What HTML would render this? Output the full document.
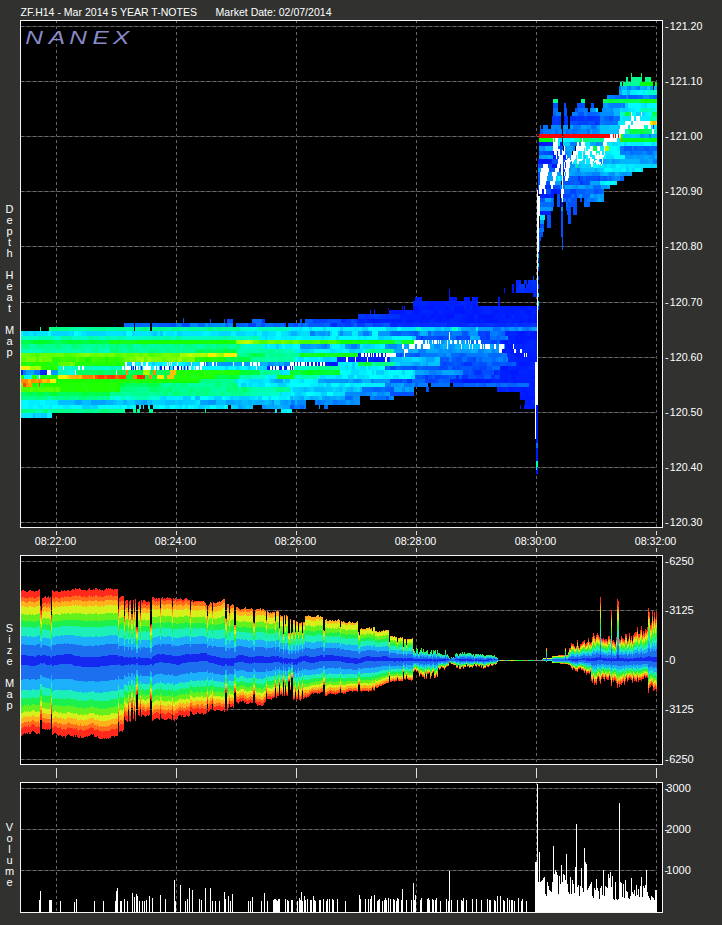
<!DOCTYPE html><html><head><meta charset="utf-8"><title>ZF.H14 - Mar 2014 5 YEAR T-NOTES</title><style>html,body{margin:0;padding:0;background:#313230;overflow:hidden}body{width:722px;height:925px;position:relative;font-family:"Liberation Sans",Arial,sans-serif}</style></head><body><svg width="722" height="925" viewBox="0 0 722 925" style="position:absolute;left:0;top:0;display:block"><g shape-rendering="crispEdges"><rect x="20" y="20" width="643" height="508" fill="#000"/><rect x="20" y="555" width="643" height="210" fill="#000"/><rect x="20" y="782" width="643" height="131" fill="#000"/><path d="M56.5 20V527" stroke="#666666" stroke-width="1" stroke-dasharray="3 3"/><path d="M176.5 20V527" stroke="#666666" stroke-width="1" stroke-dasharray="3 3"/><path d="M296.5 20V527" stroke="#666666" stroke-width="1" stroke-dasharray="3 3"/><path d="M416.5 20V527" stroke="#666666" stroke-width="1" stroke-dasharray="3 3"/><path d="M536.5 20V527" stroke="#666666" stroke-width="1" stroke-dasharray="3 3"/><path d="M656.5 20V527" stroke="#666666" stroke-width="1" stroke-dasharray="3 3"/><path d="M56.5 555V764" stroke="#666666" stroke-width="1" stroke-dasharray="3 3"/><path d="M176.5 555V764" stroke="#666666" stroke-width="1" stroke-dasharray="3 3"/><path d="M296.5 555V764" stroke="#666666" stroke-width="1" stroke-dasharray="3 3"/><path d="M416.5 555V764" stroke="#666666" stroke-width="1" stroke-dasharray="3 3"/><path d="M536.5 555V764" stroke="#666666" stroke-width="1" stroke-dasharray="3 3"/><path d="M656.5 555V764" stroke="#666666" stroke-width="1" stroke-dasharray="3 3"/><path d="M56.5 782V912" stroke="#666666" stroke-width="1" stroke-dasharray="3 3"/><path d="M176.5 782V912" stroke="#666666" stroke-width="1" stroke-dasharray="3 3"/><path d="M296.5 782V912" stroke="#666666" stroke-width="1" stroke-dasharray="3 3"/><path d="M416.5 782V912" stroke="#666666" stroke-width="1" stroke-dasharray="3 3"/><path d="M536.5 782V912" stroke="#666666" stroke-width="1" stroke-dasharray="3 3"/><path d="M656.5 782V912" stroke="#666666" stroke-width="1" stroke-dasharray="3 3"/><path d="M21 26.5H657" stroke="#3c3c3c" stroke-width="1"/><path d="M21 26.5H657" stroke="#6a6a6a" stroke-width="1" stroke-dasharray="3 3"/><path d="M21 81.5H657" stroke="#3c3c3c" stroke-width="1"/><path d="M21 81.5H657" stroke="#6a6a6a" stroke-width="1" stroke-dasharray="3 3"/><path d="M21 136.5H657" stroke="#3c3c3c" stroke-width="1"/><path d="M21 136.5H657" stroke="#6a6a6a" stroke-width="1" stroke-dasharray="3 3"/><path d="M21 191.5H657" stroke="#3c3c3c" stroke-width="1"/><path d="M21 191.5H657" stroke="#6a6a6a" stroke-width="1" stroke-dasharray="3 3"/><path d="M21 246.5H657" stroke="#3c3c3c" stroke-width="1"/><path d="M21 246.5H657" stroke="#6a6a6a" stroke-width="1" stroke-dasharray="3 3"/><path d="M21 302.5H657" stroke="#3c3c3c" stroke-width="1"/><path d="M21 302.5H657" stroke="#6a6a6a" stroke-width="1" stroke-dasharray="3 3"/><path d="M21 357.5H657" stroke="#3c3c3c" stroke-width="1"/><path d="M21 357.5H657" stroke="#6a6a6a" stroke-width="1" stroke-dasharray="3 3"/><path d="M21 412.5H657" stroke="#3c3c3c" stroke-width="1"/><path d="M21 412.5H657" stroke="#6a6a6a" stroke-width="1" stroke-dasharray="3 3"/><path d="M21 467.5H657" stroke="#3c3c3c" stroke-width="1"/><path d="M21 467.5H657" stroke="#6a6a6a" stroke-width="1" stroke-dasharray="3 3"/><path d="M21 522.5H657" stroke="#3c3c3c" stroke-width="1"/><path d="M21 522.5H657" stroke="#6a6a6a" stroke-width="1" stroke-dasharray="3 3"/><path d="M21 561.5H657" stroke="#3c3c3c" stroke-width="1"/><path d="M21 561.5H657" stroke="#6a6a6a" stroke-width="1" stroke-dasharray="3 3"/><path d="M21 610.5H657" stroke="#3c3c3c" stroke-width="1"/><path d="M21 610.5H657" stroke="#6a6a6a" stroke-width="1" stroke-dasharray="3 3"/><path d="M21 660.5H657" stroke="#3c3c3c" stroke-width="1"/><path d="M21 660.5H657" stroke="#6a6a6a" stroke-width="1" stroke-dasharray="3 3"/><path d="M21 709.5H657" stroke="#3c3c3c" stroke-width="1"/><path d="M21 709.5H657" stroke="#6a6a6a" stroke-width="1" stroke-dasharray="3 3"/><path d="M21 759.5H657" stroke="#3c3c3c" stroke-width="1"/><path d="M21 759.5H657" stroke="#6a6a6a" stroke-width="1" stroke-dasharray="3 3"/><path d="M21 788.5H657" stroke="#3c3c3c" stroke-width="1"/><path d="M21 788.5H657" stroke="#6a6a6a" stroke-width="1" stroke-dasharray="3 3"/><path d="M21 829.5H657" stroke="#3c3c3c" stroke-width="1"/><path d="M21 829.5H657" stroke="#6a6a6a" stroke-width="1" stroke-dasharray="3 3"/><path d="M21 870.5H657" stroke="#3c3c3c" stroke-width="1"/><path d="M21 870.5H657" stroke="#6a6a6a" stroke-width="1" stroke-dasharray="3 3"/><path d="M631 73h1v4h-1zM641 73h1v4h-1zM652 112h5v4h-5zM621 134h2v4h-2zM554 138h1v4h-1zM580 138h2v4h-2zM593 146h4v5h-4zM577 164h1v4h-1zM251 353h3v4h-3zM260 353h5v4h-5zM225 357h3v5h-3zM228 357h8v5h-8zM236 357h3v5h-3zM245 357h3v5h-3zM358 362h3v4h-3zM117 370h6v5h-6zM134 370h6v5h-6zM140 370h3v5h-3zM150 370h3v5h-3zM165 370h5v5h-5zM255 370h5v5h-5zM145 375h4v4h-4zM152 375h5v4h-5zM164 375h3v4h-3zM215 375h5v4h-5zM223 375h6v4h-6zM147 383h8v4h-8z" fill="#00ff48"/><path d="M626 77h2v5h-2zM631 77h8v5h-8zM639 77h3v5h-3zM620 82h2v4h-2zM627 82h5v4h-5zM632 82h3v4h-3zM638 82h2v4h-2zM553 99h5v4h-5zM581 99h4v4h-4zM650 129h2v5h-2zM589 138h3v4h-3zM592 138h5v4h-5zM40 327h1v4h-1zM62 327h2v4h-2zM91 327h3v4h-3zM94 327h8v4h-8zM117 327h8v4h-8zM130 327h2v4h-2zM140 327h2v4h-2zM21 344h2v5h-2zM35 344h4v5h-4zM44 344h4v5h-4zM48 344h8v5h-8zM60 344h3v5h-3zM63 344h2v5h-2zM80 344h2v5h-2zM96 344h3v5h-3zM102 344h4v5h-4zM108 344h3v5h-3zM119 344h8v5h-8zM163 344h3v5h-3zM182 344h3v5h-3zM193 344h5v5h-5zM203 344h6v5h-6zM219 344h3v5h-3zM128 349h5v4h-5zM133 349h3v4h-3zM136 349h3v4h-3zM177 349h4v4h-4zM181 349h3v4h-3zM184 349h6v4h-6zM383 349h3v4h-3zM386 349h3v4h-3zM389 349h5v4h-5zM237 353h4v4h-4zM241 353h4v4h-4zM245 353h2v4h-2zM271 353h3v4h-3zM274 353h5v4h-5zM279 353h2v4h-2zM281 353h6v4h-6zM297 353h3v4h-3zM250 357h4v5h-4zM260 357h6v5h-6zM278 357h3v5h-3zM386 362h6v4h-6zM392 362h3v4h-3zM323 366h4v4h-4zM262 370h3v5h-3zM265 370h8v5h-8zM276 370h4v5h-4zM222 379h6v4h-6zM228 379h5v4h-5zM233 379h2v4h-2zM110 392h5v4h-5zM118 392h6v4h-6zM130 392h8v4h-8zM138 392h6v4h-6zM147 392h2v4h-2zM153 392h8v4h-8zM161 392h3v4h-3zM181 392h4v4h-4zM199 392h5v4h-5zM207 392h8v4h-8zM235 392h5v4h-5zM248 392h2v4h-2zM26 396h8v4h-8zM45 396h3v4h-3zM52 396h4v4h-4zM59 396h3v4h-3zM62 396h3v4h-3zM69 396h4v4h-4zM73 396h3v4h-3zM86 396h5v4h-5zM96 396h4v4h-4zM100 396h6v4h-6zM106 396h4v4h-4zM26 409h4v4h-4zM53 409h6v4h-6zM63 409h2v4h-2zM65 409h3v4h-3zM71 409h3v4h-3zM91 409h3v4h-3zM96 409h2v4h-2zM98 409h3v4h-3zM109 409h6v4h-6zM117 409h5v4h-5zM122 409h3v4h-3zM133 409h3v4h-3zM137 409h3v4h-3zM149 409h4v4h-4zM205 409h1v4h-1z" fill="#00ff90"/><path d="M645 77h3v5h-3zM648 77h3v5h-3zM49 327h3v4h-3zM52 327h8v4h-8zM60 327h2v4h-2zM64 327h5v4h-5zM102 327h4v4h-4zM142 327h6v4h-6zM27 344h3v5h-3zM39 344h3v5h-3zM42 344h2v5h-2zM75 344h5v5h-5zM111 344h5v5h-5zM142 344h4v5h-4zM174 344h3v5h-3zM177 344h3v5h-3zM185 344h8v5h-8zM209 344h3v5h-3zM222 344h5v5h-5zM227 344h3v5h-3zM121 349h2v4h-2zM148 349h3v4h-3zM151 349h5v4h-5zM166 349h3v4h-3zM169 349h2v4h-2zM269 353h2v4h-2zM291 353h3v4h-3zM376 362h6v4h-6zM382 362h4v4h-4zM317 366h6v4h-6zM327 366h6v4h-6zM200 379h8v4h-8zM208 379h8v4h-8zM216 379h6v4h-6zM180 383h5v4h-5zM185 383h3v4h-3zM226 383h3v4h-3zM229 383h3v4h-3zM115 392h3v4h-3zM144 392h3v4h-3zM179 392h2v4h-2zM185 392h8v4h-8zM232 392h3v4h-3zM240 392h3v4h-3zM21 396h5v4h-5zM34 396h8v4h-8zM42 396h3v4h-3zM56 396h3v4h-3zM91 396h5v4h-5zM21 409h3v4h-3zM30 409h3v4h-3zM33 409h2v4h-2zM59 409h4v4h-4zM68 409h3v4h-3zM85 409h6v4h-6zM115 409h2v4h-2z" fill="#00ff82"/><path d="M623 82h4v4h-4zM583 138h6v4h-6zM600 138h3v4h-3zM397 340h3v4h-3zM400 340h2v4h-2zM23 344h4v5h-4zM56 344h4v5h-4zM72 344h3v5h-3zM116 344h3v5h-3zM127 344h4v5h-4zM131 344h2v5h-2zM216 344h3v5h-3zM236 344h4v5h-4zM110 349h8v4h-8zM156 349h2v4h-2zM371 349h4v4h-4zM247 353h4v4h-4zM160 383h2v4h-2zM173 383h3v4h-3zM215 383h6v4h-6zM232 383h6v4h-6zM164 392h4v4h-4zM171 392h8v4h-8zM196 392h3v4h-3zM204 392h3v4h-3zM222 392h2v4h-2zM65 396h4v4h-4zM78 396h8v4h-8zM24 409h2v4h-2zM43 409h5v4h-5zM101 409h8v4h-8z" fill="#00ff74"/><path d="M635 82h3v4h-3zM643 108h5v4h-5zM650 116h3v5h-3zM653 116h4v5h-4zM79 327h4v4h-4zM125 327h5v4h-5zM132 327h2v4h-2zM148 327h2v4h-2zM277 327h5v4h-5zM30 344h5v5h-5zM106 344h2v5h-2zM133 344h6v5h-6zM139 344h3v5h-3zM180 344h2v5h-2zM198 344h5v5h-5zM123 349h5v4h-5zM139 349h6v4h-6zM375 349h8v4h-8zM265 353h4v4h-4zM287 353h4v4h-4zM266 357h3v5h-3zM275 357h3v5h-3zM110 366h5v4h-5zM120 366h3v4h-3zM273 370h3v5h-3zM244 375h8v4h-8zM294 375h2v4h-2zM301 375h8v4h-8zM313 375h3v4h-3zM188 383h5v4h-5zM168 392h3v4h-3zM250 392h5v4h-5zM48 396h4v4h-4zM76 396h2v4h-2zM138 396h6v4h-6zM144 396h5v4h-5zM35 409h8v4h-8zM48 409h5v4h-5z" fill="#00ffac"/><path d="M640 82h3v4h-3zM643 82h6v4h-6zM655 82h2v4h-2zM541 138h5v4h-5zM551 138h2v4h-2z" fill="#00ff10"/><path d="M649 82h4v4h-4zM539 138h2v4h-2z" fill="#00ff00"/><path d="M619 86h2v4h-2zM629 86h2v4h-2zM637 86h3v4h-3zM600 116h4v5h-4zM649 134h2v4h-2zM570 142h7v4h-7zM573 146h2v5h-2zM600 159h3v5h-3zM653 159h4v5h-4zM577 168h3v4h-3zM560 185h5v4h-5zM551 198h2v4h-2zM310 331h5v5h-5zM363 331h6v5h-6zM324 344h3v5h-3zM351 344h6v5h-6zM418 349h8v4h-8zM478 349h4v4h-4zM492 349h3v4h-3zM449 357h3v5h-3zM200 362h5v4h-5zM205 362h3v4h-3zM23 370h3v5h-3zM34 370h6v5h-6zM429 370h4v5h-4zM433 370h3v5h-3zM356 379h3v4h-3zM371 379h3v4h-3zM385 383h2v4h-2zM387 383h4v4h-4zM404 383h8v4h-8zM361 392h5v4h-5zM291 400h4v5h-4z" fill="#007cff"/><path d="M621 86h3v4h-3zM624 86h3v4h-3zM613 108h7v4h-7zM614 112h2v4h-2zM616 112h4v4h-4zM651 134h6v4h-6zM545 146h8v5h-8zM570 151h2v4h-2zM548 155h3v4h-3zM655 155h2v4h-2zM609 159h3v5h-3zM598 198h3v4h-3zM338 331h2v5h-2zM343 331h9v5h-9zM420 331h6v5h-6zM470 336h4v4h-4zM445 340h8v4h-8zM430 344h4v5h-4zM443 344h6v5h-6zM501 344h4v5h-4zM413 349h5v4h-5zM471 349h4v4h-4zM251 362h3v4h-3zM262 362h6v4h-6zM362 379h3v4h-3zM365 379h6v4h-6zM290 396h3v4h-3zM298 396h3v4h-3zM313 396h6v4h-6zM336 396h4v4h-4zM150 400h2v5h-2zM295 400h2v5h-2zM277 405h5v4h-5z" fill="#00b4ff"/><path d="M627 86h2v4h-2zM590 108h2v4h-2zM602 108h4v4h-4zM610 108h3v4h-3zM600 112h6v4h-6zM606 112h8v4h-8zM596 142h3v4h-3zM543 146h2v5h-2zM565 151h5v4h-5zM652 155h3v4h-3zM576 185h2v4h-2zM594 194h3v4h-3zM595 198h3v4h-3zM551 207h2v4h-2zM328 331h2v5h-2zM340 331h3v5h-3zM467 340h3v4h-3zM321 344h3v5h-3zM388 344h6v5h-6zM394 344h3v5h-3zM434 344h6v5h-6zM449 344h2v5h-2zM439 349h3v4h-3zM448 349h5v4h-5zM482 349h2v4h-2zM268 362h3v4h-3zM436 370h6v5h-6zM460 370h3v5h-3zM346 379h2v4h-2zM353 379h3v4h-3zM359 379h3v4h-3zM412 383h3v4h-3zM402 387h3v5h-3zM345 392h8v4h-8zM353 392h8v4h-8zM366 392h6v4h-6zM377 392h5v4h-5zM382 392h2v4h-2zM297 400h3v5h-3zM300 400h6v5h-6z" fill="#008aff"/><path d="M631 86h3v4h-3zM643 134h6v4h-6zM590 142h3v4h-3zM593 142h3v4h-3zM565 146h8v5h-8zM542 155h6v4h-6zM551 155h2v4h-2zM634 155h2v4h-2zM644 155h2v4h-2zM646 155h3v4h-3zM603 159h6v5h-6zM615 159h5v5h-5zM648 159h5v5h-5zM571 168h6v4h-6zM557 172h2v4h-2zM551 176h2v5h-2zM555 181h2v4h-2zM559 181h2v4h-2zM590 181h8v4h-8zM565 185h5v4h-5zM570 185h3v4h-3zM578 185h5v4h-5zM583 185h2v4h-2zM590 194h4v4h-4zM597 194h3v4h-3zM545 198h6v4h-6zM315 331h4v5h-4zM325 331h3v5h-3zM358 331h5v5h-5zM426 331h2v5h-2zM474 336h6v4h-6zM429 340h6v4h-6zM461 340h4v4h-4zM465 340h2v4h-2zM311 344h6v5h-6zM397 344h4v5h-4zM404 344h6v5h-6zM410 344h4v5h-4zM440 344h3v5h-3zM490 344h3v5h-3zM394 349h8v4h-8zM405 349h8v4h-8zM426 349h4v4h-4zM430 349h4v4h-4zM434 349h5v4h-5zM457 349h3v4h-3zM475 349h3v4h-3zM487 349h5v4h-5zM208 362h6v4h-6zM232 362h4v4h-4zM236 362h5v4h-5zM249 362h2v4h-2zM254 362h8v4h-8zM26 370h5v5h-5zM31 370h3v5h-3zM415 370h6v5h-6zM421 370h3v5h-3zM442 370h8v5h-8zM450 370h4v5h-4zM318 379h6v4h-6zM348 379h3v4h-3zM351 379h2v4h-2zM399 383h5v4h-5zM394 387h8v5h-8zM405 387h4v5h-4zM372 392h5v4h-5zM386 392h4v4h-4zM301 396h3v4h-3zM310 396h3v4h-3zM322 396h3v4h-3zM330 396h6v4h-6zM340 396h5v4h-5zM288 400h3v5h-3zM266 405h3v4h-3zM269 405h8v4h-8zM282 405h4v4h-4zM286 405h4v4h-4z" fill="#00a6ff"/><path d="M634 86h3v4h-3zM650 86h3v4h-3zM592 108h4v4h-4zM606 108h4v4h-4zM563 125h5v4h-5zM640 134h3v4h-3zM579 142h2v4h-2zM599 142h4v4h-4zM539 146h4v5h-4zM539 155h3v4h-3zM567 155h4v4h-4zM625 155h5v4h-5zM630 155h4v4h-4zM636 155h3v4h-3zM639 155h3v4h-3zM642 155h2v4h-2zM649 155h3v4h-3zM570 159h2v5h-2zM612 159h3v5h-3zM640 159h3v5h-3zM643 159h5v5h-5zM570 164h5v4h-5zM538 168h3v4h-3zM569 168h2v4h-2zM548 172h4v4h-4zM559 172h2v4h-2zM561 172h2v4h-2zM565 172h1v4h-1zM547 176h4v5h-4zM557 181h2v4h-2zM598 181h2v4h-2zM573 185h3v4h-3zM600 194h4v4h-4zM601 198h3v4h-3zM540 207h8v4h-8zM548 207h3v4h-3zM561 207h2v4h-2zM540 220h4v4h-4zM470 327h2v4h-2zM472 327h4v4h-4zM319 331h3v5h-3zM322 331h3v5h-3zM369 331h3v5h-3zM378 331h5v5h-5zM383 331h3v5h-3zM386 331h4v5h-4zM470 331h4v5h-4zM474 331h4v5h-4zM423 340h6v4h-6zM435 340h6v4h-6zM441 340h4v4h-4zM453 340h8v4h-8zM300 344h5v5h-5zM305 344h6v5h-6zM317 344h4v5h-4zM327 344h3v5h-3zM345 344h3v5h-3zM348 344h3v5h-3zM357 344h3v5h-3zM385 344h3v5h-3zM401 344h3v5h-3zM414 344h3v5h-3zM421 344h2v5h-2zM451 344h4v5h-4zM480 344h8v5h-8zM488 344h2v5h-2zM493 344h8v5h-8zM402 349h3v4h-3zM442 349h6v4h-6zM453 349h4v4h-4zM460 349h6v4h-6zM466 349h5v4h-5zM484 349h3v4h-3zM495 349h4v4h-4zM214 362h8v4h-8zM222 362h4v4h-4zM226 362h6v4h-6zM241 362h4v4h-4zM245 362h4v4h-4zM271 362h4v4h-4zM51 370h7v5h-7zM424 370h2v5h-2zM426 370h3v5h-3zM454 370h3v5h-3zM457 370h3v5h-3zM324 379h3v4h-3zM327 379h8v4h-8zM335 379h8v4h-8zM343 379h3v4h-3zM374 379h5v4h-5zM379 379h5v4h-5zM384 379h6v4h-6zM391 383h8v4h-8zM409 387h3v5h-3zM412 387h2v5h-2zM384 392h2v4h-2zM325 396h5v4h-5zM262 405h4v4h-4zM319 405h1v4h-1z" fill="#0098ff"/><path d="M640 86h4v4h-4zM627 90h3v5h-3zM291 331h6v5h-6zM455 344h3v5h-3zM458 344h3v5h-3zM461 344h3v5h-3zM390 357h4v5h-4zM411 362h3v4h-3zM423 362h3v4h-3zM74 400h2v5h-2zM106 400h8v5h-8zM123 400h4v5h-4zM135 400h8v5h-8zM242 405h2v4h-2z" fill="#00b2ff"/><path d="M644 86h3v4h-3zM619 90h3v5h-3zM570 125h3v4h-3zM581 125h5v4h-5zM598 125h2v4h-2zM590 129h2v5h-2zM595 168h2v4h-2zM607 185h3v4h-3zM461 327h6v4h-6zM467 327h3v4h-3zM518 327h4v4h-4zM535 327h2v4h-2zM426 357h3v5h-3zM429 357h5v5h-5zM414 362h6v4h-6zM426 362h2v4h-2zM275 379h8v4h-8zM76 400h2v5h-2zM78 400h4v5h-4zM91 400h6v5h-6zM97 400h6v5h-6zM103 400h3v5h-3zM143 400h4v5h-4zM238 405h4v4h-4z" fill="#00a4ff"/><path d="M647 86h3v4h-3zM610 125h8v4h-8zM631 134h6v4h-6zM563 142h3v4h-3zM566 142h4v4h-4zM458 327h3v4h-3zM288 331h3v5h-3zM297 331h3v5h-3zM402 357h5v5h-5zM407 357h5v5h-5zM419 357h2v5h-2zM436 357h4v5h-4zM187 362h6v4h-6zM230 396h3v4h-3zM239 396h8v4h-8zM247 396h3v4h-3zM117 400h6v5h-6zM127 400h8v5h-8zM234 405h4v4h-4zM247 405h2v4h-2z" fill="#00ceff"/><path d="M654 86h3v4h-3zM600 125h8v4h-8zM608 125h2v4h-2zM618 125h2v4h-2zM600 129h6v5h-6zM606 129h8v5h-8zM614 129h5v5h-5zM623 134h8v4h-8zM637 134h3v4h-3zM580 168h2v4h-2zM582 168h5v4h-5zM587 168h8v4h-8zM597 168h3v4h-3zM464 344h8v5h-8zM472 344h8v5h-8zM394 357h8v5h-8zM421 357h5v5h-5zM434 357h2v5h-2zM400 362h3v4h-3zM403 362h8v4h-8zM420 362h3v4h-3zM428 362h8v4h-8zM436 362h4v4h-4zM270 379h3v4h-3zM273 379h2v4h-2zM285 379h5v4h-5zM195 396h5v4h-5zM58 400h8v5h-8zM66 400h8v5h-8zM82 400h6v5h-6zM88 400h3v5h-3zM114 400h3v5h-3zM147 400h3v5h-3zM244 405h3v4h-3zM249 405h4v4h-4z" fill="#00c0ff"/><path d="M622 90h5v5h-5zM412 357h4v5h-4zM416 357h3v5h-3zM193 362h7v4h-7zM395 362h5v4h-5zM283 379h2v4h-2zM233 396h6v4h-6zM231 405h3v4h-3z" fill="#00dcff"/><path d="M630 90h4v5h-4zM634 90h3v5h-3zM643 90h2v5h-2zM641 103h3v5h-3zM596 108h2v4h-2zM631 108h4v4h-4zM645 112h3v4h-3zM620 116h3v5h-3zM634 116h2v5h-2zM640 116h3v5h-3zM643 116h7v5h-7zM618 121h7v4h-7zM631 121h2v4h-2zM628 125h2v4h-2zM651 125h2v4h-2zM654 125h3v4h-3zM558 138h4v4h-4zM603 138h1v4h-1zM617 138h3v4h-3zM558 142h2v4h-2zM585 142h5v4h-5zM607 142h3v4h-3zM610 142h2v4h-2zM618 142h3v4h-3zM630 142h6v4h-6zM636 142h3v4h-3zM639 142h5v4h-5zM655 142h2v4h-2zM600 146h5v5h-5zM617 146h3v5h-3zM578 151h5v4h-5zM583 151h3v4h-3zM590 151h2v4h-2zM602 151h5v4h-5zM607 151h4v4h-4zM579 155h5v4h-5zM589 155h6v4h-6zM597 155h2v4h-2zM573 159h5v5h-5zM586 159h4v5h-4zM599 164h5v4h-5zM607 164h3v4h-3zM620 164h6v4h-6zM629 164h5v4h-5zM612 168h4v4h-4zM616 168h6v4h-6zM629 168h3v4h-3zM600 181h3v4h-3zM603 181h2v4h-2zM615 181h2v4h-2zM540 215h5v5h-5zM290 327h8v4h-8zM298 327h2v4h-2zM343 327h6v4h-6zM349 327h6v4h-6zM357 327h5v4h-5zM476 327h2v4h-2zM352 331h4v5h-4zM356 331h2v5h-2zM260 336h5v4h-5zM267 336h8v4h-8zM281 336h3v4h-3zM284 336h4v4h-4zM288 336h8v4h-8zM302 336h6v4h-6zM308 336h8v4h-8zM316 336h5v4h-5zM324 336h6v4h-6zM358 336h3v4h-3zM363 336h2v4h-2zM365 336h2v4h-2zM270 344h3v5h-3zM273 344h3v5h-3zM279 344h3v5h-3zM285 344h8v5h-8zM330 344h2v5h-2zM342 344h3v5h-3zM360 344h3v5h-3zM375 344h2v5h-2zM377 344h3v5h-3zM295 349h6v4h-6zM335 349h8v4h-8zM308 357h4v5h-4zM312 357h6v5h-6zM320 357h3v5h-3zM132 362h4v4h-4zM139 362h3v4h-3zM149 362h3v4h-3zM155 362h8v4h-8zM171 362h5v4h-5zM182 362h3v4h-3zM338 362h8v4h-8zM346 362h3v4h-3zM149 366h3v4h-3zM164 366h5v4h-5zM180 366h8v4h-8zM188 366h2v4h-2zM196 366h4v4h-4zM200 366h3v4h-3zM239 366h2v4h-2zM246 366h2v4h-2zM251 366h6v4h-6zM340 366h3v4h-3zM343 366h2v4h-2zM348 366h4v4h-4zM355 366h5v4h-5zM370 366h2v4h-2zM372 366h2v4h-2zM374 366h5v4h-5zM283 370h2v5h-2zM285 370h3v5h-3zM288 370h2v5h-2zM359 370h8v5h-8zM384 370h4v5h-4zM268 375h4v4h-4zM272 375h5v4h-5zM326 375h5v4h-5zM331 375h5v4h-5zM365 375h2v4h-2zM383 375h6v4h-6zM243 379h6v4h-6zM263 379h3v4h-3zM266 379h4v4h-4zM298 379h3v4h-3zM313 379h5v4h-5zM246 383h3v4h-3zM252 383h6v4h-6zM270 383h2v4h-2zM272 383h3v4h-3zM275 383h3v4h-3zM286 383h3v4h-3zM310 383h8v4h-8zM354 383h8v4h-8zM365 383h3v4h-3zM368 383h6v4h-6zM374 383h4v4h-4zM378 383h3v4h-3zM381 383h4v4h-4zM290 387h3v5h-3zM282 392h6v4h-6zM288 392h3v4h-3zM314 392h4v4h-4zM318 392h3v4h-3zM166 396h8v4h-8zM174 396h6v4h-6zM180 396h3v4h-3zM208 396h6v4h-6zM225 396h5v4h-5zM255 396h3v4h-3zM279 396h8v4h-8zM28 400h5v5h-5zM33 400h2v5h-2zM35 400h2v5h-2zM37 400h3v5h-3zM45 400h3v5h-3zM48 400h3v5h-3zM51 400h7v5h-7zM197 400h3v5h-3zM29 405h4v4h-4zM38 405h5v4h-5zM49 405h3v4h-3zM63 405h3v4h-3zM66 405h2v4h-2zM68 405h3v4h-3zM119 405h3v4h-3zM139 405h2v4h-2zM143 405h1v4h-1zM148 405h2v4h-2zM153 405h6v4h-6zM175 405h4v4h-4zM194 405h4v4h-4zM275 409h2v4h-2zM281 409h6v4h-6z" fill="#00ecff"/><path d="M637 90h6v5h-6zM628 103h5v5h-5zM633 103h8v5h-8zM647 103h6v5h-6zM653 103h4v5h-4zM635 108h5v4h-5zM632 112h4v4h-4zM648 112h4v4h-4zM563 138h8v4h-8zM621 142h3v4h-3zM627 142h3v4h-3zM584 146h4v5h-4zM588 146h2v5h-2zM611 151h2v4h-2zM576 155h3v4h-3zM586 155h2v4h-2zM619 155h2v4h-2zM591 159h3v5h-3zM616 164h4v4h-4zM622 168h4v4h-4zM635 168h4v4h-4zM639 168h2v4h-2zM558 176h2v5h-2zM605 181h6v4h-6zM611 181h4v4h-4zM302 327h4v4h-4zM306 327h3v4h-3zM312 327h3v4h-3zM315 327h8v4h-8zM326 327h5v4h-5zM331 327h6v4h-6zM337 327h3v4h-3zM368 327h2v4h-2zM374 327h4v4h-4zM378 327h8v4h-8zM397 327h4v4h-4zM332 331h6v5h-6zM372 331h2v5h-2zM275 336h3v4h-3zM278 336h3v4h-3zM296 336h6v4h-6zM330 336h6v4h-6zM339 336h5v4h-5zM344 336h2v4h-2zM346 336h6v4h-6zM352 336h6v4h-6zM361 336h2v4h-2zM367 336h6v4h-6zM373 336h2v4h-2zM375 336h3v4h-3zM392 336h6v4h-6zM398 336h8v4h-8zM406 336h6v4h-6zM267 344h3v5h-3zM298 344h2v5h-2zM332 344h8v5h-8zM380 344h3v5h-3zM314 349h8v4h-8zM322 349h8v4h-8zM343 349h6v4h-6zM363 349h2v4h-2zM295 357h3v5h-3zM304 357h4v5h-4zM318 357h2v5h-2zM142 362h5v4h-5zM147 362h2v4h-2zM349 362h3v4h-3zM355 362h3v4h-3zM152 366h2v4h-2zM172 366h8v4h-8zM203 366h3v4h-3zM206 366h5v4h-5zM211 366h8v4h-8zM219 366h6v4h-6zM228 366h3v4h-3zM231 366h2v4h-2zM233 366h3v4h-3zM241 366h5v4h-5zM366 366h2v4h-2zM346 370h3v5h-3zM349 370h2v5h-2zM374 370h2v5h-2zM388 370h3v5h-3zM391 370h3v5h-3zM394 370h6v5h-6zM400 370h2v5h-2zM405 370h8v5h-8zM24 375h8v4h-8zM265 375h3v4h-3zM342 375h6v4h-6zM377 375h6v4h-6zM389 375h4v4h-4zM399 375h6v4h-6zM405 375h3v4h-3zM408 375h3v4h-3zM238 379h5v4h-5zM290 379h8v4h-8zM304 379h3v4h-3zM307 379h6v4h-6zM238 383h3v4h-3zM289 383h2v4h-2zM324 383h2v4h-2zM331 383h2v4h-2zM333 383h6v4h-6zM345 383h5v4h-5zM362 383h3v4h-3zM291 392h3v4h-3zM311 392h3v4h-3zM287 396h3v4h-3zM21 400h5v5h-5zM40 400h5v5h-5zM21 405h6v4h-6zM27 405h2v4h-2zM33 405h5v4h-5zM43 405h6v4h-6zM52 405h2v4h-2zM57 405h3v4h-3zM60 405h3v4h-3zM71 405h3v4h-3zM74 405h8v4h-8zM98 405h8v4h-8zM106 405h8v4h-8zM114 405h5v4h-5zM130 405h6v4h-6zM162 405h3v4h-3zM182 405h3v4h-3zM188 405h6v4h-6zM210 405h3v4h-3zM213 405h3v4h-3zM226 405h2v4h-2z" fill="#00faff"/><path d="M645 90h3v5h-3zM252 327h3v4h-3zM456 327h2v4h-2zM70 370h5v5h-5zM116 396h5v4h-5zM126 396h4v4h-4z" fill="#00ffe4"/><path d="M648 90h2v5h-2zM650 108h3v4h-3zM578 138h2v4h-2zM258 327h5v4h-5zM263 327h3v4h-3zM266 327h5v4h-5zM271 327h6v4h-6zM282 327h3v4h-3zM285 327h5v4h-5zM240 344h5v5h-5zM256 344h3v5h-3zM63 366h2v4h-2zM73 366h5v4h-5zM81 366h2v4h-2zM83 366h3v4h-3zM86 366h6v4h-6zM123 366h2v4h-2zM294 366h4v4h-4zM58 370h6v5h-6zM240 375h4v4h-4zM262 375h3v4h-3zM309 375h4v4h-4zM255 392h2v4h-2zM257 392h2v4h-2zM259 392h3v4h-3zM264 392h5v4h-5zM123 396h3v4h-3zM135 396h3v4h-3z" fill="#00ffba"/><path d="M650 90h2v5h-2zM648 108h2v4h-2zM653 108h4v4h-4zM244 327h8v4h-8zM255 327h3v4h-3zM245 344h3v5h-3zM68 366h3v4h-3zM105 366h5v4h-5zM68 370h2v5h-2zM260 375h2v4h-2zM110 396h6v4h-6zM149 396h3v4h-3zM152 396h6v4h-6z" fill="#00ffd6"/><path d="M652 90h5v5h-5zM640 108h3v4h-3zM620 112h5v4h-5zM644 125h4v4h-4zM625 129h4v5h-4zM654 129h3v5h-3zM574 138h4v4h-4zM596 151h4v4h-4zM240 327h4v4h-4zM416 327h5v4h-5zM452 327h4v4h-4zM248 344h8v5h-8zM259 344h6v5h-6zM58 366h3v4h-3zM61 366h2v4h-2zM65 366h3v4h-3zM71 366h2v4h-2zM78 366h3v4h-3zM92 366h6v4h-6zM98 366h5v4h-5zM103 366h2v4h-2zM115 366h2v4h-2zM117 366h3v4h-3zM298 366h3v4h-3zM301 366h9v4h-9zM64 370h4v5h-4zM37 375h2v4h-2zM252 375h8v4h-8zM296 375h5v4h-5zM316 375h4v4h-4zM262 392h2v4h-2zM269 392h5v4h-5zM274 392h6v4h-6zM121 396h2v4h-2zM130 396h3v4h-3zM133 396h2v4h-2zM158 396h2v4h-2z" fill="#00ffc8"/><path d="M607 95h3v4h-3zM626 95h2v4h-2zM551 125h3v4h-3zM554 125h3v4h-3zM557 125h4v4h-4zM551 129h4v5h-4zM558 129h4v5h-4zM626 151h4v4h-4zM642 151h5v4h-5zM211 323h3v4h-3zM214 323h8v4h-8zM228 323h5v4h-5zM438 353h6v4h-6zM484 353h4v4h-4zM498 357h5v5h-5zM506 357h2v5h-2z" fill="#0086ff"/><path d="M610 95h5v4h-5zM649 95h4v4h-4zM543 129h3v5h-3zM546 129h5v5h-5zM620 151h6v4h-6zM633 151h3v4h-3zM636 151h6v4h-6zM208 323h3v4h-3zM420 353h4v4h-4zM424 353h3v4h-3zM427 353h5v4h-5zM432 353h3v4h-3zM435 353h3v4h-3zM444 353h2v4h-2zM467 353h4v4h-4zM471 353h5v4h-5zM476 353h5v4h-5zM481 353h3v4h-3zM502 353h5v4h-5zM482 357h6v5h-6zM488 357h4v5h-4zM496 357h2v5h-2z" fill="#0078ff"/><path d="M615 95h5v4h-5zM653 95h4v4h-4zM555 129h3v5h-3zM630 151h3v4h-3zM647 151h6v4h-6zM225 323h3v4h-3zM451 353h8v4h-8zM465 353h2v4h-2zM488 353h6v4h-6zM494 353h8v4h-8zM492 357h4v5h-4zM503 357h3v5h-3z" fill="#006aff"/><path d="M620 95h3v4h-3zM623 95h3v4h-3zM628 95h2v4h-2zM540 129h3v5h-3zM539 151h4v4h-4zM305 319h8v4h-8zM459 353h3v4h-3zM462 353h3v4h-3zM469 370h2v5h-2zM415 375h8v4h-8zM432 375h3v4h-3zM448 375h8v4h-8zM459 375h3v4h-3zM484 375h3v4h-3zM487 375h4v4h-4z" fill="#005cff"/><path d="M630 95h8v4h-8zM549 168h6v4h-6zM570 176h8v5h-8zM583 176h3v5h-3zM563 181h2v4h-2zM571 181h5v4h-5zM576 181h4v4h-4zM564 189h6v5h-6zM576 189h5v5h-5zM581 189h4v5h-4zM598 189h4v5h-4zM551 202h3v5h-3zM497 340h3v4h-3zM396 353h4v4h-4zM410 353h5v4h-5zM454 362h3v4h-3zM475 362h2v4h-2zM500 362h6v4h-6zM512 362h4v4h-4zM402 379h5v4h-5zM442 379h8v4h-8z" fill="#005eff"/><path d="M638 95h5v4h-5zM591 125h5v4h-5zM566 129h3v5h-3zM572 129h5v5h-5zM587 129h3v5h-3zM568 176h2v5h-2zM593 185h8v4h-8zM585 189h4v5h-4zM589 189h5v5h-5zM602 189h2v5h-2zM571 194h4v4h-4zM563 198h3v4h-3zM568 198h3v4h-3zM540 202h8v5h-8zM548 202h3v5h-3zM566 202h2v5h-2zM252 319h4v4h-4zM256 319h6v4h-6zM493 327h8v4h-8zM526 327h3v4h-3zM448 336h8v4h-8zM470 340h8v4h-8zM402 353h8v4h-8zM487 362h5v4h-5zM412 379h5v4h-5zM417 379h8v4h-8zM439 379h3v4h-3z" fill="#006cff"/><path d="M643 95h6v4h-6zM653 151h4v4h-4zM205 323h3v4h-3zM222 323h3v4h-3zM446 353h5v4h-5zM208 400h8v5h-8zM272 400h2v5h-2zM285 400h3v5h-3z" fill="#0094ff"/><path d="M603 99h3v4h-3zM606 99h2v4h-2zM637 99h3v4h-3zM643 129h3v5h-3zM646 129h4v5h-4zM195 349h2v4h-2zM197 349h3v4h-3zM202 349h4v4h-4zM206 349h3v4h-3zM212 349h8v4h-8zM229 349h3v4h-3zM21 392h4v4h-4zM33 392h5v4h-5zM43 392h5v4h-5zM58 392h6v4h-6zM64 392h2v4h-2zM69 392h4v4h-4zM77 392h3v4h-3z" fill="#00ff5e"/><path d="M608 99h8v4h-8zM640 129h3v5h-3zM224 349h5v4h-5zM232 349h5v4h-5zM38 392h5v4h-5zM50 392h4v4h-4zM54 392h4v4h-4zM83 392h5v4h-5z" fill="#00ff34"/><path d="M616 99h2v4h-2zM626 99h4v4h-4zM629 129h5v5h-5zM634 129h3v5h-3zM27 392h6v4h-6zM96 392h2v4h-2zM102 392h2v4h-2zM104 392h6v4h-6z" fill="#00ff42"/><path d="M618 99h8v4h-8zM630 99h3v4h-3zM633 99h4v4h-4zM637 129h3v5h-3zM200 349h2v4h-2zM209 349h3v4h-3zM220 349h4v4h-4zM48 392h2v4h-2zM66 392h3v4h-3zM73 392h4v4h-4zM80 392h3v4h-3zM88 392h8v4h-8zM98 392h4v4h-4z" fill="#00ff50"/><path d="M640 99h5v4h-5zM650 99h4v4h-4z" fill="#10ff20"/><path d="M645 99h3v4h-3z" fill="#10ff04"/><path d="M648 99h2v4h-2zM654 99h3v4h-3z" fill="#10ff12"/><path d="M553 103h5v5h-5zM564 103h2v5h-2zM577 103h5v5h-5zM582 103h3v5h-3zM591 103h3v5h-3zM564 108h3v4h-3zM564 112h3v4h-3zM558 146h5v5h-5zM560 151h3v4h-3zM557 155h3v4h-3zM552 159h6v5h-6zM538 164h5v4h-5zM548 164h4v4h-4zM538 172h2v4h-2zM538 176h2v5h-2zM563 176h2v5h-2zM580 176h3v5h-3zM586 176h4v5h-4zM590 176h8v5h-8zM538 181h2v4h-2zM546 181h4v4h-4zM565 181h6v4h-6zM583 181h3v4h-3zM586 181h4v4h-4zM538 185h1v4h-1zM553 185h7v4h-7zM546 189h5v5h-5zM594 189h4v5h-4zM557 194h3v4h-3zM540 198h5v4h-5zM553 198h1v4h-1zM557 198h3v4h-3zM561 198h1v4h-1zM566 198h2v4h-2zM571 198h4v4h-4zM575 198h2v4h-2zM580 198h2v4h-2zM557 202h3v5h-3zM568 202h6v5h-6zM574 202h3v5h-3zM566 207h5v4h-5zM573 207h4v4h-4zM561 211h2v4h-2zM567 211h4v4h-4zM573 211h4v4h-4zM547 215h4v5h-4zM561 215h2v5h-2zM568 215h3v5h-3zM547 220h4v4h-4zM561 220h2v4h-2zM568 220h3v4h-3zM540 224h4v4h-4zM547 224h4v4h-4zM561 224h2v4h-2zM561 228h2v4h-2zM539 232h4v5h-4zM561 232h2v5h-2zM538 237h3v4h-3zM562 237h1v4h-1zM538 241h2v4h-2zM562 241h1v4h-1zM538 245h2v5h-2zM562 245h1v5h-1zM538 250h1v4h-1zM210 319h1v4h-1zM224 319h1v4h-1zM227 319h6v4h-6zM300 319h2v4h-2zM416 336h5v4h-5zM423 336h5v4h-5zM428 336h6v4h-6zM434 336h3v4h-3zM443 336h5v4h-5zM462 336h4v4h-4zM481 340h2v4h-2zM483 340h8v4h-8zM415 353h5v4h-5zM440 362h3v4h-3zM446 362h8v4h-8zM457 362h4v4h-4zM472 362h3v4h-3zM477 362h4v4h-4zM481 362h6v4h-6zM492 362h8v4h-8zM506 362h6v4h-6zM390 379h2v4h-2zM392 379h4v4h-4zM396 379h4v4h-4zM436 379h3v4h-3zM426 387h3v5h-3zM390 392h4v4h-4zM394 392h3v4h-3zM397 392h8v4h-8zM405 392h3v4h-3zM408 392h6v4h-6z" fill="#0050ff"/><path d="M603 103h5v5h-5z" fill="#009cff"/><path d="M608 103h2v5h-2zM621 103h2v5h-2z" fill="#008eff"/><path d="M610 103h3v5h-3zM613 103h8v5h-8z" fill="#0080ff"/><path d="M623 103h2v5h-2z" fill="#0072ff"/><path d="M625 103h3v5h-3zM622 108h6v4h-6zM636 112h3v4h-3zM584 155h2v4h-2zM575 164h2v4h-2zM581 164h5v4h-5zM586 164h4v4h-4zM590 164h3v4h-3zM651 164h2v4h-2zM600 168h4v4h-4zM626 168h3v4h-3zM556 176h2v5h-2zM560 176h2v5h-2zM340 327h3v4h-3zM362 327h6v4h-6zM386 327h8v4h-8zM394 327h3v4h-3zM265 336h2v4h-2zM378 336h6v4h-6zM412 336h4v4h-4zM276 344h3v5h-3zM363 344h8v5h-8zM301 349h8v4h-8zM349 349h6v4h-6zM323 357h8v5h-8zM125 362h4v4h-4zM129 362h3v4h-3zM152 362h3v4h-3zM352 362h3v4h-3zM136 366h8v4h-8zM154 366h8v4h-8zM248 366h3v4h-3zM263 366h4v4h-4zM352 366h3v4h-3zM376 370h8v5h-8zM348 375h6v4h-6zM241 383h5v4h-5zM278 383h8v4h-8zM326 383h5v4h-5zM293 387h7v5h-7zM296 392h6v4h-6zM321 392h6v4h-6zM163 396h3v4h-3zM183 396h8v4h-8zM214 396h8v4h-8zM258 396h4v4h-4zM293 396h2v4h-2zM304 396h3v4h-3zM319 396h3v4h-3zM152 400h8v5h-8zM160 400h5v5h-5zM175 400h3v5h-3zM183 400h8v5h-8zM191 400h4v5h-4zM82 405h8v4h-8zM93 405h5v4h-5zM198 405h6v4h-6z" fill="#00d0ff"/><path d="M644 103h3v5h-3zM620 108h2v4h-2zM628 108h3v4h-3zM639 112h2v4h-2zM642 112h3v4h-3zM623 116h6v5h-6zM629 116h2v5h-2zM612 142h6v4h-6zM624 142h3v4h-3zM651 142h4v4h-4zM606 155h6v4h-6zM612 155h2v4h-2zM579 159h6v5h-6zM594 159h3v5h-3zM597 159h3v5h-3zM604 164h3v4h-3zM610 164h6v4h-6zM626 164h3v4h-3zM634 164h6v4h-6zM640 164h3v4h-3zM643 164h2v4h-2zM645 164h6v4h-6zM653 164h4v4h-4zM632 168h3v4h-3zM641 168h2v4h-2zM300 327h2v4h-2zM309 327h3v4h-3zM323 327h3v4h-3zM355 327h2v4h-2zM401 327h4v4h-4zM405 327h3v4h-3zM408 327h8v4h-8zM300 331h3v5h-3zM303 331h3v5h-3zM306 331h4v5h-4zM330 331h2v5h-2zM321 336h3v4h-3zM336 336h3v4h-3zM384 336h8v4h-8zM265 344h2v5h-2zM340 344h2v5h-2zM371 344h4v5h-4zM309 349h5v4h-5zM330 349h5v4h-5zM355 349h8v4h-8zM298 357h6v5h-6zM331 357h6v5h-6zM185 362h2v4h-2zM128 366h8v4h-8zM162 366h2v4h-2zM169 366h3v4h-3zM225 366h3v4h-3zM236 366h3v4h-3zM257 366h6v4h-6zM345 366h3v4h-3zM360 366h6v4h-6zM368 366h2v4h-2zM280 370h3v5h-3zM351 370h8v5h-8zM372 370h2v5h-2zM402 370h3v5h-3zM413 370h2v5h-2zM320 375h6v4h-6zM336 375h4v4h-4zM340 375h2v4h-2zM357 375h8v4h-8zM367 375h2v4h-2zM393 375h6v4h-6zM411 375h4v4h-4zM235 379h3v4h-3zM249 379h6v4h-6zM255 379h8v4h-8zM301 379h3v4h-3zM249 383h3v4h-3zM258 383h4v4h-4zM262 383h3v4h-3zM318 383h6v4h-6zM339 383h6v4h-6zM350 383h4v4h-4zM280 392h2v4h-2zM294 392h2v4h-2zM302 392h4v4h-4zM333 392h3v4h-3zM336 392h9v4h-9zM160 396h3v4h-3zM250 396h5v4h-5zM268 396h3v4h-3zM195 400h2v5h-2zM90 405h3v4h-3zM127 405h3v4h-3zM165 405h2v4h-2zM167 405h3v4h-3zM179 405h3v4h-3zM185 405h3v4h-3zM204 405h6v4h-6zM216 405h8v4h-8z" fill="#00deff"/><path d="M553 108h5v4h-5zM578 108h3v4h-3zM581 108h2v4h-2zM586 108h2v4h-2zM597 112h3v4h-3zM603 121h5v4h-5zM608 121h6v4h-6zM614 121h4v4h-4zM540 125h1v4h-1zM543 125h5v4h-5zM607 176h2v5h-2zM577 194h2v4h-2zM590 198h3v4h-3zM593 198h2v4h-2zM584 202h3v5h-3zM539 228h5v4h-5zM390 331h2v5h-2zM401 331h8v5h-8zM434 331h6v5h-6zM440 331h5v5h-5zM445 331h2v5h-2zM447 331h5v5h-5zM498 331h3v5h-3zM490 336h3v4h-3zM493 336h3v4h-3zM500 336h3v4h-3zM503 336h3v4h-3zM431 383h2v4h-2zM433 383h4v4h-4zM437 383h3v4h-3zM440 383h8v4h-8zM448 383h2v4h-2zM362 387h3v5h-3zM365 387h8v5h-8zM381 387h4v5h-4zM374 396h8v4h-8zM382 396h4v4h-4zM300 405h2v4h-2zM324 405h4v4h-4z" fill="#0070ff"/><path d="M575 108h3v4h-3zM578 112h6v4h-6zM603 176h4v5h-4zM414 331h4v5h-4zM462 331h6v5h-6zM391 387h3v5h-3zM386 396h3v4h-3zM290 405h4v4h-4z" fill="#0054ff"/><path d="M583 108h3v4h-3zM556 112h5v4h-5zM572 112h6v4h-6zM584 112h3v4h-3zM600 121h3v4h-3zM612 176h3v5h-3zM587 198h3v4h-3zM418 331h2v5h-2zM452 331h5v5h-5zM457 331h5v5h-5zM468 331h2v5h-2zM490 331h3v5h-3zM493 331h5v5h-5zM418 383h8v4h-8zM426 383h2v4h-2zM370 396h4v4h-4zM294 405h6v4h-6zM304 405h2v4h-2z" fill="#007eff"/><path d="M553 112h3v4h-3zM587 112h2v4h-2zM589 112h8v4h-8zM600 176h3v5h-3zM609 176h3v5h-3zM620 176h4v5h-4zM582 194h8v4h-8zM584 198h3v4h-3zM587 202h3v5h-3zM392 331h6v5h-6zM398 331h3v5h-3zM409 331h5v5h-5zM428 331h3v5h-3zM501 331h4v5h-4zM496 336h4v4h-4zM415 383h3v4h-3zM373 387h8v5h-8zM385 387h6v5h-6zM302 405h2v4h-2z" fill="#0062ff"/><path d="M625 112h3v4h-3zM254 353h3v4h-3zM239 357h6v5h-6zM363 362h9v4h-9zM249 370h6v5h-6zM126 375h5v4h-5zM235 375h3v4h-3z" fill="#00ff3a"/><path d="M628 112h3v4h-3zM257 353h3v4h-3zM361 362h2v4h-2zM162 370h3v5h-3zM220 375h3v4h-3zM123 383h8v4h-8zM135 383h4v4h-4zM155 383h5v4h-5z" fill="#00ff56"/><path d="M631 112h1v4h-1zM641 112h1v4h-1zM631 116h3v5h-3zM636 116h4v5h-4zM625 121h6v4h-6zM633 121h3v4h-3zM636 121h3v4h-3zM639 121h2v4h-2zM641 121h3v4h-3zM644 121h6v4h-6zM620 125h2v4h-2zM622 125h6v4h-6zM630 125h2v4h-2zM632 125h4v4h-4zM636 125h4v4h-4zM640 125h4v4h-4zM648 125h3v4h-3zM619 129h6v5h-6zM652 129h2v5h-2zM610 134h3v4h-3zM614 134h1v4h-1zM616 134h2v4h-2zM619 134h1v4h-1zM553 138h1v4h-1zM555 138h3v4h-3zM582 138h1v4h-1zM604 138h3v4h-3zM607 138h3v4h-3zM610 138h7v4h-7zM553 142h5v4h-5zM577 142h2v4h-2zM581 142h4v4h-4zM603 142h4v4h-4zM553 146h5v5h-5zM564 146h1v5h-1zM576 146h5v5h-5zM581 146h3v5h-3zM590 146h3v5h-3zM597 146h3v5h-3zM554 151h3v4h-3zM559 151h1v4h-1zM563 151h2v4h-2zM573 151h5v4h-5zM586 151h4v4h-4zM592 151h4v4h-4zM600 151h2v4h-2zM556 155h1v4h-1zM560 155h2v4h-2zM566 155h1v4h-1zM571 155h5v4h-5zM588 155h1v4h-1zM595 155h2v4h-2zM599 155h4v4h-4zM558 159h3v5h-3zM567 159h3v5h-3zM572 159h1v5h-1zM578 159h1v5h-1zM585 159h1v5h-1zM590 159h1v5h-1zM543 164h5v4h-5zM557 164h3v4h-3zM566 164h4v4h-4zM541 168h6v4h-6zM547 168h2v4h-2zM555 168h4v4h-4zM565 168h4v4h-4zM540 172h5v4h-5zM545 172h3v4h-3zM552 172h5v4h-5zM564 172h1v4h-1zM566 172h2v4h-2zM540 176h2v5h-2zM542 176h5v5h-5zM553 176h3v5h-3zM565 176h3v5h-3zM540 181h2v4h-2zM542 181h4v4h-4zM550 181h5v4h-5zM539 185h6v4h-6zM551 185h2v4h-2zM539 189h3v5h-3zM544 189h2v5h-2zM561 189h3v5h-3zM561 194h2v4h-2zM562 198h1v4h-1zM414 340h4v4h-4zM418 340h3v4h-3zM421 340h2v4h-2zM417 344h4v5h-4zM423 344h3v5h-3zM426 344h2v5h-2zM428 344h2v5h-2zM499 349h3v4h-3zM47 370h4v5h-4zM75 370h1v5h-1zM116 370h1v5h-1zM39 375h1v4h-1z" fill="#ffffff"/><path d="M552 116h3v5h-3zM558 116h3v5h-3zM576 116h5v5h-5zM593 116h5v5h-5zM598 116h2v5h-2zM552 121h4v4h-4zM558 121h3v4h-3zM358 314h6v5h-6zM369 314h5v5h-5zM379 314h6v5h-6z" fill="#0037ff"/><path d="M555 116h3v5h-3zM583 116h4v5h-4zM556 121h2v4h-2zM374 314h5v5h-5z" fill="#003eff"/><path d="M564 116h4v5h-4zM570 116h4v5h-4zM574 116h2v5h-2zM581 116h2v5h-2zM587 116h6v5h-6zM564 121h4v4h-4zM364 314h5v5h-5zM385 314h8v5h-8zM393 314h7v5h-7z" fill="#0030ff"/><path d="M604 116h5v5h-5zM236 323h2v4h-2zM238 323h8v4h-8zM273 323h8v4h-8zM443 357h3v5h-3zM452 357h4v5h-4zM479 357h3v5h-3zM487 366h2v4h-2zM464 383h3v4h-3zM467 383h3v4h-3zM470 383h6v4h-6zM479 383h2v4h-2zM481 383h2v4h-2zM496 383h5v4h-5zM507 383h6v4h-6zM513 383h4v4h-4z" fill="#0060ff"/><path d="M609 116h4v5h-4zM261 323h4v4h-4zM284 323h2v4h-2zM440 357h3v5h-3zM446 357h3v5h-3zM456 357h6v5h-6zM467 357h6v5h-6zM477 366h2v4h-2zM489 366h3v4h-3zM453 383h8v4h-8zM461 383h3v4h-3zM483 383h3v4h-3z" fill="#0052ff"/><path d="M613 116h5v5h-5zM618 116h2v5h-2zM246 323h2v4h-2zM256 323h5v4h-5zM265 323h5v4h-5zM270 323h3v4h-3zM281 323h3v4h-3zM462 357h5v5h-5zM476 357h3v5h-3zM492 366h3v4h-3zM495 366h5v4h-5zM476 383h3v4h-3zM486 383h8v4h-8zM494 383h2v4h-2zM501 383h6v4h-6zM517 383h3v4h-3zM520 383h9v4h-9z" fill="#006eff"/><path d="M570 121h8v4h-8zM588 121h2v4h-2zM590 121h5v4h-5zM543 151h3v4h-3zM546 151h3v4h-3zM327 319h5v4h-5zM332 319h3v4h-3zM335 319h4v4h-4zM339 319h2v4h-2zM351 319h3v4h-3zM463 370h2v5h-2zM465 370h4v5h-4zM471 370h3v5h-3zM482 370h8v5h-8zM490 370h4v5h-4zM423 375h3v4h-3zM428 375h4v4h-4zM440 375h8v4h-8zM468 375h8v4h-8zM495 375h3v4h-3z" fill="#004eff"/><path d="M578 121h5v4h-5zM583 121h5v4h-5zM598 121h2v4h-2zM549 151h2v4h-2zM551 151h2v4h-2zM313 319h3v4h-3zM316 319h3v4h-3zM319 319h5v4h-5zM324 319h3v4h-3zM354 319h3v4h-3zM435 375h5v4h-5zM476 375h8v4h-8zM498 375h2v4h-2z" fill="#0040ff"/><path d="M595 121h3v4h-3zM345 319h6v4h-6zM474 370h8v5h-8zM497 370h3v5h-3zM426 375h2v4h-2zM456 375h3v4h-3zM462 375h6v4h-6zM491 375h4v4h-4z" fill="#0032ff"/><path d="M650 121h2v4h-2zM656 121h1v4h-1zM620 134h1v4h-1zM208 353h6v4h-6zM214 353h2v4h-2zM224 353h6v4h-6zM230 353h3v4h-3zM233 353h4v4h-4zM21 366h5v4h-5zM26 366h4v4h-4zM58 375h5v4h-5zM63 375h4v4h-4zM157 375h3v4h-3zM160 375h4v4h-4zM50 379h6v4h-6z" fill="#f8f000"/><path d="M652 121h4v4h-4zM170 370h3v5h-3zM173 370h3v5h-3zM79 375h3v4h-3zM167 375h4v4h-4zM171 375h3v4h-3zM28 379h3v4h-3zM42 379h5v4h-5z" fill="#ffc000"/><path d="M573 125h8v4h-8zM569 129h3v5h-3zM577 129h3v5h-3zM504 327h5v4h-5zM515 327h3v4h-3zM522 327h2v4h-2zM524 327h2v4h-2z" fill="#007aff"/><path d="M586 125h5v4h-5zM596 125h2v4h-2zM598 129h2v5h-2zM589 185h4v4h-4zM601 185h3v4h-3zM604 185h3v4h-3zM478 327h5v4h-5zM483 327h2v4h-2zM485 327h6v4h-6zM491 327h2v4h-2zM501 327h3v4h-3zM509 327h6v4h-6zM532 327h3v4h-3z" fill="#0096ff"/><path d="M653 125h1v4h-1zM539 142h8v4h-8zM560 142h2v4h-2zM553 151h1v4h-1zM557 151h2v4h-2zM553 155h3v4h-3zM562 155h4v4h-4zM538 159h3v5h-3zM541 159h3v5h-3zM544 159h8v5h-8zM552 164h5v4h-5zM537 189h2v5h-2zM542 189h2v5h-2zM554 189h3v5h-3zM546 194h2v4h-2zM561 202h2v5h-2zM540 211h3v4h-3zM512 284h2v4h-2zM504 288h1v5h-1zM512 288h2v5h-2zM451 297h6v4h-6zM467 297h3v4h-3zM474 297h4v4h-4zM498 297h2v4h-2zM473 301h3v5h-3zM498 301h2v5h-2zM402 306h1v4h-1zM404 306h1v4h-1zM413 306h5v4h-5zM429 306h2v4h-2zM431 306h3v4h-3zM445 306h3v4h-3zM454 306h2v4h-2zM456 306h8v4h-8zM472 306h4v4h-4zM520 306h6v4h-6zM526 306h2v4h-2zM532 306h5v4h-5zM392 310h6v4h-6zM398 310h8v4h-8zM412 310h8v4h-8zM435 310h3v4h-3zM453 310h3v4h-3zM456 310h8v4h-8zM464 310h2v4h-2zM474 310h5v4h-5zM492 310h3v4h-3zM495 310h3v4h-3zM506 310h3v4h-3zM511 310h4v4h-4zM524 310h4v4h-4zM528 310h2v4h-2zM530 310h2v4h-2zM422 314h3v5h-3zM431 314h5v5h-5zM438 314h3v5h-3zM445 314h3v5h-3zM448 314h6v5h-6zM468 314h2v5h-2zM470 314h4v5h-4zM478 314h8v5h-8zM486 314h8v5h-8zM505 314h4v5h-4zM515 314h2v5h-2zM535 314h2v5h-2zM371 319h8v4h-8zM393 319h2v4h-2zM398 319h4v4h-4zM406 319h3v4h-3zM409 319h5v4h-5zM420 319h3v4h-3zM426 319h3v4h-3zM438 319h4v4h-4zM466 319h8v4h-8zM478 319h2v4h-2zM484 319h3v4h-3zM487 319h8v4h-8zM495 319h3v4h-3zM520 319h3v4h-3zM528 319h3v4h-3zM531 319h6v4h-6zM518 331h2v5h-2zM520 331h4v5h-4zM530 331h3v5h-3zM533 331h2v5h-2zM535 331h2v5h-2zM515 336h3v4h-3zM521 336h8v4h-8zM529 336h8v4h-8zM503 340h5v4h-5zM516 340h8v4h-8zM505 344h8v5h-8zM502 349h3v4h-3zM511 349h3v4h-3zM358 353h6v4h-6zM368 353h3v4h-3zM375 353h6v4h-6zM388 353h2v4h-2zM515 353h6v4h-6zM521 353h4v4h-4zM527 353h4v4h-4zM355 357h6v5h-6zM374 357h5v5h-5zM529 357h3v5h-3zM532 357h2v5h-2zM290 362h5v4h-5zM318 362h3v4h-3zM321 362h4v4h-4zM328 362h8v4h-8zM519 362h6v4h-6zM525 362h5v4h-5zM276 366h8v4h-8zM500 366h8v4h-8zM21 370h2v5h-2zM510 370h6v5h-6zM516 370h3v5h-3zM511 375h3v4h-3zM514 375h2v4h-2zM532 375h5v4h-5zM465 379h8v4h-8zM473 379h3v4h-3zM476 379h4v4h-4zM480 379h2v4h-2zM486 379h6v4h-6zM505 379h2v4h-2zM515 379h2v4h-2zM532 383h5v4h-5zM509 387h4v5h-4zM521 387h5v5h-5zM523 392h3v4h-3zM526 392h2v4h-2zM520 396h8v4h-8zM528 396h2v4h-2zM530 396h5v4h-5zM528 400h3v5h-3zM520 405h1v4h-1zM532 405h3v4h-3z" fill="#0018ff"/><path d="M563 129h3v5h-3zM580 129h3v5h-3zM583 129h4v5h-4zM592 129h6v5h-6zM585 185h4v4h-4zM529 327h3v4h-3z" fill="#0088ff"/><path d="M539 134h5v4h-5zM544 134h4v4h-4zM548 134h8v4h-8zM556 134h4v4h-4zM560 134h2v4h-2zM563 134h4v4h-4zM567 134h3v4h-3zM570 134h3v4h-3zM573 134h6v4h-6zM579 134h5v4h-5zM584 134h4v4h-4zM588 134h2v4h-2zM590 134h2v4h-2zM592 134h8v4h-8zM600 134h2v4h-2zM602 134h3v4h-3zM605 134h5v4h-5zM613 134h1v4h-1zM615 134h1v4h-1zM618 134h1v4h-1z" fill="#ff0000"/><path d="M546 138h5v4h-5z" fill="#00ff1e"/><path d="M571 138h3v4h-3zM644 142h3v4h-3zM647 142h4v4h-4zM609 146h8v5h-8zM613 151h7v4h-7zM603 155h3v4h-3zM614 155h5v4h-5zM621 155h4v4h-4zM593 164h6v4h-6zM604 168h8v4h-8zM370 327h4v4h-4zM48 331h3v5h-3zM74 331h4v5h-4zM126 331h6v5h-6zM276 331h5v5h-5zM374 331h4v5h-4zM282 344h3v5h-3zM293 344h5v5h-5zM383 344h2v5h-2zM136 362h3v4h-3zM163 362h8v4h-8zM176 362h6v4h-6zM125 366h3v4h-3zM144 366h5v4h-5zM190 366h6v4h-6zM379 366h6v4h-6zM340 370h6v5h-6zM367 370h5v5h-5zM354 375h3v4h-3zM369 375h8v4h-8zM265 383h5v4h-5zM291 383h6v4h-6zM297 383h5v4h-5zM302 383h8v4h-8zM306 392h5v4h-5zM327 392h6v4h-6zM191 396h4v4h-4zM200 396h8v4h-8zM222 396h3v4h-3zM262 396h6v4h-6zM271 396h8v4h-8zM26 400h2v5h-2zM54 405h3v4h-3zM122 405h5v4h-5zM159 405h3v4h-3zM170 405h5v4h-5zM224 405h2v4h-2zM287 409h5v4h-5z" fill="#00ffff"/><path d="M597 138h3v4h-3zM69 327h8v4h-8zM77 327h2v4h-2zM83 327h8v4h-8zM106 327h3v4h-3zM109 327h8v4h-8zM135 327h2v4h-2zM137 327h3v4h-3zM395 340h2v4h-2zM65 344h2v5h-2zM67 344h5v5h-5zM82 344h3v5h-3zM85 344h8v5h-8zM93 344h3v5h-3zM99 344h3v5h-3zM146 344h8v5h-8zM154 344h3v5h-3zM157 344h6v5h-6zM166 344h3v5h-3zM169 344h5v5h-5zM212 344h4v5h-4zM230 344h6v5h-6zM118 349h3v4h-3zM145 349h3v4h-3zM158 349h8v4h-8zM171 349h6v4h-6zM190 349h5v4h-5zM365 349h6v4h-6zM294 353h3v4h-3zM254 357h2v5h-2zM256 357h4v5h-4zM269 357h6v5h-6zM281 357h6v5h-6zM287 357h5v5h-5zM292 357h3v5h-3zM372 362h4v4h-4zM310 366h3v4h-3zM313 366h4v4h-4zM333 366h7v4h-7zM260 370h2v5h-2zM162 383h3v4h-3zM165 383h8v4h-8zM176 383h4v4h-4zM193 383h8v4h-8zM201 383h6v4h-6zM207 383h4v4h-4zM211 383h4v4h-4zM221 383h5v4h-5zM124 392h6v4h-6zM149 392h4v4h-4zM193 392h3v4h-3zM215 392h4v4h-4zM219 392h3v4h-3zM224 392h8v4h-8zM243 392h5v4h-5zM74 409h3v4h-3zM77 409h8v4h-8zM94 409h2v4h-2z" fill="#00ff9e"/><path d="M620 138h1v4h-1zM126 370h2v5h-2zM153 370h3v5h-3zM133 375h4v4h-4zM149 375h3v4h-3zM21 379h3v4h-3zM24 379h4v4h-4zM31 379h5v4h-5zM38 379h4v4h-4z" fill="#ff8800"/><path d="M621 138h3v4h-3zM624 138h2v4h-2zM651 138h6v4h-6z" fill="#00ff12"/><path d="M626 138h8v4h-8zM634 138h6v4h-6zM640 138h4v4h-4zM290 370h3v5h-3zM303 370h5v5h-5zM317 370h4v5h-4zM334 370h6v5h-6z" fill="#00ff20"/><path d="M644 138h3v4h-3zM647 138h4v4h-4zM313 370h4v5h-4zM321 370h8v5h-8z" fill="#00ff2e"/><path d="M547 142h3v4h-3zM551 189h3v5h-3zM540 194h6v4h-6zM548 194h6v4h-6zM546 211h5v4h-5zM415 297h3v4h-3zM418 297h4v4h-4zM449 297h2v4h-2zM464 297h3v4h-3zM472 297h2v4h-2zM418 301h2v5h-2zM426 301h4v5h-4zM430 301h8v5h-8zM438 301h8v5h-8zM450 301h2v5h-2zM452 301h3v5h-3zM455 301h3v5h-3zM466 301h3v5h-3zM469 301h4v5h-4zM418 306h4v4h-4zM422 306h5v4h-5zM427 306h2v4h-2zM434 306h5v4h-5zM439 306h6v4h-6zM448 306h3v4h-3zM466 306h4v4h-4zM476 306h6v4h-6zM490 306h4v4h-4zM500 306h6v4h-6zM506 306h2v4h-2zM508 306h6v4h-6zM514 306h3v4h-3zM517 306h3v4h-3zM528 306h2v4h-2zM530 306h2v4h-2zM389 310h3v4h-3zM432 310h3v4h-3zM442 310h5v4h-5zM447 310h6v4h-6zM466 310h8v4h-8zM479 310h4v4h-4zM498 310h8v4h-8zM509 310h2v4h-2zM515 310h5v4h-5zM400 314h2v5h-2zM402 314h8v5h-8zM410 314h8v5h-8zM418 314h4v5h-4zM425 314h6v5h-6zM436 314h2v5h-2zM441 314h4v5h-4zM462 314h6v5h-6zM494 314h3v5h-3zM497 314h5v5h-5zM509 314h3v5h-3zM517 314h5v5h-5zM528 314h4v5h-4zM532 314h3v5h-3zM360 319h3v4h-3zM367 319h4v4h-4zM379 319h6v4h-6zM385 319h8v4h-8zM395 319h3v4h-3zM414 319h6v4h-6zM423 319h3v4h-3zM435 319h3v4h-3zM442 319h3v4h-3zM445 319h5v4h-5zM458 319h5v4h-5zM463 319h3v4h-3zM474 319h4v4h-4zM480 319h4v4h-4zM498 319h8v4h-8zM512 319h8v4h-8zM523 319h5v4h-5zM507 331h3v5h-3zM524 331h4v5h-4zM508 336h4v4h-4zM518 336h3v4h-3zM510 340h6v4h-6zM524 340h5v4h-5zM521 344h4v5h-4zM533 344h4v5h-4zM505 349h6v4h-6zM514 349h5v4h-5zM527 349h8v4h-8zM364 353h4v4h-4zM381 353h3v4h-3zM390 353h6v4h-6zM525 353h2v4h-2zM531 353h2v4h-2zM533 353h4v4h-4zM337 357h4v5h-4zM347 357h2v5h-2zM349 357h3v5h-3zM352 357h3v5h-3zM361 357h8v5h-8zM379 357h8v5h-8zM387 357h3v5h-3zM514 357h3v5h-3zM517 357h2v5h-2zM519 357h8v5h-8zM527 357h2v5h-2zM534 357h3v5h-3zM301 362h3v4h-3zM304 362h6v4h-6zM310 362h8v4h-8zM336 362h2v4h-2zM267 366h6v4h-6zM273 366h3v4h-3zM284 366h4v4h-4zM516 366h3v4h-3zM519 366h8v4h-8zM535 366h2v4h-2zM500 370h8v5h-8zM508 370h2v5h-2zM527 370h5v5h-5zM532 370h5v5h-5zM500 375h8v4h-8zM518 375h8v4h-8zM526 375h6v4h-6zM462 379h3v4h-3zM482 379h4v4h-4zM500 379h5v4h-5zM511 379h4v4h-4zM517 379h8v4h-8zM525 379h3v4h-3zM528 379h9v4h-9zM529 383h3v4h-3zM500 387h6v5h-6zM513 387h8v5h-8zM526 387h8v5h-8zM520 392h3v4h-3zM528 392h9v4h-9zM525 400h3v5h-3zM524 405h8v4h-8zM535 405h2v4h-2z" fill="#001fff"/><path d="M550 142h3v4h-3zM557 189h4v5h-4zM543 211h3v4h-3zM413 301h5v5h-5zM420 301h3v5h-3zM423 301h3v5h-3zM446 301h4v5h-4zM458 301h8v5h-8zM476 301h2v5h-2zM451 306h3v4h-3zM464 306h2v4h-2zM470 306h2v4h-2zM482 306h8v4h-8zM494 306h6v4h-6zM406 310h6v4h-6zM420 310h6v4h-6zM426 310h6v4h-6zM438 310h4v4h-4zM483 310h3v4h-3zM486 310h6v4h-6zM520 310h4v4h-4zM532 310h5v4h-5zM454 314h8v5h-8zM474 314h4v5h-4zM502 314h3v5h-3zM512 314h3v5h-3zM522 314h3v5h-3zM525 314h3v5h-3zM363 319h4v4h-4zM402 319h4v4h-4zM429 319h6v4h-6zM450 319h8v4h-8zM506 319h6v4h-6zM505 331h2v5h-2zM510 331h8v5h-8zM528 331h2v5h-2zM512 336h3v4h-3zM500 340h3v4h-3zM508 340h2v4h-2zM529 340h8v4h-8zM513 344h8v5h-8zM525 344h8v5h-8zM519 349h8v4h-8zM535 349h2v4h-2zM371 353h4v4h-4zM384 353h4v4h-4zM507 353h8v4h-8zM341 357h6v5h-6zM369 357h2v5h-2zM371 357h3v5h-3zM508 357h6v5h-6zM295 362h6v4h-6zM325 362h3v4h-3zM516 362h3v4h-3zM530 362h7v4h-7zM288 366h6v4h-6zM508 366h8v4h-8zM527 366h8v4h-8zM40 370h7v5h-7zM519 370h8v5h-8zM508 375h3v4h-3zM516 375h2v4h-2zM450 379h3v4h-3zM453 379h6v4h-6zM459 379h3v4h-3zM492 379h8v4h-8zM507 379h4v4h-4zM497 387h3v5h-3zM506 387h3v5h-3zM534 387h3v5h-3zM535 396h2v4h-2zM531 400h6v5h-6z" fill="#0026ff"/><path d="M605 146h4v5h-4zM250 340h3v4h-3zM186 353h3v4h-3zM192 353h8v4h-8zM36 366h3v4h-3zM143 370h5v5h-5z" fill="#a8ff00"/><path d="M620 146h4v5h-4zM632 146h2v5h-2zM130 323h4v4h-4zM176 323h6v4h-6zM317 400h4v5h-4zM333 400h4v5h-4z" fill="#0076ff"/><path d="M624 146h8v5h-8zM634 146h3v5h-3zM644 146h5v5h-5zM159 323h6v4h-6zM165 323h6v4h-6z" fill="#005aff"/><path d="M637 146h5v5h-5zM642 146h2v5h-2zM649 146h8v5h-8zM124 323h6v4h-6zM135 323h6v4h-6zM141 323h6v4h-6zM147 323h3v4h-3zM152 323h3v4h-3zM155 323h4v4h-4zM198 323h5v4h-5zM203 323h2v4h-2zM345 396h8v4h-8z" fill="#0068ff"/><path d="M561 159h2v5h-2zM563 159h4v5h-4zM560 164h2v4h-2zM559 168h3v4h-3zM598 176h2v5h-2zM570 189h6v5h-6zM563 194h8v4h-8zM575 194h2v4h-2zM478 331h8v5h-8zM437 336h6v4h-6zM456 336h6v4h-6zM466 336h4v4h-4zM480 336h6v4h-6zM478 340h3v4h-3zM491 340h3v4h-3zM494 340h3v4h-3zM400 353h2v4h-2zM443 362h3v4h-3zM461 362h3v4h-3zM400 379h2v4h-2zM425 379h8v4h-8zM433 379h3v4h-3z" fill="#0042ff"/><path d="M620 159h6v5h-6zM626 159h5v5h-5zM631 159h9v5h-9z" fill="#00b6ff"/><path d="M562 164h4v4h-4zM562 168h3v4h-3zM578 176h2v5h-2zM580 181h3v4h-3zM545 185h6v4h-6zM262 319h3v4h-3zM486 331h4v5h-4zM421 336h2v4h-2zM486 336h4v4h-4zM464 362h3v4h-3zM467 362h5v4h-5zM407 379h5v4h-5z" fill="#0034ff"/><path d="M578 164h3v4h-3zM295 396h3v4h-3zM307 396h3v4h-3zM165 400h6v5h-6zM171 400h4v5h-4zM178 400h5v5h-5z" fill="#00c2ff"/><path d="M568 172h4v4h-4zM351 387h2v5h-2z" fill="#00acff"/><path d="M572 172h3v4h-3zM581 172h5v4h-5z" fill="#009eff"/><path d="M575 172h6v4h-6zM586 172h6v4h-6z" fill="#0090ff"/><path d="M592 172h8v4h-8z" fill="#0082ff"/><path d="M600 172h3v4h-3zM275 362h3v4h-3zM280 362h4v4h-4z" fill="#00aeff"/><path d="M603 172h5v4h-5zM615 172h4v4h-4zM435 327h6v4h-6zM444 327h6v4h-6zM33 413h2v5h-2z" fill="#00bcff"/><path d="M608 172h2v4h-2zM619 172h3v4h-3zM627 172h3v4h-3zM630 172h2v4h-2zM346 400h4v5h-4z" fill="#00a0ff"/><path d="M610 172h5v4h-5zM622 172h5v4h-5zM278 362h2v4h-2zM353 396h7v4h-7zM325 400h8v5h-8zM355 400h5v5h-5z" fill="#0092ff"/><path d="M615 176h5v5h-5zM579 194h3v4h-3zM431 331h3v5h-3zM506 336h2v4h-2zM389 396h5v4h-5z" fill="#008cff"/><path d="M516 280h5v4h-5zM524 280h3v4h-3zM516 284h3v4h-3zM529 284h3v4h-3zM524 288h6v5h-6zM530 288h7v5h-7zM533 293h4v4h-4zM390 323h8v4h-8zM402 323h5v4h-5zM407 323h6v4h-6zM419 323h6v4h-6zM432 323h3v4h-3zM447 323h8v4h-8zM455 323h5v4h-5zM460 323h8v4h-8zM477 323h8v4h-8zM495 323h5v4h-5zM500 323h6v4h-6zM511 323h2v4h-2zM518 323h4v4h-4z" fill="#0028ff"/><path d="M528 280h4v4h-4zM535 280h2v4h-2zM526 284h3v4h-3zM532 284h3v4h-3zM535 284h2v4h-2zM516 288h8v5h-8zM400 323h2v4h-2zM413 323h3v4h-3zM416 323h3v4h-3zM425 323h2v4h-2zM427 323h5v4h-5zM435 323h3v4h-3zM438 323h3v4h-3zM468 323h2v4h-2zM473 323h4v4h-4zM485 323h2v4h-2zM487 323h8v4h-8zM506 323h5v4h-5zM513 323h2v4h-2zM522 323h2v4h-2zM524 323h8v4h-8zM535 323h2v4h-2z" fill="#002fff"/><path d="M532 280h3v4h-3zM519 284h6v4h-6zM398 323h2v4h-2zM441 323h6v4h-6zM470 323h3v4h-3zM515 323h3v4h-3zM532 323h3v4h-3z" fill="#0036ff"/><path d="M341 319h4v4h-4zM357 319h3v4h-3zM494 370h3v5h-3z" fill="#0024ff"/><path d="M171 323h5v4h-5zM182 323h8v4h-8z" fill="#004cff"/><path d="M190 323h8v4h-8zM284 362h6v4h-6zM315 400h2v5h-2zM321 400h4v5h-4zM337 400h4v5h-4zM341 400h5v5h-5zM350 400h5v5h-5z" fill="#0084ff"/><path d="M248 323h8v4h-8zM473 357h3v5h-3zM479 366h8v4h-8z" fill="#0044ff"/><path d="M288 323h4v4h-4zM292 323h2v4h-2zM301 323h2v4h-2zM308 323h3v4h-3zM311 323h8v4h-8zM319 323h5v4h-5zM385 366h2v4h-2zM401 366h6v4h-6zM407 366h6v4h-6zM422 366h2v4h-2zM424 366h3v4h-3zM427 366h6v4h-6zM433 366h5v4h-5zM460 366h8v4h-8zM468 366h4v4h-4z" fill="#0058ff"/><path d="M294 323h4v4h-4zM390 366h6v4h-6zM413 366h4v4h-4zM438 366h2v4h-2zM440 366h5v4h-5zM445 366h3v4h-3zM452 366h8v4h-8zM472 366h5v4h-5z" fill="#004aff"/><path d="M298 323h3v4h-3zM303 323h5v4h-5zM387 366h3v4h-3z" fill="#0074ff"/><path d="M324 323h6v4h-6zM396 366h3v4h-3zM399 366h2v4h-2zM417 366h5v4h-5zM448 366h4v4h-4z" fill="#0066ff"/><path d="M330 323h2v4h-2zM345 323h6v4h-6zM357 323h8v4h-8zM373 323h2v4h-2z" fill="#003aff"/><path d="M332 323h5v4h-5z" fill="#002cff"/><path d="M337 323h3v4h-3zM340 323h5v4h-5zM351 323h3v4h-3zM375 323h8v4h-8z" fill="#0048ff"/><path d="M354 323h3v4h-3z" fill="#0064ff"/><path d="M365 323h3v4h-3zM368 323h5v4h-5zM383 323h3v4h-3zM386 323h4v4h-4z" fill="#0056ff"/><path d="M152 327h8v4h-8zM160 327h6v4h-6zM191 327h5v4h-5zM196 327h3v4h-3zM212 327h2v4h-2zM236 327h4v4h-4zM267 349h8v4h-8zM250 387h3v5h-3zM287 387h3v5h-3z" fill="#00ff92"/><path d="M166 327h2v4h-2zM179 327h3v4h-3zM188 327h3v4h-3zM202 327h6v4h-6zM222 327h5v4h-5zM227 327h6v4h-6zM233 327h3v4h-3zM248 349h4v4h-4zM261 349h6v4h-6zM278 349h5v4h-5zM289 349h2v4h-2zM284 387h3v5h-3z" fill="#00ffa0"/><path d="M168 327h3v4h-3zM182 327h6v4h-6zM199 327h3v4h-3zM214 327h3v4h-3zM240 349h8v4h-8zM252 349h5v4h-5zM257 349h4v4h-4zM275 349h3v4h-3zM253 387h6v5h-6zM259 387h6v5h-6zM268 387h8v5h-8z" fill="#00ffae"/><path d="M171 327h8v4h-8zM208 327h4v4h-4zM217 327h5v4h-5zM276 387h2v5h-2zM278 387h6v5h-6z" fill="#00ff84"/><path d="M421 327h6v4h-6zM427 327h2v4h-2zM429 327h6v4h-6zM441 327h3v4h-3zM450 327h2v4h-2zM35 413h3v5h-3zM38 413h3v5h-3z" fill="#00d8ff"/><path d="M21 331h2v5h-2zM78 331h3v5h-3zM163 331h3v5h-3zM174 331h3v5h-3zM202 331h5v5h-5zM207 331h3v5h-3zM231 331h5v5h-5zM257 331h5v5h-5z" fill="#00f2ff"/><path d="M23 331h3v5h-3zM26 331h3v5h-3zM33 331h4v5h-4zM51 331h3v5h-3zM54 331h8v5h-8zM62 331h4v5h-4zM66 331h3v5h-3zM72 331h2v5h-2zM86 331h5v5h-5zM91 331h4v5h-4zM95 331h3v5h-3zM98 331h8v5h-8zM123 331h3v5h-3zM132 331h2v5h-2zM151 331h2v5h-2zM177 331h5v5h-5zM219 331h8v5h-8zM227 331h4v5h-4zM236 331h6v5h-6zM242 331h3v5h-3zM254 331h3v5h-3zM262 331h6v5h-6zM310 387h4v5h-4zM333 387h3v5h-3zM342 387h4v5h-4zM357 387h3v5h-3z" fill="#00d6ff"/><path d="M29 331h4v5h-4zM37 331h8v5h-8zM45 331h3v5h-3zM69 331h3v5h-3zM81 331h5v5h-5zM106 331h8v5h-8zM114 331h3v5h-3zM117 331h6v5h-6zM134 331h3v5h-3zM137 331h6v5h-6zM143 331h8v5h-8zM157 331h3v5h-3zM166 331h3v5h-3zM169 331h5v5h-5zM182 331h8v5h-8zM190 331h6v5h-6zM196 331h6v5h-6zM210 331h3v5h-3zM213 331h6v5h-6zM245 331h2v5h-2zM247 331h2v5h-2zM249 331h2v5h-2zM251 331h3v5h-3zM268 331h3v5h-3zM271 331h5v5h-5zM281 331h5v5h-5zM286 331h2v5h-2z" fill="#00e4ff"/><path d="M153 331h4v5h-4zM160 331h3v5h-3zM300 387h4v5h-4zM307 387h3v5h-3zM325 387h8v5h-8zM336 387h4v5h-4zM353 387h4v5h-4z" fill="#00c8ff"/><path d="M21 336h3v4h-3zM24 336h3v4h-3zM27 336h4v4h-4zM31 336h5v4h-5zM53 336h3v4h-3zM74 336h5v4h-5zM79 336h3v4h-3zM85 336h3v4h-3zM101 336h3v4h-3zM104 336h3v4h-3zM111 336h2v4h-2zM113 336h5v4h-5zM139 336h5v4h-5zM144 336h5v4h-5zM161 336h3v4h-3zM170 336h3v4h-3zM173 336h3v4h-3zM182 336h6v4h-6zM188 336h3v4h-3zM191 336h3v4h-3zM194 336h6v4h-6zM200 336h6v4h-6zM206 336h4v4h-4zM228 336h4v4h-4zM238 336h6v4h-6zM249 336h2v4h-2z" fill="#00ffc0"/><path d="M36 336h2v4h-2zM56 336h4v4h-4zM235 336h3v4h-3z" fill="#00ffdc"/><path d="M38 336h2v4h-2zM60 336h8v4h-8zM68 336h4v4h-4zM88 336h5v4h-5zM107 336h2v4h-2zM164 336h6v4h-6zM176 336h6v4h-6zM224 336h4v4h-4z" fill="#00ffa4"/><path d="M40 336h4v4h-4zM44 336h3v4h-3zM47 336h6v4h-6zM93 336h8v4h-8zM109 336h2v4h-2zM118 336h8v4h-8zM149 336h6v4h-6zM155 336h6v4h-6zM210 336h4v4h-4zM216 336h2v4h-2zM218 336h6v4h-6zM232 336h3v4h-3zM251 336h3v4h-3zM254 336h6v4h-6z" fill="#00ffb2"/><path d="M72 336h2v4h-2zM82 336h3v4h-3zM126 336h2v4h-2zM128 336h5v4h-5zM133 336h3v4h-3zM136 336h3v4h-3zM214 336h2v4h-2zM244 336h3v4h-3zM247 336h2v4h-2z" fill="#00ffce"/><path d="M21 340h3v4h-3zM62 340h6v4h-6zM81 340h6v4h-6zM87 340h3v4h-3zM98 340h4v4h-4zM102 340h8v4h-8z" fill="#00ff40"/><path d="M24 340h5v4h-5zM29 340h2v4h-2zM52 340h5v4h-5z" fill="#00ff4e"/><path d="M31 340h8v4h-8zM39 340h8v4h-8z" fill="#00ff24"/><path d="M47 340h5v4h-5zM68 340h5v4h-5zM73 340h8v4h-8zM90 340h6v4h-6zM96 340h2v4h-2z" fill="#00ff32"/><path d="M57 340h5v4h-5z" fill="#00ff5c"/><path d="M110 340h4v4h-4zM117 340h3v4h-3zM136 340h3v4h-3zM139 340h2v4h-2zM141 340h5v4h-5zM146 340h3v4h-3zM149 340h5v4h-5zM154 340h5v4h-5zM159 340h3v4h-3zM162 340h8v4h-8zM170 340h6v4h-6zM176 340h6v4h-6zM182 340h3v4h-3zM185 340h3v4h-3zM188 340h4v4h-4zM192 340h6v4h-6zM200 340h4v4h-4zM211 340h8v4h-8zM219 340h4v4h-4zM223 340h8v4h-8zM231 340h5v4h-5zM59 379h8v4h-8zM67 379h2v4h-2zM69 379h8v4h-8zM77 379h5v4h-5zM82 379h6v4h-6zM93 379h5v4h-5zM98 379h6v4h-6zM104 379h4v4h-4zM108 379h2v4h-2zM118 379h6v4h-6zM124 379h2v4h-2zM134 379h3v4h-3zM137 379h8v4h-8zM154 379h5v4h-5zM159 379h4v4h-4zM163 379h3v4h-3zM166 379h8v4h-8zM174 379h6v4h-6zM183 379h3v4h-3zM189 379h5v4h-5zM194 379h3v4h-3z" fill="#18ff00"/><path d="M114 340h3v4h-3zM120 340h8v4h-8zM128 340h8v4h-8zM88 379h3v4h-3zM126 379h8v4h-8z" fill="#18ff1c"/><path d="M198 340h2v4h-2zM204 340h5v4h-5zM209 340h2v4h-2zM56 379h3v4h-3zM91 379h2v4h-2zM110 379h8v4h-8zM145 379h3v4h-3zM148 379h6v4h-6zM180 379h3v4h-3zM186 379h3v4h-3zM197 379h3v4h-3z" fill="#18ff0e"/><path d="M236 340h5v4h-5zM182 353h4v4h-4zM206 353h2v4h-2zM219 353h5v4h-5zM30 366h6v4h-6zM148 370h2v5h-2z" fill="#9aff00"/><path d="M241 340h4v4h-4zM180 353h2v4h-2zM200 353h3v4h-3zM203 353h3v4h-3zM216 353h3v4h-3zM39 366h2v4h-2z" fill="#b6ff00"/><path d="M245 340h5v4h-5zM189 353h3v4h-3z" fill="#c4ff00"/><path d="M253 340h6v4h-6zM269 340h3v4h-3zM272 340h3v4h-3zM293 340h5v4h-5zM79 353h3v4h-3zM99 353h5v4h-5zM110 353h4v4h-4zM123 353h3v4h-3zM134 353h5v4h-5zM143 353h3v4h-3zM146 353h2v4h-2zM162 353h8v4h-8zM26 357h2v5h-2zM28 357h3v5h-3zM31 357h5v5h-5zM69 362h3v4h-3z" fill="#76ff00"/><path d="M259 340h8v4h-8zM290 340h3v4h-3zM35 353h5v4h-5zM64 353h8v4h-8zM116 353h4v4h-4zM150 353h4v4h-4zM36 357h3v5h-3zM76 357h3v5h-3zM122 357h3v5h-3zM58 362h3v4h-3z" fill="#4cff00"/><path d="M267 340h2v4h-2zM284 340h3v4h-3zM21 353h8v4h-8zM40 353h5v4h-5zM45 353h5v4h-5zM53 353h6v4h-6zM59 353h5v4h-5zM77 353h2v4h-2zM90 353h6v4h-6zM96 353h3v4h-3zM104 353h6v4h-6zM114 353h2v4h-2zM170 353h8v4h-8zM45 357h7v5h-7zM72 362h3v4h-3zM21 383h2v4h-2z" fill="#68ff00"/><path d="M275 340h6v4h-6zM287 340h3v4h-3zM298 340h2v4h-2zM29 353h6v4h-6zM50 353h3v4h-3zM72 353h5v4h-5zM120 353h3v4h-3zM126 353h3v4h-3zM129 353h5v4h-5zM139 353h4v4h-4zM148 353h2v4h-2zM154 353h8v4h-8zM178 353h2v4h-2zM21 357h5v5h-5zM42 357h3v5h-3zM61 362h8v4h-8z" fill="#5aff00"/><path d="M281 340h3v4h-3zM82 353h8v4h-8zM39 357h3v5h-3z" fill="#84ff00"/><path d="M300 340h8v4h-8zM308 340h5v4h-5zM24 387h6v5h-6zM33 387h6v5h-6zM53 387h3v5h-3z" fill="#42ff00"/><path d="M313 340h4v4h-4zM328 340h2v4h-2zM330 340h6v4h-6zM21 387h3v5h-3zM39 387h6v5h-6zM45 387h4v5h-4zM49 387h2v5h-2z" fill="#50ff00"/><path d="M317 340h3v4h-3zM30 387h3v5h-3zM51 387h2v5h-2zM58 387h2v5h-2z" fill="#5eff00"/><path d="M320 340h8v4h-8zM336 340h4v4h-4z" fill="#34ff00"/><path d="M340 340h5v4h-5zM355 340h3v4h-3zM388 340h7v4h-7zM320 353h3v4h-3zM341 353h3v4h-3zM354 353h4v4h-4z" fill="#10ff10"/><path d="M345 340h8v4h-8zM377 340h3v4h-3zM300 353h3v4h-3z" fill="#10ff00"/><path d="M353 340h2v4h-2zM361 340h8v4h-8zM380 340h8v4h-8zM402 340h4v4h-4zM406 340h6v4h-6zM306 353h5v4h-5zM311 353h3v4h-3zM317 353h3v4h-3zM331 353h5v4h-5zM336 353h3v4h-3zM350 353h4v4h-4z" fill="#10ff1e"/><path d="M358 340h3v4h-3zM369 340h8v4h-8zM412 340h2v4h-2zM323 353h2v4h-2zM344 353h6v4h-6z" fill="#10ff02"/><path d="M21 349h3v4h-3zM24 349h8v4h-8zM34 349h8v4h-8z" fill="#00ffbe"/><path d="M32 349h2v4h-2zM42 349h5v4h-5zM47 349h6v4h-6zM76 349h2v4h-2zM97 349h2v4h-2z" fill="#00ffa2"/><path d="M53 349h8v4h-8zM61 349h2v4h-2zM65 349h6v4h-6zM71 349h5v4h-5zM78 349h4v4h-4zM88 349h5v4h-5zM99 349h5v4h-5z" fill="#00ffb0"/><path d="M63 349h2v4h-2zM82 349h3v4h-3zM93 349h4v4h-4z" fill="#00ff94"/><path d="M85 349h3v4h-3zM104 349h6v4h-6z" fill="#00ffcc"/><path d="M237 349h3v4h-3zM283 349h4v4h-4zM287 349h2v4h-2zM291 349h4v4h-4zM265 387h3v5h-3z" fill="#00ffbc"/><path d="M303 353h3v4h-3zM314 353h3v4h-3zM325 353h6v4h-6zM339 353h2v4h-2z" fill="#10ff2c"/><path d="M52 357h8v5h-8zM113 357h5v5h-5z" fill="#22ff00"/><path d="M60 357h6v5h-6zM91 357h6v5h-6z" fill="#3eff00"/><path d="M66 357h8v5h-8zM74 357h2v5h-2zM79 357h3v5h-3zM82 357h4v5h-4zM97 357h8v5h-8zM108 357h5v5h-5zM118 357h4v5h-4z" fill="#30ff00"/><path d="M86 357h2v5h-2zM88 357h3v5h-3zM105 357h3v5h-3z" fill="#14ff00"/><path d="M125 357h3v5h-3zM128 357h2v5h-2zM133 357h3v5h-3zM166 357h2v5h-2zM176 357h2v5h-2zM182 357h6v5h-6z" fill="#6aff00"/><path d="M130 357h3v5h-3zM151 357h8v5h-8zM159 357h3v5h-3zM168 357h8v5h-8zM188 357h7v5h-7z" fill="#78ff00"/><path d="M136 357h8v5h-8zM147 357h4v5h-4zM178 357h4v5h-4z" fill="#94ff00"/><path d="M144 357h3v5h-3zM162 357h4v5h-4z" fill="#5cff00"/><path d="M195 357h2v5h-2zM204 357h5v5h-5zM209 357h2v5h-2zM222 357h3v5h-3zM21 362h4v4h-4zM32 362h8v4h-8zM40 362h4v4h-4zM44 362h3v4h-3zM50 362h2v4h-2zM75 362h5v4h-5zM88 362h3v4h-3zM94 362h4v4h-4zM98 362h8v4h-8zM106 362h6v4h-6zM117 362h3v4h-3zM120 362h3v4h-3zM41 366h8v4h-8zM49 366h5v4h-5zM54 366h4v4h-4zM179 370h3v5h-3zM182 370h3v5h-3zM188 370h3v5h-3zM191 370h3v5h-3zM197 370h6v5h-6zM211 370h3v5h-3zM214 370h6v5h-6zM224 370h5v5h-5zM229 370h3v5h-3zM234 370h3v5h-3zM237 370h3v5h-3zM21 375h3v4h-3zM32 375h5v4h-5zM40 375h4v4h-4zM52 375h3v4h-3zM55 375h3v4h-3zM179 375h3v4h-3zM187 375h3v4h-3zM198 375h4v4h-4zM202 375h6v4h-6zM208 375h3v4h-3zM211 375h2v4h-2zM277 375h8v4h-8zM285 375h2v4h-2zM32 383h3v4h-3zM44 383h3v4h-3zM47 383h4v4h-4zM51 383h6v4h-6zM57 383h8v4h-8zM65 383h3v4h-3zM68 383h4v4h-4zM72 383h3v4h-3zM75 383h6v4h-6zM87 383h6v4h-6zM93 383h3v4h-3zM96 383h8v4h-8zM104 383h3v4h-3zM113 383h7v4h-7zM60 387h2v5h-2zM62 387h5v5h-5zM67 387h4v5h-4zM74 387h3v5h-3zM77 387h6v5h-6zM83 387h3v5h-3zM89 387h8v5h-8zM97 387h3v5h-3zM100 387h4v5h-4zM104 387h4v5h-4zM108 387h3v5h-3zM114 387h6v5h-6z" fill="#20ff00"/><path d="M197 357h4v5h-4zM216 357h3v5h-3zM30 362h2v4h-2zM55 362h3v4h-3zM91 362h3v4h-3zM185 370h3v5h-3zM194 370h3v5h-3zM220 370h4v5h-4zM44 375h8v4h-8zM174 375h5v4h-5zM190 375h8v4h-8zM35 383h4v4h-4zM40 383h4v4h-4zM86 387h3v5h-3zM111 387h3v5h-3z" fill="#20ff1c"/><path d="M201 357h3v5h-3zM211 357h5v5h-5zM219 357h3v5h-3zM25 362h5v4h-5zM47 362h3v4h-3zM52 362h3v4h-3zM80 362h8v4h-8zM112 362h5v4h-5zM123 362h2v4h-2zM176 370h3v5h-3zM203 370h8v5h-8zM232 370h2v5h-2zM182 375h5v4h-5zM213 375h2v4h-2zM287 375h7v4h-7zM81 383h3v4h-3zM84 383h3v4h-3zM107 383h6v4h-6zM71 387h3v5h-3z" fill="#20ff0e"/><path d="M248 357h2v5h-2zM240 370h3v5h-3zM243 370h3v5h-3zM246 370h3v5h-3zM131 375h2v4h-2zM229 375h3v4h-3zM232 375h3v4h-3zM120 383h3v4h-3z" fill="#00ff2c"/><path d="M76 370h8v5h-8zM84 370h3v5h-3zM87 370h3v5h-3zM90 370h3v5h-3zM93 370h5v5h-5zM111 370h5v5h-5z" fill="#00ff60"/><path d="M98 370h5v5h-5z" fill="#00ff52"/><path d="M103 370h8v5h-8z" fill="#00ff6e"/><path d="M123 370h3v5h-3zM128 370h4v5h-4zM132 370h2v5h-2zM156 370h4v5h-4zM160 370h2v5h-2zM238 375h2v4h-2zM131 383h4v4h-4zM139 383h8v4h-8zM150 387h8v5h-8zM169 387h3v5h-3zM190 387h3v5h-3zM242 387h3v5h-3zM245 387h2v5h-2z" fill="#00ff64"/><path d="M293 370h5v5h-5zM298 370h5v5h-5zM329 370h5v5h-5z" fill="#00ff3c"/><path d="M308 370h5v5h-5z" fill="#00ff04"/><path d="M67 375h3v4h-3z" fill="#ffce00"/><path d="M70 375h6v4h-6z" fill="#ffb200"/><path d="M76 375h3v4h-3zM93 375h2v4h-2zM36 379h2v4h-2zM47 379h3v4h-3zM29 383h3v4h-3z" fill="#ffa400"/><path d="M82 375h3v4h-3zM85 375h8v4h-8z" fill="#ff7a00"/><path d="M95 375h3v4h-3z" fill="#ff5200"/><path d="M98 375h6v4h-6zM107 375h8v4h-8z" fill="#ff3600"/><path d="M104 375h3v4h-3zM115 375h4v4h-4z" fill="#ff6000"/><path d="M119 375h7v4h-7zM23 383h3v4h-3zM39 383h1v4h-1z" fill="#ff4400"/><path d="M137 375h2v4h-2zM139 375h6v4h-6z" fill="#ff2800"/><path d="M26 383h3v4h-3z" fill="#ff9600"/><path d="M56 387h2v5h-2z" fill="#6cff00"/><path d="M120 387h6v5h-6zM227 387h4v5h-4zM235 387h3v5h-3z" fill="#00ff72"/><path d="M126 387h6v5h-6zM132 387h4v5h-4zM158 387h5v5h-5zM163 387h6v5h-6zM175 387h3v5h-3zM200 387h4v5h-4zM204 387h6v5h-6zM231 387h4v5h-4z" fill="#00ff80"/><path d="M136 387h8v5h-8zM144 387h6v5h-6zM178 387h6v5h-6zM184 387h3v5h-3zM193 387h5v5h-5zM198 387h2v5h-2zM238 387h4v5h-4z" fill="#00ff8e"/><path d="M172 387h3v5h-3zM187 387h3v5h-3zM210 387h4v5h-4zM214 387h5v5h-5zM219 387h8v5h-8zM247 387h3v5h-3z" fill="#00ff9c"/><path d="M304 387h3v5h-3zM314 387h3v5h-3zM317 387h8v5h-8zM340 387h2v5h-2zM346 387h2v5h-2zM348 387h3v5h-3zM360 387h2v5h-2z" fill="#00baff"/><path d="M25 392h2v4h-2z" fill="#00ff6c"/><path d="M200 400h8v5h-8zM226 400h8v5h-8zM280 400h5v5h-5z" fill="#00a2ff"/><path d="M216 400h6v5h-6zM222 400h4v5h-4zM242 400h6v5h-6zM252 400h3v5h-3zM264 400h5v5h-5z" fill="#00beff"/><path d="M234 400h8v5h-8zM248 400h2v5h-2zM250 400h2v5h-2zM255 400h3v5h-3zM258 400h6v5h-6zM269 400h3v5h-3z" fill="#00b0ff"/><path d="M274 400h6v5h-6z" fill="#00ccff"/><path d="M21 413h6v5h-6zM27 413h6v5h-6z" fill="#00e6ff"/><path d="M41 413h6v5h-6z" fill="#00caff"/><path d="M47 413h5v5h-5z" fill="#00f4ff"/><path d="M425 340h1v4h-1zM426 340h1v4h-1zM428 340h1v4h-1zM432 340h1v4h-1zM434 340h2v4h-2zM436 340h1v4h-1zM438 340h1v4h-1zM440 340h1v4h-1zM447 340h1v4h-1zM451 340h1v4h-1zM454 340h1v4h-1zM455 340h1v4h-1zM456 340h1v4h-1zM459 340h2v4h-2zM465 340h1v4h-1zM468 340h1v4h-1zM470 340h1v4h-1zM474 340h2v4h-2zM474 340h1v4h-1zM478 340h1v4h-1zM479 340h2v4h-2zM402 344h2v5h-2zM409 344h1v5h-1zM410 344h2v5h-2zM412 344h1v5h-1zM413 344h1v5h-1zM414 344h1v5h-1zM447 344h1v5h-1zM461 344h1v5h-1zM469 344h1v5h-1zM472 344h1v5h-1zM480 344h1v5h-1zM481 344h1v5h-1zM483 344h1v5h-1zM485 344h2v5h-2zM487 344h1v5h-1zM488 344h2v5h-2zM494 344h1v5h-1zM495 344h1v5h-1zM499 344h1v5h-1zM500 344h2v5h-2zM502 344h1v5h-1zM503 344h1v5h-1zM513 344h1v5h-1zM405 349h1v4h-1zM406 349h1v4h-1zM407 349h1v4h-1zM514 349h2v4h-2zM520 349h2v4h-2zM361 353h2v4h-2zM363 353h1v4h-1zM365 353h2v4h-2zM368 353h1v4h-1zM369 353h1v4h-1zM371 353h1v4h-1zM373 353h1v4h-1zM376 353h2v4h-2zM379 353h1v4h-1zM380 353h1v4h-1zM383 353h2v4h-2zM386 353h2v4h-2zM392 353h2v4h-2zM524 353h1v4h-1zM526 353h1v4h-1zM387 353h2v4h-2zM389 353h1v4h-1zM390 353h2v4h-2zM393 353h1v4h-1zM394 353h1v4h-1zM395 353h1v4h-1zM346 357h2v5h-2zM355 357h1v5h-1zM367 357h1v5h-1zM385 357h2v5h-2zM125 362h2v4h-2zM132 362h1v4h-1zM133 362h2v4h-2zM141 362h1v4h-1zM142 362h1v4h-1zM146 362h2v4h-2zM167 362h1v4h-1zM169 362h1v4h-1zM171 362h1v4h-1zM177 362h1v4h-1zM191 362h1v4h-1zM200 362h1v4h-1zM201 362h1v4h-1zM202 362h2v4h-2zM205 362h1v4h-1zM212 362h1v4h-1zM213 362h1v4h-1zM216 362h1v4h-1zM233 362h1v4h-1zM242 362h2v4h-2zM250 362h1v4h-1zM251 362h1v4h-1zM253 362h1v4h-1zM254 362h2v4h-2zM256 362h1v4h-1zM258 362h2v4h-2zM290 362h1v4h-1zM291 362h1v4h-1zM292 362h1v4h-1zM293 362h1v4h-1zM295 362h1v4h-1zM296 362h1v4h-1zM298 362h2v4h-2zM301 362h2v4h-2zM303 362h2v4h-2zM306 362h1v4h-1zM309 362h2v4h-2zM313 362h1v4h-1zM314 362h1v4h-1zM317 362h1v4h-1zM320 362h2v4h-2zM323 362h2v4h-2zM63 366h1v4h-1zM78 366h2v4h-2zM82 366h2v4h-2zM122 366h2v4h-2zM125 366h1v4h-1zM126 366h2v4h-2zM128 366h2v4h-2zM130 366h1v4h-1zM134 366h1v4h-1zM136 366h2v4h-2zM139 366h1v4h-1zM143 366h1v4h-1zM144 366h2v4h-2zM146 366h1v4h-1zM147 366h1v4h-1zM148 366h2v4h-2zM150 366h1v4h-1zM154 366h2v4h-2zM157 366h2v4h-2zM162 366h1v4h-1zM163 366h1v4h-1zM165 366h2v4h-2zM167 366h2v4h-2zM174 366h2v4h-2zM176 366h1v4h-1zM179 366h2v4h-2zM182 366h1v4h-1zM186 366h1v4h-1zM189 366h2v4h-2zM194 366h1v4h-1zM196 366h1v4h-1zM197 366h1v4h-1zM198 366h1v4h-1zM200 366h2v4h-2zM256 366h1v4h-1zM270 366h2v4h-2zM273 366h2v4h-2zM276 366h1v4h-1zM277 366h2v4h-2zM282 366h1v4h-1zM283 366h1v4h-1zM287 366h2v4h-2zM289 366h1v4h-1zM291 366h1v4h-1zM293 366h1v4h-1z" fill="#ffffff"/><path d="M131 366h1v4h-1zM133 366h1v4h-1zM135 366h1v4h-1zM141 366h1v4h-1zM160 366h1v4h-1zM161 366h1v4h-1zM164 366h1v4h-1zM169 366h1v4h-1zM173 366h1v4h-1zM177 366h1v4h-1zM178 366h1v4h-1zM181 366h1v4h-1zM184 366h1v4h-1zM187 366h1v4h-1z" fill="#0018ff"/><rect x="449" y="332" width="1" height="8" fill="#ffffff"/><rect x="450" y="340" width="1" height="4" fill="#ffffff"/><rect x="404" y="349" width="1" height="8" fill="#ffffff"/><rect x="183" y="318" width="1" height="5" fill="#0050ff"/><rect x="449" y="289" width="1" height="8" fill="#0018ff"/><rect x="370" y="310" width="1" height="4" fill="#0018ff"/><rect x="374" y="310" width="1" height="4" fill="#0018ff"/><rect x="533" y="276" width="1" height="4" fill="#0050ff"/><rect x="291" y="409" width="1" height="4" fill="#00ecff"/><rect x="388" y="308" width="1" height="2" fill="#0018ff"/><rect x="143" y="405" width="1" height="2" fill="#00ecff"/><rect x="537" y="190" width="1" height="172" fill="#fff"/><rect x="537" y="196" width="3" height="20" fill="#fff"/><rect x="537" y="216" width="2" height="36" fill="#fff"/><rect x="535" y="362" width="3" height="43" fill="#fff"/><rect x="535" y="405" width="1" height="34" fill="#fff"/><rect x="536" y="405" width="2" height="69" fill="#0018ff"/><rect x="536" y="443" width="2" height="5" fill="#0070ff"/><rect x="536" y="461" width="2" height="6" fill="#00ffb0"/><rect x="536" y="467" width="1" height="3" fill="#00ffb0"/><rect x="538" y="254" width="1" height="4" fill="#00ecff"/><rect x="538" y="258" width="1" height="4" fill="#0050ff"/><rect x="538" y="263" width="1" height="4" fill="#00ecff"/><rect x="538" y="267" width="1" height="4" fill="#0050ff"/><rect x="538" y="276" width="1" height="4" fill="#0050ff"/><rect x="538" y="284" width="1" height="5" fill="#0050ff"/><rect x="538" y="293" width="1" height="4" fill="#00ecff"/><rect x="538" y="301" width="1" height="5" fill="#00ecff"/><rect x="538" y="306" width="1" height="4" fill="#0050ff"/><rect x="558" y="149" width="1" height="7" fill="#fff"/><rect x="559" y="149" width="1" height="14" fill="#fff"/><rect x="560" y="158" width="1" height="5" fill="#fff"/><rect x="561" y="158" width="1" height="17" fill="#fff"/><rect x="564" y="162" width="1" height="7" fill="#fff"/><rect x="565" y="160" width="1" height="2" fill="#fff"/><rect x="566" y="160" width="1" height="21" fill="#fff"/><rect x="567" y="177" width="1" height="4" fill="#fff"/><rect x="568" y="158" width="1" height="20" fill="#fff"/><rect x="569" y="158" width="1" height="2" fill="#fff"/><rect x="570" y="160" width="1" height="2" fill="#fff"/><rect x="571" y="156" width="1" height="5" fill="#fff"/><rect x="572" y="156" width="1" height="6" fill="#fff"/><rect x="573" y="158" width="1" height="4" fill="#fff"/><rect x="574" y="158" width="1" height="2" fill="#fff"/><rect x="575" y="152" width="1" height="7" fill="#fff"/><rect x="576" y="150" width="1" height="2" fill="#fff"/><rect x="577" y="150" width="1" height="14" fill="#fff"/><rect x="578" y="160" width="1" height="4" fill="#fff"/><rect x="579" y="159" width="1" height="2" fill="#fff"/><rect x="580" y="159" width="1" height="2" fill="#fff"/><rect x="581" y="159" width="1" height="2" fill="#fff"/><rect x="582" y="148" width="1" height="12" fill="#fff"/><rect x="583" y="148" width="1" height="2" fill="#fff"/><rect x="584" y="146" width="1" height="2" fill="#fff"/><rect x="585" y="146" width="1" height="9" fill="#fff"/><rect x="586" y="152" width="1" height="3" fill="#fff"/><rect x="587" y="152" width="1" height="3" fill="#fff"/><rect x="588" y="149" width="1" height="6" fill="#fff"/><rect x="589" y="149" width="1" height="9" fill="#fff"/><rect x="590" y="157" width="1" height="2" fill="#fff"/><rect x="591" y="157" width="1" height="10" fill="#fff"/><rect x="592" y="159" width="1" height="8" fill="#fff"/><rect x="593" y="159" width="1" height="2" fill="#fff"/><rect x="594" y="161" width="1" height="2" fill="#fff"/><rect x="595" y="160" width="1" height="2" fill="#fff"/><rect x="596" y="160" width="1" height="4" fill="#fff"/><rect x="597" y="153" width="1" height="12" fill="#fff"/><rect x="598" y="153" width="1" height="11" fill="#fff"/><rect x="599" y="162" width="1" height="3" fill="#fff"/><rect x="600" y="162" width="1" height="2" fill="#fff"/><rect x="601" y="164" width="1" height="2" fill="#fff"/><rect x="602" y="156" width="1" height="8" fill="#fff"/><rect x="603" y="155" width="1" height="2" fill="#fff"/><rect x="604" y="142" width="1" height="13" fill="#fff"/><rect x="562" y="150" width="1" height="50" fill="#fff"/><path d="M21 591h1v-1h2v1h2v1h2v-1h1v-1h2v1h3v1h1v-1h3v-1h1v-1h1v17h1v4h1v-12h2v-1h1v-1h1v2h1v-1h1v-1h1v2h1v-1h1v18h1v-25h1v1h1v1h1v-1h3v1h3v-2h1v1h2v-1h1v1h2v-1h2v1h2v-1h1v-1h2v1h1v-2h1v1h3v-1h1v1h1v1h5v1h1v-1h1v-1h1v-1h1v2h3v-1h1v1h1v-2h2v1h1v1h1v-1h1v1h3v1h1v-1h1v-1h1v-1h1v1h1v-1h1v1h1v-1h1v1h2v1h1v-1h4v20h1v-11h1v-1h1v-1h3v20h1v-15h1v-1h2v12h1v-11h1v-1h1v14h2v-14h1v12h1v-13h1v28h2v-25h1v-1h1v12h1v-13h1v2h1v-2h2v1h1v1h2v-1h1v1h1v23h1v-1h1v-27h2v1h1v1h1v-1h1v1h1v-1h2v10h1v-10h1v-1h1v2h1v-1h1v1h1v-1h1v-1h1v1h3v1h1v8h1v-9h1v1h1v-1h1v2h1v-1h3v-1h1v1h1v1h2v-1h1v-1h2v1h1v1h2v11h1v-10h1v-1h1v2h1v-1h10v1h1v1h1v2h1v11h1v-10h1v-2h1v-2h1v1h1v8h1v-9h1v1h3v-1h2v-1h1v1h1v-1h1v-1h1v-1h2v19h1v1h1v-15h2v9h1v-7h1v-1h1v-1h1v1h1v20h2v-18h2v1h1v1h1v1h1v-1h3v-1h1v-1h1v2h5v-1h1v1h1v13h1v1h1v-13h1v-1h4v-1h1v2h1v-1h2v1h1v1h1v9h1v-9h1v1h1v1h1v-1h1v1h1v-1h3v9h1v-10h1v-1h1v1h1v17h1v-13h1v1h2v18h1v-19h1v9h1v-9h1v1h1v17h2v-14h1v14h1v-1h1v-12h2v12h1v-11h1v1h1v10h1v-9h2v-1h1v11h1v-11h2v-6h3v-1h1v1h2v1h5v-1h1v-1h2v2h1v-1h1v1h2v13h1v1h1v-11h1v-1h1v2h2v-1h2v1h1v-1h1v1h2v-1h1v1h1v-1h1v-1h1v1h1v7h1v-6h1v1h1v-1h1v1h1v1h3v-1h1v-1h1v1h1v1h1v-1h1v1h3v-1h1v-1h1v11h1v3h1v-6h1v-1h1v1h4v-1h3v-1h1v2h1v-1h1v3h1v-4h2v4h2v1h2v-1h1v1h1v-1h2v-1h1v1h1v-1h4v12h1v-6h3v1h1v-1h1v1h2v5h1v-4h2v-1h1v1h1v-1h1v10h1v-8h2v6h1v-6h5v-1h1v11h1v2h1v2h1v-5h1v1h1v5h1v-2h1v-2h1v-2h1v4h1v-3h1v3h2v-1h1v-1h1v4h2v-2h1v-2h1v4h1v-4h1v1h1v-1h1v4h1v-4h1v3h2v1h2v1h3v-5h1v5h1v-1h1v2h1v2h1v1h1v-2h1v1h1v-1h1v1h1v-4h1v-1h1v1h1v2h1v-2h1v-1h1v1h1v-2h1v2h1v-2h1v2h2v-1h4v1h1v1h1v-1h1v2h1v-2h4v1h1v-1h1v1h1v-1h1v1h1v1h2v-1h6v1h2v-1h1v2h2v1h1v2h44v-1h1v-1h3v-10h1v10h5v-2h6v-1h7v-7h1v7h2v-3h1v-4h2v-5h1v1h2v2h1v2h1v-2h1v-6h1v6h1v2h1v-4h2v-2h1v-1h1v-1h1v4h1v-1h1v-1h1v-4h1v4h1v1h1v-1h1v-5h1v-4h1v3h1v3h1v-4h1v-2h1v2h1v2h1v-40h1v41h1v1h1v-1h1v2h1v-1h2v2h1v-5h2v3h1v-29h1v31h1v-1h1v2h1v2h1v-7h1v-38h1v2h1v38h1v1h1v-4h1v2h1v1h1v1h1v-6h2v7h1v-2h1v-6h1v7h1v-4h1v5h1v-6h1v-2h1v-1h2v-5h1v7h2v-4h1v-4h1v9h1v-4h1v2h1v-4h1v1h1v-3h1v-19h1v4h1v13h1v-2h1v-12h1v10h1v-9h1v7h1v-7h1V692h-1v-3h-1v1h-1v1h-1v-5h-1v-1h-1v2h-1v1h-1v5h-1v-15h-1v-1h-1v1h-1v-2h-1v3h-2v2h-1v-1h-2v2h-1v-4h-1v4h-1v-1h-2v-3h-1v5h-1v-3h-1v-1h-1v-1h-1v2h-1v2h-1v-4h-1v3h-1v4h-1v-4h-1v2h-1v2h-1v-1h-1v3h-1v-3h-1v4h-1v-5h-1v-2h-1v-1h-1v2h-1v-2h-1v6h-1v-6h-1v-4h-1v4h-2v-1h-1v-2h-1v4h-1v-2h-1v-2h-1v2h-1v5h-1v-3h-1v-4h-1v2h-1v6h-1v-2h-1v2h-1v-6h-1v4h-1v-2h-1v-9h-1v2h-1v-1h-2v2h-1v-4h-1v2h-1v-2h-1v-1h-2v-2h-1v1h-2v3h-1v-1h-2v-2h-1v-1h-1v2h-1v-2h-1v-2h-1v-1h-2v-1h-8v-1h-8v-2h-5v1h-1v-1h-4v-1h-44v2h-1v2h-1v1h-1v-1h-1v1h-1v1h-2v-2h-1v2h-1v1h-2v-1h-1v2h-2v1h-1v-3h-1v2h-1v-3h-1v2h-1v-1h-1v-1h-1v2h-1v-1h-1v-2h-1v2h-1v2h-1v-1h-2v1h-1v-2h-1v1h-1v-3h-1v3h-2v2h-1v-2h-2v2h-2v-4h-1v3h-2v-3h-3v-1h-2v-1h-2v3h-2v1h-1v1h-1v2h-1v-2h-2v-1h-1v2h-1v1h-1v-2h-1v9h-1v-2h-1v3h-2v-6h-1v1h-1v3h-1v3h-1v-6h-1v1h-2v5h-1v-5h-1v5h-1v-2h-2v-2h-1v-1h-1v3h-1v-4h-1v-2h-1v1h-1v-2h-1v1h-1v1h-1v8h-1v1h-1v-1h-3v-1h-1v-3h-1v4h-1v-1h-1v-7h-1v9h-5v-3h-1v3h-2v1h-1v-1h-2v1h-2v-6h-1v7h-3v1h-2v1h-2v1h-3v1h-1v1h-2v-1h-1v4h-1v-1h-1v-2h-1v3h-3v1h-1v-1h-6v1h-1v-1h-1v-6h-2v7h-1v-1h-4v1h-1v-1h-3v1h-3v2h-1v-1h-1v1h-1v-1h-2v-4h-1v4h-2v1h-2v1h-1v-1h-4v-1h-1v1h-2v1h-1v1h-2v-11h-2v7h-2v1h-1v1h-1v-1h-1v1h-1v-1h-3v1h-1v-1h-1v1h-1v1h-1v1h-1v1h-2v1h-1v-1h-1v1h-1v1h-1v-8h-1v8h-1v2h-1v-1h-1v-10h-1v9h-1v1h-1v-8h-1v7h-1v1h-1v-22h-2v12h-1v-9h-1v1h-1v14h-1v-1h-1v-9h-1v10h-1v-14h-1v14h-1v-2h-1v1h-1v-10h-1v11h-2v2h-1v-10h-1v9h-1v1h-2v2h-1v-1h-4v-6h-1v9h-1v1h-1v2h-1v1h-2v-1h-3v1h-1v-2h-1v-1h-1v-9h-1v1h-1v8h-2v-1h-1v1h-1v1h-3v-2h-1v1h-1v-2h-2v1h-1v-1h-1v1h-1v2h-1v-1h-1v-1h-1v-10h-1v1h-1v15h-1v-2h-1v1h-2v-3h-1v4h-1v3h-1v-18h-2v19h-1v-2h-1v1h-3v-2h-1v1h-3v1h-2v-1h-1v-6h-1v5h-2v2h-1v1h-1v-8h-1v9h-1v1h-2v1h-1v-2h-2v1h-2v-1h-1v-1h-1v2h-2v1h-2v-1h-1v-2h-1v-1h-1v5h-1v1h-1v-1h-1v-1h-1v2h-3v-2h-1v2h-1v-2h-2v1h-1v3h-1v-1h-1v1h-1v2h-1v-1h-1v-5h-1v5h-1v-1h-2v-1h-1v1h-1v1h-3v-1h-2v-1h-1v-4h-1v6h-1v-1h-1v-1h-2v1h-2v1h-1v1h-1v-20h-1v-2h-1v16h-1v1h-1v-1h-1v1h-1v1h-1v-1h-1v-1h-2v2h-1v-8h-1v7h-1v-1h-1v-21h-1v1h-1v26h-1v-10h-1v8h-1v-11h-2v14h-1v-1h-1v-12h-1v13h-1v-1h-1v-1h-1v-3h-1v13h-1v2h-1v-1h-2v1h-1v-10h-1v14h-3v1h-1v-1h-3v2h-2v1h-1v-1h-1v1h-1v-1h-1v1h-1v-1h-1v1h-4v-1h-1v-2h-1v1h-3v-3h-1v1h-1v-1h-1v1h-1v1h-2v1h-1v-1h-1v1h-2v1h-3v-2h-1v2h-2v-1h-1v-2h-1v2h-1v-2h-1v2h-1v-1h-3v-1h-1v-1h-1v1h-1v1h-1v2h-1v-2h-2v1h-1v-1h-1v-1h-2v1h-1v-1h-1v-1h-1v-1h-2v1h-1v1h-1v-21h-1v15h-1v1h-1v-1h-1v1h-1v-1h-1v1h-1v-1h-3v-9h-2v14h-1v-1h-1v1h-2v-1h-1v-1h-1v-1h-2v1h-1v2h-2v-2h-1v2h-1v-1h-1v1h-1v-1h-1v1h-1v1h-1v1h-1z" fill="#ff2a1c"/><path d="M21 598h1v-1h2v1h3v1h1v-1h1v-1h2v1h1v-1h1v1h1v1h1v-1h2v-1h2v-1h1v15h1v4h1v-11h1v-1h2v-1h1v2h1v-1h1v-1h1v2h1v-1h1v16h1v-22h1v1h1v1h1v-2h2v1h2v1h1v-1h1v-1h2v1h1v-2h1v1h2v-1h1v1h4v-1h3v-1h1v1h3v-1h1v1h1v1h3v-1h1v1h1v1h1v-1h1v-1h1v-1h1v2h1v-1h1v1h1v-1h1v1h1v-2h2v1h1v1h1v-1h1v1h4v-1h2v-1h1v1h1v-1h1v1h1v-1h2v1h1v1h1v-1h4v17h1v-11h2v-1h3v18h1v-13h1v-2h2v12h1v-11h1v-1h1v13h1v1h1v-14h1v11h1v-12h1v26h1v1h1v-24h1v-1h1v11h1v-12h1v1h1v-1h3v2h1v-1h1v-1h1v1h1v22h1v-1h1v-26h2v1h1v1h1v-1h1v1h1v-1h2v9h1v-10h2v1h3v-1h5v1h1v8h1v-8h2v-1h1v2h1v-1h3v-1h1v1h1v1h2v-1h1v-1h1v-1h1v2h3v11h1v-10h2v1h1v-1h4v-1h1v1h4v-1h1v1h1v1h1v2h1v11h1v-10h1v-1h1v-3h1v1h1v8h1v-8h2v1h1v-1h1v-1h4v-1h1v-1h1v-1h2v19h1v1h1v-15h2v9h1v-7h1v-1h1v-1h1v1h1v20h2v-18h2v1h1v1h1v1h1v-1h3v-1h1v-1h1v2h5v-1h1v1h1v13h1v1h1v-13h1v-1h4v-1h1v2h1v-1h2v1h1v1h1v9h1v-9h1v1h1v1h1v-1h1v1h1v-1h3v9h1v-10h1v-1h1v1h1v17h1v-13h1v1h2v18h1v-19h1v9h1v-9h1v1h1v17h2v-14h1v14h1v-1h1v-12h2v12h1v-11h1v1h1v10h1v-9h2v-1h1v11h1v-11h2v-6h3v-1h1v1h2v1h5v-1h1v-1h2v2h1v-1h1v1h2v13h1v1h1v-11h1v-1h1v2h2v-1h2v1h1v-1h1v1h2v-1h1v1h1v-1h1v-1h1v1h1v7h1v-6h1v1h1v-1h1v1h1v1h3v-1h1v-1h1v1h1v1h1v-1h1v1h3v-1h1v-1h1v11h1v3h1v-6h1v-1h1v1h4v-1h3v-1h1v2h1v-1h1v3h1v-4h2v4h2v1h2v-1h1v1h1v-1h2v-1h1v1h1v-1h4v12h1v-6h3v1h1v-1h1v1h2v5h1v-4h2v-1h1v1h1v-1h1v10h1v-8h2v6h1v-6h5v-1h1v11h1v2h1v2h1v-5h1v1h1v5h1v-2h1v-2h1v-2h1v4h1v-3h1v3h2v-1h1v-1h1v4h2v-2h1v-2h1v4h1v-4h1v1h1v-1h1v4h1v-4h1v3h2v1h2v1h3v-5h1v5h1v-1h1v2h1v2h1v1h1v-2h1v1h1v-1h1v1h1v-4h1v-1h1v1h1v2h1v-2h1v-1h1v1h1v-2h1v2h1v-2h1v2h2v-1h4v1h1v1h1v-1h1v2h1v-2h4v1h1v-1h1v1h1v-1h1v1h1v1h2v-1h6v1h2v-1h1v2h2v1h1v2h44v-1h1v-1h3v-10h1v10h5v-2h6v-1h7v-7h1v7h2v-3h1v-3h2v-4h2v1h1v1h1v2h1v-2h1v-5h1v5h1v2h1v-3h1v-1h1v-1h1v-1h1v-1h1v4h1v-1h1v-2h1v-3h1v4h2v-1h1v-4h1v-4h1v3h1v3h1v-4h1v-2h1v2h1v2h1v-36h1v37h1v1h1v-1h1v2h1v-1h2v2h1v-5h1v1h1v2h1v-26h1v28h1v-1h1v2h1v2h1v-6h1v-35h1v2h1v34h1v1h1v-4h1v2h1v1h1v1h1v-6h2v7h1v-2h1v-5h1v6h1v-4h1v5h1v-6h1v-1h1v-1h2v-5h1v7h2v-4h1v-3h1v7h1v-3h1v2h1v-4h1v1h1v-2h1v-19h1v5h1v11h1v-2h1v-10h1v8h1v-7h1v6h1v-6h1V689h-1v-3h-1v1h-1v1h-1v-5h-2v1h-1v1h-1v5h-1v-14h-3v-1h-1v2h-2v2h-1v-1h-2v2h-1v-4h-1v4h-1v-1h-2v-3h-1v5h-1v-3h-1v-1h-2v1h-1v2h-1v-4h-1v3h-1v4h-1v-4h-1v2h-1v2h-1v-2h-1v3h-1v-2h-1v3h-1v-4h-1v-2h-1v-1h-1v2h-1v-2h-1v6h-1v-6h-1v-3h-1v3h-2v-1h-1v-2h-1v4h-1v-2h-1v-2h-1v2h-1v5h-1v-3h-1v-3h-1v1h-1v6h-1v-2h-1v2h-1v-6h-1v4h-1v-2h-1v-8h-1v2h-1v-2h-1v1h-1v1h-1v-3h-1v2h-1v-2h-1v-1h-2v-2h-1v1h-2v3h-1v-1h-2v-2h-1v-1h-1v2h-1v-2h-1v-1h-1v-1h-2v-1h-8v-1h-8v-2h-5v1h-1v-1h-4v-1h-44v2h-1v2h-1v1h-1v-1h-1v1h-1v1h-1v-1h-1v-1h-1v1h-1v2h-1v-1h-1v-1h-1v3h-3v-3h-1v2h-1v-2h-1v1h-2v-1h-1v2h-1v-1h-1v-2h-1v2h-1v2h-1v-1h-2v1h-1v-2h-2v-2h-1v3h-2v1h-1v-2h-1v1h-1v2h-2v-4h-1v2h-2v-2h-3v-1h-2v-1h-1v-1h-1v4h-3v2h-1v1h-1v-1h-1v-1h-2v1h-1v1h-1v-1h-1v9h-1v-3h-1v3h-1v1h-1v-7h-1v2h-1v3h-1v2h-1v-6h-1v1h-2v5h-1v-5h-1v5h-1v-2h-2v-2h-2v2h-1v-4h-1v-1h-2v-1h-2v2h-1v8h-2v-1h-1v1h-1v-1h-2v-4h-1v4h-2v-7h-1v9h-1v-1h-2v1h-1v-1h-1v-2h-1v2h-2v1h-1v-1h-1v1h-3v-5h-1v6h-1v1h-2v1h-4v1h-1v1h-1v-1h-1v2h-4v3h-1v-1h-1v-2h-1v3h-3v1h-1v-1h-6v1h-1v-1h-1v-6h-2v7h-1v-1h-4v1h-1v-1h-4v1h-2v1h-2v1h-1v-1h-2v-4h-1v4h-2v1h-1v-1h-1v1h-1v-1h-1v1h-2v-1h-1v-1h-1v1h-1v1h-2v2h-1v-1h-1v-10h-2v7h-2v1h-2v-1h-1v2h-1v-1h-6v1h-1v1h-1v1h-2v1h-1v-1h-1v1h-1v1h-1v-7h-1v6h-1v3h-1v-2h-1v-8h-1v8h-1v1h-1v-8h-1v7h-1v1h-1v-21h-2v12h-1v-9h-2v14h-1v-1h-1v-9h-1v10h-1v-14h-1v14h-1v-2h-1v1h-1v-10h-1v11h-1v-1h-1v2h-1v-9h-1v9h-1v1h-2v1h-1v-1h-4v-5h-1v8h-1v1h-1v2h-1v1h-2v-1h-1v-1h-1v1h-2v-1h-1v-1h-1v-8h-2v8h-2v-1h-1v1h-2v1h-1v-1h-1v-1h-1v1h-1v-2h-4v1h-1v1h-2v-1h-1v-9h-2v14h-1v-1h-1v1h-2v-4h-1v4h-1v3h-1v-17h-2v17h-1v-1h-1v1h-2v-1h-1v-1h-1v1h-3v1h-2v-1h-1v-6h-1v4h-2v2h-1v2h-1v-8h-1v8h-1v1h-3v-1h-2v1h-2v-1h-1v-1h-1v2h-1v-1h-1v1h-2v-1h-1v-1h-1v-1h-1v5h-2v-1h-2v1h-1v1h-1v-1h-1v-1h-1v1h-1v-1h-2v1h-1v2h-3v2h-2v-6h-1v5h-1v-1h-2v-1h-1v1h-1v1h-3v-1h-3v-4h-1v5h-1v-1h-1v-1h-2v1h-2v1h-1v1h-1v-18h-1v-1h-1v14h-3v1h-1v1h-1v-1h-1v-1h-2v2h-1v-8h-1v7h-1v-1h-1v-19h-1v1h-1v23h-1v-9h-1v8h-1v-11h-1v1h-1v12h-1v-1h-1v-10h-1v11h-1v-1h-1v-1h-1v-2h-1v12h-1v1h-1v-1h-2v1h-1v-9h-1v13h-1v-1h-1v1h-1v1h-1v-1h-3v1h-1v1h-7v1h-1v-1h-3v-1h-1v-1h-1v1h-3v-2h-2v-1h-1v1h-2v1h-1v1h-1v-1h-1v1h-2v1h-1v-1h-2v-1h-1v1h-1v1h-1v-1h-1v-2h-1v1h-1v-1h-1v2h-1v-2h-4v-1h-1v1h-1v1h-1v1h-1v-1h-2v1h-1v-1h-1v-2h-1v1h-3v-1h-1v-1h-2v1h-1v1h-1v-19h-1v14h-5v1h-1v-2h-3v-8h-2v13h-1v-1h-1v1h-2v-1h-1v-1h-1v-1h-2v1h-1v2h-2v-2h-1v2h-1v-1h-1v1h-1v-1h-1v1h-1v1h-1v1h-1z" fill="#ff6c1c"/><path d="M21 602h1v-1h2v1h2v1h2v-1h1v-1h2v1h3v1h1v-1h2v-1h2v-1h1v15h1v3h1v-10h1v-1h2v-1h1v2h1v-1h1v-1h1v2h1v-1h1v15h1v-21h1v1h1v1h1v-1h1v-1h1v1h2v1h2v-2h2v1h1v-1h2v1h1v-1h2v1h2v-1h1v-1h2v1h1v-1h3v1h1v-1h2v1h2v1h1v-1h2v1h1v-1h2v-1h1v1h5v-1h2v1h1v1h1v-1h4v1h1v-1h1v-1h8v1h1v-1h3v1h1v15h1v-10h2v-1h3v17h1v-13h1v-1h2v11h1v-10h1v-1h1v12h2v-12h1v10h1v-11h1v24h1v1h1v-23h2v10h1v-11h1v1h1v-1h3v1h2v-1h1v1h1v20h1v-1h1v-23h1v-1h1v1h1v1h1v-1h1v1h1v-1h2v8h1v-9h2v1h3v-1h5v1h1v8h1v-8h2v-1h1v2h1v-1h3v-1h1v1h1v1h2v-1h1v-1h1v-1h1v2h3v10h1v-9h1v-1h1v1h5v-1h1v1h4v-1h1v1h1v1h1v2h1v10h1v-9h1v-2h1v-2h1v1h1v7h1v-7h4v-1h4v-1h1v-1h1v-1h2v17h1v2h1v-14h2v8h1v-7h1v-1h3v19h2v-17h2v1h2v1h2v-1h1v1h1v-1h1v-1h1v2h4v-1h2v1h1v12h2v-11h1v-2h4v-1h1v2h1v-1h2v1h2v10h1v-10h1v1h1v2h1v-1h3v-1h2v9h1v-10h3v17h1v-12h3v17h1v-18h1v9h1v-9h1v1h1v17h2v-14h1v14h1v-1h1v-13h1v1h1v12h1v-11h2v10h1v-8h2v-1h1v10h1v-10h2v-7h1v1h1v-1h4v1h5v-1h1v-1h2v2h1v-1h1v1h2v13h1v1h1v-11h1v-1h1v2h2v-1h2v1h1v-1h1v1h2v-1h1v1h1v-1h1v-1h1v1h1v7h1v-6h1v1h1v-1h1v1h1v1h3v-1h1v-1h1v1h1v1h1v-1h1v1h3v-1h1v-1h1v11h1v3h1v-6h1v-1h1v1h4v-1h3v-1h1v2h1v-1h1v3h1v-4h2v4h2v1h2v-1h1v1h1v-1h2v-1h1v1h1v-1h4v12h1v-6h3v1h1v-1h1v1h2v5h1v-4h2v-1h1v1h1v-1h1v10h1v-8h2v6h1v-6h5v-1h1v11h1v2h1v2h1v-5h1v1h1v5h1v-2h1v-2h1v-2h1v4h1v-3h1v3h2v-1h1v-1h1v4h2v-2h1v-2h1v4h1v-4h1v1h1v-1h1v4h1v-4h1v3h2v1h2v1h3v-5h1v5h1v-1h1v2h1v2h1v1h1v-2h1v1h1v-1h1v1h1v-4h1v-1h1v1h1v2h1v-2h1v-1h1v1h1v-2h1v2h1v-2h1v2h2v-1h4v1h1v1h1v-1h1v2h1v-2h4v1h1v-1h1v1h1v-1h1v1h1v1h2v-1h6v1h2v-1h1v2h2v1h1v2h44v-1h1v-1h3v-9h1v9h5v-2h13v-7h1v6h2v-2h1v-3h2v-4h2v1h1v1h1v1h1v-1h1v-5h1v5h1v2h1v-3h1v-1h1v-1h1v-1h1v-1h1v4h1v-1h1v-2h1v-2h1v3h3v-4h1v-4h1v2h1v3h1v-4h1v-1h1v2h1v1h1v-34h1v35h1v1h1v-1h1v2h1v-1h2v2h1v-4h2v3h1v-25h1v26h1v-1h1v2h1v2h1v-6h1v-32h1v1h1v33h2v-3h1v2h2v1h1v-5h2v6h1v-2h1v-5h1v6h1v-3h1v4h1v-5h1v-2h3v-5h1v6h2v-3h1v-3h1v7h1v-3h1v1h1v-3h2v-2h1v-16h1v3h1v11h1v-1h1v-10h1v8h1v-7h1v5h1v-5h1V687h-1v-3h-1v1h-1v2h-1v-5h-1v-1h-1v2h-1v1h-1v4h-1v-13h-3v-1h-1v2h-2v1h-3v1h-1v-3h-1v4h-1v-1h-1v-1h-1v-2h-1v4h-1v-2h-1v-1h-1v-1h-1v2h-1v1h-1v-3h-1v2h-1v4h-1v-4h-1v2h-1v2h-1v-1h-1v2h-1v-2h-1v3h-1v-4h-1v-2h-1v-1h-1v2h-1v-1h-1v5h-1v-5h-1v-3h-1v3h-2v-1h-1v-2h-1v3h-1v-1h-1v-2h-1v2h-1v4h-1v-3h-1v-2h-1v1h-1v5h-1v-2h-1v2h-1v-5h-1v4h-1v-2h-1v-8h-1v2h-1v-1h-2v1h-1v-3h-1v2h-1v-2h-1v-1h-1v1h-1v-2h-2v1h-1v2h-1v-1h-2v-1h-1v-1h-1v1h-1v-1h-1v-2h-1v-1h-5v-1h-2v1h-1v-1h-10v-2h-5v1h-1v-1h-3v-1h-45v2h-1v2h-4v1h-2v-1h-1v1h-1v1h-2v-1h-1v2h-2v1h-1v-3h-1v2h-1v-2h-1v1h-2v-2h-1v2h-1v-1h-1v-1h-1v2h-1v1h-1v-1h-1v1h-2v-2h-1v1h-1v-2h-1v3h-1v-1h-1v2h-1v-2h-1v1h-1v1h-2v-3h-1v2h-2v-2h-2v-1h-3v-2h-2v3h-1v1h-2v1h-1v2h-1v-2h-2v-1h-1v2h-1v1h-1v-1h-1v8h-1v-3h-1v3h-2v-5h-1v1h-1v2h-1v3h-1v-5h-3v5h-1v-5h-1v5h-1v-2h-2v-2h-2v2h-1v-4h-1v-1h-1v1h-1v-2h-2v2h-1v7h-1v1h-1v-1h-4v-4h-1v4h-2v-7h-1v8h-5v-2h-1v2h-2v1h-1v-1h-2v1h-2v-5h-1v6h-3v1h-2v1h-2v1h-3v1h-4v3h-1v-1h-1v-1h-1v2h-3v1h-1v-1h-6v1h-1v-1h-1v-6h-1v1h-1v6h-1v-1h-4v1h-1v-1h-4v1h-2v1h-5v-4h-1v3h-1v1h-3v1h-1v-1h-2v1h-1v-1h-1v-1h-1v1h-1v1h-2v1h-2v-10h-2v6h-2v1h-1v1h-1v-1h-1v1h-5v-1h-1v1h-1v1h-2v2h-3v-1h-1v1h-1v1h-1v-6h-1v6h-1v2h-1v-1h-1v-8h-1v7h-1v2h-1v-8h-1v7h-2v-19h-2v11h-1v-8h-2v13h-1v-1h-1v-9h-1v10h-1v-13h-1v13h-1v-2h-1v1h-1v-9h-1v10h-1v-1h-1v2h-1v-9h-1v8h-1v1h-2v1h-5v-5h-1v8h-2v2h-1v1h-2v-1h-4v-1h-1v-1h-1v-7h-2v7h-2v-1h-1v1h-1v1h-3v-2h-1v1h-1v-2h-2v1h-1v-1h-1v1h-1v1h-2v-1h-1v-8h-2v13h-1v-1h-1v1h-2v-3h-1v4h-1v2h-1v-16h-2v16h-1v-1h-1v1h-2v-1h-1v-1h-1v1h-3v1h-2v-1h-1v-5h-1v3h-2v2h-1v1h-1v-7h-1v8h-2v1h-2v-2h-2v1h-1v1h-1v-2h-2v1h-2v1h-2v-1h-1v-2h-2v4h-3v-1h-1v2h-3v-1h-1v1h-1v-2h-1v1h-1v1h-1v1h-2v1h-1v1h-2v-5h-1v4h-3v-1h-1v1h-4v-1h-1v1h-1v-1h-1v-4h-1v5h-1v-1h-3v1h-1v-1h-1v1h-1v2h-1v-17h-1v-2h-1v14h-3v1h-1v1h-1v-2h-1v-1h-1v1h-1v1h-1v-7h-1v6h-2v-18h-1v1h-1v22h-1v-9h-1v7h-1v-10h-1v1h-1v11h-1v-1h-1v-9h-1v10h-1v-1h-2v-3h-1v11h-1v2h-1v-1h-2v1h-1v-9h-1v12h-3v1h-1v-1h-3v1h-1v1h-3v1h-1v-1h-1v1h-1v-1h-1v1h-1v-1h-2v1h-1v-1h-1v-2h-1v2h-1v-1h-2v-2h-3v1h-2v1h-1v1h-1v-1h-1v1h-1v-1h-1v1h-3v-2h-1v2h-2v-1h-1v-1h-1v1h-1v-1h-1v1h-1v-1h-3v-1h-1v-1h-1v1h-1v1h-1v1h-1v-1h-2v1h-1v-1h-1v-1h-2v1h-1v-1h-1v-1h-3v1h-1v1h-1v-19h-1v14h-4v-1h-1v1h-1v-1h-3v-8h-2v13h-1v-2h-1v1h-3v-1h-1v-1h-2v1h-1v1h-2v-1h-1v1h-4v1h-2v1h-1z" fill="#ffb21c"/><path d="M21 607h1v-1h2v1h3v1h1v-1h1v-1h2v1h3v1h1v-1h2v-1h2v-1h1v14h1v2h1v-9h2v-1h2v1h2v-1h1v1h2v13h1v-19h1v1h1v1h1v-1h1v-1h1v1h4v-1h2v1h1v-1h2v1h1v-1h5v-1h2v1h1v-1h1v1h1v-1h1v1h1v-1h2v1h1v1h2v-1h1v1h2v-1h2v-1h1v1h2v1h1v-1h2v-1h2v1h1v1h1v-1h1v1h1v-1h2v1h1v-1h1v-1h2v1h1v-1h5v1h1v-1h3v1h1v14h1v-9h1v-1h4v15h1v-11h1v-2h1v1h1v9h1v-9h1v-1h1v12h2v-11h1v9h1v-10h1v22h2v-20h1v-1h1v10h1v-11h1v1h2v-1h1v1h1v1h1v-1h3v19h1v-1h1v-22h3v1h3v-1h2v8h1v-8h1v-1h1v2h1v-1h1v1h1v-1h1v-1h1v1h3v1h1v7h1v-8h1v1h1v-1h1v1h4v-1h1v1h3v-1h2v-1h1v1h1v1h1v-1h1v10h1v-9h2v1h1v-1h2v1h2v-1h5v-1h1v1h1v1h1v2h1v9h1v-8h1v-1h1v-2h1v1h1v6h1v-7h1v1h3v-1h2v-1h1v1h1v-1h1v-1h1v-1h2v16h1v1h1v-13h1v1h1v7h1v-6h1v-1h1v-1h1v1h1v17h2v-16h1v1h2v1h3v-1h1v1h1v-1h1v-1h1v2h5v-1h1v1h1v11h2v-10h1v-1h1v-1h4v1h1v-1h2v1h2v9h1v-9h1v1h1v1h4v-1h2v8h1v-9h3v15h1v-11h1v1h2v16h1v-17h1v8h1v-8h1v1h1v15h2v-12h1v12h1v-1h1v-11h1v1h1v10h1v-10h1v1h1v9h1v-8h2v-1h1v9h1v-9h2v-6h3v-1h1v1h2v1h5v-1h1v-1h2v2h1v-1h3v13h2v-10h1v-1h1v2h2v-1h2v1h1v-1h2v1h1v-1h1v1h1v-1h1v-1h1v1h1v6h1v-5h4v1h1v1h1v-1h1v-1h2v1h6v-1h1v-1h1v11h1v2h1v-6h5v1h1v-1h1v-1h1v1h1v-1h1v1h1v-1h1v3h1v-4h2v4h2v1h2v-1h1v1h1v-1h2v-1h1v1h1v-1h4v11h1v-5h5v1h2v5h1v-4h2v-1h1v1h1v-1h1v9h1v-7h2v6h1v-6h3v-1h1v1h1v-1h1v11h1v1h1v2h1v-5h1v1h1v5h1v-2h1v-2h1v-2h1v4h1v-3h1v3h2v-1h1v-1h1v4h2v-2h1v-2h1v4h1v-4h1v1h1v-1h1v4h1v-4h1v3h2v1h2v1h3v-5h1v5h1v-1h1v2h1v2h1v1h1v-2h1v1h1v-1h1v1h1v-4h1v-1h1v1h1v2h1v-2h1v-1h1v1h1v-2h1v2h1v-2h1v2h2v-1h4v1h1v1h1v-1h1v2h1v-2h4v1h1v-1h1v1h1v-1h1v1h1v1h2v-1h6v1h2v-1h1v2h2v1h1v2h44v-1h1v-1h3v-8h1v8h5v-1h2v-1h11v-6h1v6h2v-3h1v-2h1v-1h1v-3h2v1h1v1h1v1h1v-1h1v-4h1v4h1v1h1v-2h1v-1h1v-1h1v-1h2v3h1v-1h1v-1h1v-3h1v3h1v1h1v-1h1v-4h1v-3h1v2h1v3h1v-4h1v-1h1v1h1v2h1v-31h1v32h1v1h1v-1h1v1h3v1h1v-3h2v2h1v-23h1v25h1v-1h1v1h1v2h1v-6h1v-29h1v1h1v30h1v1h1v-4h1v2h1v1h1v1h1v-5h2v5h1v-1h1v-5h1v5h1v-3h1v4h1v-5h1v-1h3v-5h1v6h2v-3h1v-3h1v6h1v-2h1v1h1v-3h1v1h1v-2h1v-16h1v4h1v10h1v-2h1v-9h1v8h1v-7h1v5h1v-5h1V685h-1v-3h-1v1h-1v1h-1v-4h-1v-1h-1v2h-2v4h-1v-12h-4v1h-2v2h-1v-1h-2v2h-1v-3h-1v3h-1v-1h-2v-2h-1v4h-1v-3h-1v-1h-2v2h-1v1h-1v-3h-1v2h-1v3h-1v-3h-1v2h-1v1h-1v-1h-1v2h-1v-2h-1v3h-1v-4h-1v-1h-1v-1h-1v2h-1v-2h-1v5h-1v-5h-1v-2h-1v2h-1v1h-1v-2h-1v-1h-1v3h-1v-2h-1v-1h-1v2h-1v3h-1v-2h-1v-3h-1v1h-1v5h-1v-1h-1v1h-1v-4h-1v3h-1v-2h-1v-7h-1v2h-1v-1h-2v1h-1v-2h-1v1h-1v-2h-3v-2h-1v1h-2v2h-1v-1h-2v-1h-1v-1h-1v2h-1v-2h-1v-1h-1v-1h-2v-1h-16v-2h-5v1h-1v-1h-3v-1h-45v2h-1v1h-1v1h-1v-1h-1v1h-1v1h-2v-2h-1v2h-1v1h-1v-1h-2v2h-3v-2h-1v1h-1v-2h-1v1h-2v-1h-1v2h-1v-1h-1v-1h-1v1h-1v1h-3v1h-1v-2h-1v1h-1v-2h-1v2h-2v1h-1v-2h-1v1h-1v2h-1v-1h-1v-3h-1v2h-2v-2h-3v-1h-1v1h-1v-2h-2v3h-3v2h-1v1h-1v-1h-1v-1h-2v1h-1v1h-1v-1h-1v7h-1v-2h-1v2h-1v1h-1v-5h-1v1h-1v2h-1v2h-1v-4h-3v5h-1v-5h-1v4h-1v-1h-2v-2h-2v2h-1v-4h-1v-1h-1v1h-1v-2h-1v1h-1v1h-1v7h-5v-1h-1v-3h-1v4h-1v-1h-1v-6h-1v8h-1v-1h-2v1h-1v-1h-1v-2h-1v2h-2v1h-1v-1h-1v1h-3v-5h-1v6h-3v1h-3v1h-2v1h-2v1h-4v3h-1v-1h-1v-2h-1v3h-2v-1h-1v1h-3v-1h-3v1h-2v-1h-1v-4h-2v6h-1v-1h-1v-1h-1v1h-5v-1h-1v1h-3v2h-1v-1h-1v1h-1v-1h-2v-3h-1v3h-2v1h-1v-1h-1v1h-1v-1h-1v1h-2v-1h-3v1h-2v1h-2v-9h-2v6h-2v1h-3v1h-1v-1h-3v1h-1v-1h-1v1h-1v1h-2v1h-3v-1h-1v1h-1v1h-1v-6h-1v6h-1v2h-1v-1h-1v-7h-1v6h-1v2h-1v-7h-1v6h-2v-18h-2v11h-1v-8h-1v1h-1v11h-2v-8h-1v8h-1v-12h-1v12h-1v-1h-2v-8h-1v9h-1v-1h-1v2h-1v-8h-1v8h-2v1h-1v1h-1v-1h-4v-5h-1v8h-2v2h-1v1h-2v-1h-1v-1h-2v1h-1v-1h-1v-1h-1v-7h-2v7h-2v-1h-1v1h-2v1h-1v-1h-1v-1h-1v1h-1v-2h-2v1h-1v-1h-1v1h-1v1h-2v-1h-1v-8h-1v1h-1v12h-1v-1h-1v1h-1v-1h-1v-2h-1v3h-1v2h-1v-14h-2v15h-1v-1h-4v-1h-1v1h-1v-1h-2v1h-2v-1h-1v-5h-1v4h-2v1h-1v1h-1v-6h-1v7h-3v1h-1v-2h-2v1h-3v-1h-1v1h-2v1h-2v-1h-1v-1h-1v-1h-1v4h-3v-1h-1v2h-2v-1h-2v1h-1v-2h-1v1h-1v1h-1v1h-3v2h-2v-5h-1v4h-1v-1h-2v-1h-1v1h-1v1h-3v-1h-3v-4h-1v5h-1v-1h-1v-1h-1v1h-3v1h-1v2h-1v-16h-1v-1h-1v12h-3v1h-1v1h-1v-1h-1v-1h-2v1h-1v-6h-1v5h-2v-17h-1v1h-1v20h-1v-7h-1v6h-1v-9h-2v11h-1v-1h-1v-9h-1v10h-1v-1h-2v-3h-1v10h-1v2h-1v-1h-2v1h-1v-8h-1v11h-1v-1h-2v1h-4v1h-2v1h-1v-1h-1v1h-8v-1h-1v-1h-1v1h-3v-2h-4v1h-2v1h-1v-1h-1v1h-2v1h-1v-1h-2v-1h-1v1h-1v1h-1v-1h-1v-2h-1v1h-1v-1h-1v1h-1v-1h-4v-1h-1v1h-2v2h-1v-1h-1v-1h-1v1h-1v-1h-1v-1h-1v1h-3v-1h-1v-1h-1v1h-1v1h-2v-16h-1v12h-4v-1h-1v1h-1v-1h-3v-7h-2v11h-1v-1h-1v1h-3v-1h-1v-1h-2v1h-1v1h-2v-1h-1v1h-1v-1h-1v1h-1v-1h-1v1h-1v1h-1v1h-1z" fill="#d6f01c"/><path d="M21 614h3v1h1v-1h1v1h3v-1h2v1h1v-1h1v1h3v-1h3v-1h1v11h1v3h1v-8h1v-1h3v1h1v-1h2v1h2v11h1v-16h1v1h2v-1h3v1h3v-2h1v1h2v-1h1v1h2v-1h2v1h3v-1h2v1h1v-1h3v1h1v-1h2v1h5v1h1v-1h2v-1h1v1h5v-1h2v1h1v1h1v-1h6v-1h8v1h1v-1h4v13h1v-8h2v-1h3v13h1v-10h1v-1h2v9h1v-8h1v-1h1v10h2v-10h1v8h1v-8h1v19h2v-17h1v-1h1v8h1v-9h1v1h2v-1h1v1h1v1h1v-1h3v16h1v-1h1v-18h6v-1h2v7h1v-7h1v-1h1v1h2v1h1v-1h5v1h1v6h1v-6h3v1h1v-1h3v-1h1v1h3v-1h2v-1h1v1h1v1h1v-1h1v9h1v-8h2v1h1v-1h9v-1h1v1h1v1h1v1h1v9h1v-8h1v-1h1v-1h2v6h1v-6h1v1h3v-1h4v-1h1v-1h3v13h1v2h1v-11h2v6h1v-5h1v-1h1v-1h1v1h1v14h2v-13h3v1h3v-1h1v1h1v-1h2v1h7v9h1v1h1v-9h1v-1h4v-1h1v1h2v-1h1v2h2v7h1v-7h2v1h4v-1h2v7h1v-8h3v13h1v-9h2v1h1v13h1v-14h1v6h1v-6h2v13h1v1h1v-11h1v10h2v-10h1v1h1v9h1v-9h1v1h1v7h1v-7h2v-1h1v9h1v-9h2v-5h1v1h2v-1h2v1h1v1h1v-1h1v1h2v-1h2v-1h2v1h1v-1h1v1h1v-1h1v11h1v1h1v-9h1v-1h1v1h1v1h1v-1h2v1h1v-1h2v1h1v-1h1v1h1v-1h1v-1h1v1h1v5h1v-4h4v1h1v1h1v-1h2v-1h1v1h7v-1h1v9h1v2h1v-5h1v-1h2v1h1v-1h1v1h1v-1h1v-1h1v1h1v-1h1v1h2v1h1v-2h2v3h3v1h1v-1h4v-1h1v1h1v-1h4v10h1v-5h3v1h1v-1h1v1h2v4h1v-3h2v-1h1v1h1v-1h1v8h1v-6h2v5h1v-5h3v-1h1v1h1v-1h1v9h2v2h1v-5h1v1h1v5h1v-2h1v-2h1v-2h1v4h1v-3h1v3h2v-1h1v-1h1v4h2v-2h1v-2h1v4h1v-4h1v1h1v-1h1v4h1v-4h1v3h2v1h2v1h3v-5h1v5h1v-1h1v2h1v2h1v1h1v-2h1v1h1v-1h1v1h1v-4h1v-1h1v1h1v2h1v-2h1v-1h1v1h1v-2h1v2h1v-2h1v2h2v-1h4v1h1v1h1v-1h1v2h1v-2h4v1h1v-1h1v1h1v-1h1v1h1v1h2v-1h6v1h2v-1h1v2h2v1h1v2h44v-1h4v-8h1v8h5v-2h12v-1h1v-5h1v5h2v-2h1v-2h2v-3h3v2h1v1h1v-2h1v-3h1v4h1v1h1v-3h2v-1h1v-1h2v2h2v-1h1v-3h1v3h1v1h1v-1h1v-3h1v-3h1v2h1v2h1v-3h1v-1h1v1h1v1h1v-26h1v27h1v1h1v-1h1v1h3v1h1v-3h2v2h1v-19h1v21h1v-1h1v1h1v1h1v-4h1v-25h1v1h1v25h1v1h1v-3h1v1h1v1h1v1h1v-4h2v5h1v-2h1v-4h1v5h1v-3h1v3h1v-4h1v-1h3v-4h1v5h2v-3h1v-2h1v5h1v-2h1v1h1v-3h1v1h1v-2h1v-13h1v3h1v9h1v-2h1v-7h1v6h1v-6h1v5h1v-5h1V682h-1v-2h-1v1h-1v1h-1v-4h-2v1h-2v4h-1v-11h-3v-1h-1v2h-2v1h-3v1h-1v-3h-1v3h-2v-1h-1v-2h-1v4h-1v-2h-1v-1h-2v1h-1v1h-1v-2h-1v1h-1v4h-1v-4h-1v2h-1v1h-1v-1h-1v2h-1v-1h-1v2h-1v-3h-1v-2h-2v1h-1v-1h-1v4h-1v-4h-1v-3h-1v3h-2v-1h-1v-1h-1v2h-1v-1h-1v-2h-1v2h-1v3h-1v-2h-1v-2h-1v1h-1v4h-1v-1h-1v1h-1v-4h-1v3h-1v-1h-1v-7h-1v2h-1v-1h-2v1h-1v-2h-1v1h-1v-2h-3v-1h-3v2h-3v-2h-2v1h-1v-1h-1v-2h-3v-1h-14v-1h-2v-1h-5v1h-1v-1h-3v-1h-45v1h-1v2h-1v1h-1v-1h-1v1h-3v-1h-1v1h-1v1h-2v-1h-1v2h-2v1h-1v-3h-1v2h-1v-2h-1v1h-2v-1h-1v1h-1v-1h-1v-1h-1v2h-1v1h-1v-1h-2v1h-1v-2h-1v1h-1v-2h-1v2h-2v2h-1v-2h-1v1h-1v1h-2v-3h-1v2h-2v-2h-3v-1h-2v-1h-2v2h-1v1h-2v1h-1v1h-1v-1h-2v-1h-1v2h-2v-1h-1v7h-1v-2h-1v2h-1v1h-1v-5h-1v1h-1v2h-1v2h-1v-4h-3v4h-1v-4h-1v4h-1v-2h-2v-1h-2v2h-1v-4h-1v-1h-1v1h-1v-2h-1v1h-1v1h-1v6h-6v-3h-1v3h-2v-6h-1v7h-5v-2h-1v2h-7v-4h-1v5h-3v1h-3v1h-2v1h-3v1h-2v-1h-1v3h-2v-2h-1v2h-3v1h-1v-1h-6v1h-1v-1h-1v-4h-2v5h-2v-1h-1v1h-1v-1h-1v1h-1v-1h-1v1h-1v-1h-1v1h-3v1h-5v-4h-1v3h-1v1h-8v-1h-2v1h-2v1h-2v-8h-2v5h-2v1h-1v1h-1v-1h-1v1h-1v-1h-1v1h-5v1h-2v1h-5v1h-1v-5h-1v5h-1v2h-1v-1h-1v-7h-1v7h-1v1h-1v-6h-1v5h-1v1h-1v-17h-2v10h-1v-7h-2v11h-1v-1h-1v-7h-1v8h-1v-11h-1v11h-1v-2h-1v1h-1v-8h-1v8h-2v1h-1v-7h-1v7h-2v1h-1v1h-1v-1h-4v-4h-1v7h-2v1h-1v1h-3v-1h-2v1h-1v-1h-1v-1h-1v-6h-2v6h-2v-1h-1v1h-2v1h-1v-1h-1v-1h-1v1h-1v-2h-4v1h-1v1h-2v-1h-1v-7h-1v1h-1v11h-1v-1h-3v-2h-1v3h-1v2h-1v-13h-2v13h-1v-1h-1v1h-2v-1h-7v-1h-1v-4h-1v3h-2v2h-1v1h-1v-6h-1v6h-3v1h-1v-2h-2v1h-3v-1h-1v1h-2v1h-2v-1h-1v-1h-1v-1h-1v4h-3v-1h-1v1h-1v1h-1v-1h-2v1h-1v-2h-1v1h-1v1h-1v1h-3v2h-1v-1h-1v-4h-1v4h-1v-1h-2v-1h-1v1h-1v1h-1v-1h-1v1h-1v-1h-2v-1h-1v-3h-1v4h-2v-1h-2v1h-2v1h-1v1h-1v-14h-1v-1h-1v11h-3v1h-1v1h-1v-1h-1v-1h-2v1h-1v-5h-1v5h-1v-1h-1v-15h-1v1h-1v18h-1v-7h-1v6h-1v-9h-1v1h-1v9h-2v-8h-1v9h-1v-1h-1v-1h-1v-2h-1v9h-1v2h-1v-1h-2v1h-1v-8h-1v11h-1v-1h-2v1h-1v-1h-3v1h-1v1h-7v1h-1v-1h-2v1h-1v-1h-1v-1h-1v1h-2v-1h-1v-1h-5v1h-1v1h-1v-1h-1v1h-1v-1h-1v1h-3v-1h-1v1h-2v-1h-1v-1h-1v1h-1v-1h-1v1h-1v-1h-3v-1h-3v1h-1v1h-1v-1h-2v1h-1v-1h-1v-1h-1v1h-2v-1h-2v-1h-2v1h-1v1h-1v-15h-1v11h-6v-1h-3v-7h-2v11h-1v-1h-1v1h-3v-1h-1v-1h-2v1h-1v1h-2v-1h-1v1h-1v-1h-1v1h-1v-1h-1v1h-1v1h-2z" fill="#64f01c"/><path d="M21 621h1v-1h1v1h4v1h1v-1h5v1h3v-1h3v-1h1v9h1v2h1v-6h1v-1h3v1h2v-1h1v1h2v10h1v-14h1v1h2v-1h6v-1h2v1h1v-1h2v1h1v-1h11v1h1v-1h2v1h5v1h1v-1h2v-1h1v1h5v-1h2v1h1v1h1v-1h6v-1h13v11h1v-7h2v-1h2v1h1v11h1v-9h1v-1h1v1h1v7h1v-7h1v-1h1v9h2v-8h1v6h1v-7h1v16h2v-14h1v-1h1v7h1v-7h5v1h1v-1h3v14h1v-1h1v-16h3v1h1v-1h3v-1h1v6h1v-6h2v1h3v-1h5v1h1v5h1v-5h3v1h3v-1h3v1h1v-1h2v-1h3v1h2v7h1v-7h2v1h1v-1h9v-1h1v1h1v1h1v1h1v7h1v-6h1v-1h1v-1h2v5h1v-5h1v1h4v-1h4v-1h2v-1h1v12h1v1h1v-9h2v6h1v-5h1v-1h3v12h2v-12h1v1h3v1h1v-1h4v-1h1v2h5v-1h1v1h1v8h2v-8h1v-1h5v1h1v-1h2v1h2v7h1v-7h1v1h1v1h1v-1h5v5h1v-6h1v-1h1v1h1v11h1v-8h2v1h1v11h1v-12h1v6h1v-6h1v1h1v11h2v-9h1v9h1v-1h1v-8h1v1h1v7h1v-7h2v6h1v-5h1v-1h2v7h1v-7h1v-1h1v-4h1v1h2v-1h1v1h2v1h1v-1h1v1h2v-1h2v-1h2v1h1v-1h1v1h1v-1h1v10h2v-7h1v-1h1v1h3v-1h1v1h4v-1h1v1h1v-1h3v5h1v-4h1v1h3v1h3v-1h3v1h1v-1h1v1h3v-1h2v7h1v2h1v-4h1v-1h5v-1h4v1h1v-1h1v2h1v-3h1v1h1v3h1v-1h1v1h2v-1h1v1h1v-1h5v-1h3v9h1v-4h5v1h2v3h1v-3h1v1h1v-1h3v7h1v-6h2v5h1v-5h6v7h2v1h1v-4h1v1h1v5h1v-3h1v-1h1v-2h1v4h1v-3h1v2h2v-1h2v3h2v-1h1v-2h1v3h1v-4h1v2h1v-1h1v4h1v-5h1v3h2v1h2v1h3v-5h1v5h1v-1h1v2h1v2h1v1h1v-2h1v1h1v-1h1v1h1v-4h1v-1h1v1h1v2h1v-2h1v-1h1v1h1v-2h1v2h1v-2h1v2h2v-1h4v1h1v1h1v-1h1v2h1v-2h4v1h1v-1h1v1h1v-1h1v1h1v1h1v1h1v-1h1v-1h5v2h1v-1h1v-1h1v2h2v1h1v2h44v-1h4v-7h1v7h5v-1h2v-1h11v-5h1v5h2v-2h1v-2h2v-3h1v1h2v1h1v1h1v-1h1v-3h1v3h1v1h1v-2h2v-1h1v-1h2v2h1v-1h1v-1h1v-2h1v3h2v-1h1v-2h1v-3h1v2h1v2h1v-3h1v-1h1v1h1v2h1v-23h1v23h1v1h1v-1h1v1h3v1h1v-3h1v1h1v1h1v-16h1v17h2v1h1v1h1v-4h1v-22h1v1h1v22h1v1h1v-3h1v2h2v1h1v-4h2v4h1v-1h1v-3h1v4h1v-3h1v3h1v-3h1v-1h1v-1h2v-3h1v4h2v-2h1v-2h1v5h1v-2h1v1h1v-3h1v1h1v-2h1v-11h1v3h1v7h1v-1h1v-7h1v6h1v-5h1v4h1v-4h1V680h-1v-2h-2v1h-1v-3h-1v-1h-1v1h-1v1h-1v3h-1v-9h-1v-1h-1v1h-1v-1h-1v1h-2v1h-3v1h-1v-2h-1v2h-3v-2h-1v3h-1v-2h-1v-1h-2v1h-1v1h-1v-2h-1v2h-1v2h-1v-2h-1v1h-1v1h-1v-1h-1v2h-1v-2h-1v3h-1v-3h-1v-2h-2v1h-1v-1h-1v4h-1v-4h-1v-2h-1v2h-2v-1h-1v-1h-1v3h-1v-2h-1v-1h-1v1h-1v3h-1v-2h-1v-2h-1v1h-1v4h-1v-1h-1v1h-1v-3h-1v2h-1v-1h-1v-6h-1v2h-1v-1h-2v1h-1v-2h-1v1h-1v-2h-3v-1h-2v1h-1v1h-3v-1h-1v-1h-1v1h-1v-1h-1v-1h-1v-1h-8v-1h-10v-1h-9v-1h-45v1h-1v2h-4v1h-2v-1h-1v1h-1v1h-1v-1h-2v1h-2v1h-1v-2h-1v1h-1v-2h-1v1h-2v-1h-1v1h-2v-1h-1v1h-1v1h-4v-1h-2v-1h-1v2h-2v1h-1v-2h-1v1h-1v1h-2v-3h-1v2h-2v-2h-5v-1h-2v2h-3v1h-1v1h-1v-1h-3v1h-3v5h-1v-2h-1v2h-1v1h-1v-4h-1v1h-1v2h-1v1h-1v-3h-3v3h-1v-3h-1v3h-1v-1h-2v-1h-1v-1h-1v2h-1v-3h-1v-1h-1v1h-1v-2h-1v1h-1v1h-1v5h-6v-3h-1v3h-2v-5h-1v6h-5v-2h-1v2h-7v-3h-1v4h-3v1h-4v1h-3v1h-4v2h-2v-2h-1v2h-10v1h-1v-1h-1v-3h-2v4h-8v-1h-1v1h-3v1h-3v-1h-2v-2h-1v2h-2v1h-1v-1h-1v1h-4v-1h-3v1h-2v1h-2v-7h-2v4h-2v1h-3v1h-1v-1h-2v1h-4v1h-2v1h-3v-1h-1v1h-1v1h-1v-5h-1v4h-1v2h-1v-1h-1v-5h-1v5h-1v2h-1v-6h-1v5h-2v-14h-2v8h-1v-6h-2v10h-1v-1h-1v-6h-1v7h-1v-10h-1v9h-1v-1h-1v1h-1v-7h-1v7h-1v-1h-1v2h-1v-6h-1v6h-3v1h-5v-4h-1v6h-2v1h-1v1h-2v-1h-3v1h-1v-1h-1v-1h-1v-5h-2v5h-2v-1h-1v1h-1v1h-2v-1h-1v-1h-1v1h-1v-2h-2v1h-1v-1h-1v1h-1v1h-2v-1h-1v-6h-1v1h-1v10h-1v-1h-3v-2h-1v3h-1v2h-1v-12h-2v12h-1v-1h-1v1h-1v-1h-2v-1h-1v1h-2v-1h-1v1h-2v-1h-1v-4h-1v3h-2v1h-1v1h-1v-5h-1v5h-3v1h-1v-1h-1v-1h-1v1h-1v1h-1v-1h-1v-1h-1v1h-2v1h-2v-1h-1v-1h-1v-1h-1v4h-3v-1h-1v1h-1v1h-1v-1h-2v1h-1v-1h-2v1h-1v1h-3v1h-2v-4h-1v4h-1v-1h-2v-1h-1v1h-6v-1h-1v-2h-1v3h-1v-1h-3v1h-2v1h-1v1h-1v-12h-1v-1h-1v9h-1v1h-3v1h-1v-1h-1v-1h-1v1h-1v1h-1v-6h-1v5h-2v-14h-1v1h-1v16h-1v-6h-1v5h-1v-8h-1v1h-1v8h-2v-7h-1v7h-2v-1h-1v-2h-1v8h-1v2h-1v-1h-2v1h-1v-7h-1v9h-1v-1h-2v1h-5v1h-3v1h-1v-1h-1v1h-1v-1h-1v1h-4v-1h-1v-1h-1v1h-3v-2h-1v1h-1v-1h-1v1h-2v1h-2v-1h-1v1h-2v1h-1v-1h-2v-1h-1v1h-3v-1h-2v-1h-1v1h-1v-1h-4v-1h-1v1h-2v1h-1v-1h-2v1h-1v-1h-1v-1h-1v1h-3v-1h-3v1h-1v1h-1v-14h-1v10h-4v-1h-1v1h-1v-1h-3v-6h-2v9h-5v-1h-3v1h-1v1h-2v-2h-1v1h-4v1h-2v1h-1z" fill="#1cf04c"/><path d="M21 627h1v-1h1v1h4v1h1v-1h5v1h3v-1h2v-1h2v8h1v2h1v-6h1v-1h3v1h3v1h1v-1h1v9h1v-12h1v1h2v-1h6v-1h15v1h1v-1h1v1h1v-1h1v1h6v1h1v-1h11v1h1v-1h6v-1h13v9h1v-5h1v-1h4v10h1v-7h1v-1h2v6h1v-6h2v7h2v-7h1v5h1v-6h1v14h2v-12h2v6h1v-7h1v1h1v-1h3v1h2v-1h1v1h1v11h1v-1h1v-13h4v-1h4v5h1v-6h2v1h8v1h1v4h1v-4h7v-1h1v1h3v-1h2v-1h1v1h3v6h1v-6h2v1h1v-1h2v1h2v-1h7v1h1v1h1v6h1v-5h1v-1h1v-1h1v1h1v4h1v-4h9v-1h3v9h1v1h1v-8h2v5h1v-4h2v-1h1v1h1v10h2v-11h1v1h1v-1h1v1h8v1h4v-1h1v1h1v6h1v1h1v-7h1v-1h8v1h2v5h1v-5h1v1h5v-1h2v5h1v-5h1v-1h2v10h1v-7h1v1h2v10h1v-10h1v4h1v-4h2v9h1v1h1v-8h1v7h2v-7h1v1h1v6h1v-6h2v5h1v-5h2v-1h1v6h1v-6h2v-4h1v1h5v1h5v-1h1v-1h2v1h4v8h2v-7h2v1h2v-1h2v1h1v-1h1v1h2v-1h1v1h1v-1h3v5h1v-4h1v1h3v1h3v-1h3v1h1v-1h1v1h3v-1h2v6h1v2h1v-4h1v-1h6v-1h1v1h1v-1h1v1h2v1h1v-2h2v3h1v-1h1v1h2v-1h1v1h1v-1h5v-1h1v1h2v7h1v-4h1v1h6v3h1v-2h2v-1h1v1h1v-1h1v6h1v-4h2v3h1v-4h1v1h1v-1h4v6h2v1h1v-3h2v4h1v-2h1v-1h1v-1h1v3h1v-2h1v1h1v1h1v-1h1v-1h1v3h2v-1h1v-2h1v3h1v-3h1v1h1v-1h1v4h1v-4h1v2h2v1h2v1h2v-1h1v-4h1v5h1v-1h1v2h1v1h1v1h1v-2h1v1h1v-1h1v1h1v-3h1v-1h1v1h1v1h1v-1h1v-1h1v1h1v-2h1v2h1v-2h1v2h2v-1h4v1h1v1h1v-2h1v3h1v-2h5v-1h1v2h1v-1h1v1h1v1h2v-1h6v1h2v-1h1v1h1v1h2v2h44v-1h4v-5h1v5h5v-1h12v-1h1v-3h1v3h2v-1h1v-2h2v-2h3v1h1v1h1v-1h1v-3h1v3h1v1h1v-2h2v-1h2v-1h1v2h2v-1h1v-2h1v2h1v1h1v-1h1v-2h1v-2h1v1h1v2h1v-3h1v-1h1v1h1v1h1v-19h1v20h3v1h3v1h1v-3h1v1h1v1h1v-14h1v15h1v-1h1v1h1v1h1v-3h1v-19h1v1h1v19h2v-2h1v1h1v1h2v-2h1v-1h1v4h1v-1h1v-3h1v3h1v-2h1v3h1v-3h1v-1h2v-1h1v-2h1v3h2v-2h1v-1h1v4h1v-2h1v1h1v-2h2v-1h1v-10h1v3h1v6h1v-1h1v-6h1v5h1v-4h1v3h1v-3h1V676h-1v-1h-2v1h-1v-3h-2v1h-2v3h-1v-8h-3v-1h-1v1h-2v1h-3v1h-1v-2h-1v2h-3v-2h-1v3h-1v-2h-3v1h-2v-2h-1v2h-1v2h-1v-2h-1v1h-1v1h-1v-1h-1v1h-1v-1h-1v2h-1v-3h-1v-1h-2v1h-1v-1h-1v3h-1v-3h-1v-2h-1v2h-3v-2h-1v2h-1v-1h-1v-1h-1v1h-1v3h-1v-2h-1v-1h-2v3h-2v1h-1v-3h-1v2h-1v-1h-1v-5h-1v1h-1v-1h-2v1h-1v-1h-2v-1h-3v-1h-2v1h-1v1h-3v-1h-1v-1h-1v1h-1v-1h-1v-1h-3v-1h-16v-1h-9v-1h-45v1h-1v1h-1v1h-1v-1h-1v1h-3v-1h-1v1h-1v1h-2v-1h-1v2h-3v-2h-1v1h-1v-1h-1v1h-1v-1h-2v1h-1v-1h-1v-1h-1v2h-4v1h-1v-2h-1v1h-1v-2h-1v2h-2v1h-1v-1h-2v1h-2v-2h-1v1h-2v-1h-3v-1h-2v-1h-2v2h-2v1h-1v1h-2v-1h-3v1h-3v5h-1v-2h-1v2h-2v-3h-2v2h-1v1h-1v-3h-1v1h-2v2h-1v-2h-1v2h-1v-1h-2v-1h-2v1h-1v-2h-1v-1h-2v-1h-1v1h-1v1h-1v4h-6v-2h-1v2h-2v-4h-1v5h-1v-1h-2v1h-2v-2h-1v2h-3v-1h-1v1h-3v-3h-1v4h-1v-1h-2v1h-4v1h-3v1h-4v2h-1v-1h-1v-1h-1v2h-10v1h-1v-1h-1v-3h-2v4h-8v-1h-1v1h-3v1h-1v-1h-1v1h-1v-1h-2v-3h-1v3h-9v-1h-1v1h-3v1h-2v-6h-2v4h-2v1h-7v1h-1v-1h-1v1h-3v1h-3v-1h-1v1h-2v-3h-1v3h-1v2h-1v-1h-1v-4h-1v4h-1v2h-1v-5h-1v4h-2v-12h-2v7h-1v-5h-2v8h-2v-6h-1v6h-1v-8h-1v8h-1v-1h-2v-6h-1v6h-2v1h-1v-5h-1v5h-3v1h-5v-3h-1v5h-2v1h-1v1h-1v-1h-5v-1h-2v-5h-2v5h-2v-1h-1v1h-4v-1h-1v1h-1v-2h-4v1h-1v1h-1v-1h-2v-5h-1v1h-1v8h-4v-2h-1v2h-1v2h-1v-10h-2v10h-1v-1h-1v1h-2v-1h-7v-1h-1v-3h-1v2h-2v1h-1v1h-1v-5h-1v4h-1v1h-3v-1h-2v1h-2v-1h-2v1h-5v-1h-1v-1h-1v3h-1v1h-1v-1h-2v1h-3v-1h-1v1h-1v-1h-1v1h-1v1h-1v1h-1v-1h-1v1h-3v-3h-1v3h-1v-1h-2v-1h-1v1h-1v1h-1v-1h-4v-1h-1v-2h-1v3h-1v-1h-3v1h-2v1h-1v1h-1v-10h-1v-1h-1v8h-1v1h-1v-1h-1v1h-1v1h-1v-1h-1v-1h-2v1h-1v-4h-1v4h-1v-1h-1v-11h-2v14h-1v-5h-1v4h-1v-6h-2v7h-2v-6h-1v6h-3v-2h-1v7h-1v1h-1v-1h-2v1h-1v-6h-1v7h-3v1h-1v-1h-3v1h-2v1h-11v-1h-1v1h-3v-2h-1v1h-1v-1h-1v1h-3v1h-1v-1h-1v1h-5v-1h-1v1h-2v-1h-1v-1h-1v1h-1v-1h-1v1h-1v-1h-3v-1h-3v1h-1v1h-1v-1h-4v-1h-1v1h-3v-1h-3v1h-2v-11h-1v8h-6v-1h-3v-5h-2v8h-1v-1h-1v1h-4v-1h-2v1h-1v1h-2v-2h-1v1h-5v1h-2z" fill="#1cf0b8"/><path d="M21 636h6v1h2v-1h2v1h5v-1h3v-1h1v6h1v1h1v-4h2v-1h1v1h4v1h2v6h1v-8h3v-1h6v-1h2v1h1v-1h10v1h7v1h8v-1h1v1h5v-1h2v1h4v-1h2v1h1v-1h4v-1h1v1h1v-1h3v1h1v-1h3v1h1v6h1v-4h5v7h1v-5h1v-1h2v5h1v-4h1v-1h1v5h2v-5h1v4h1v-4h1v10h2v-9h2v4h1v-4h9v8h2v-10h2v-1h4v-1h2v4h1v-4h2v1h4v-1h3v1h2v4h1v-4h1v1h6v-1h5v-1h3v1h1v-1h1v5h1v-4h7v-1h7v1h2v5h1v-3h1v-1h3v3h1v-3h2v1h7v-1h3v7h2v-5h2v4h1v-3h1v-1h3v7h2v-8h4v1h1v-1h2v1h2v-1h1v1h2v1h2v-1h2v1h1v4h2v-5h5v-1h1v1h3v1h2v4h1v-4h2v1h1v-1h5v3h1v-4h3v7h1v-4h3v7h1v-7h1v3h1v-3h2v7h2v-5h1v5h1v-1h1v-4h2v5h1v-4h1v-1h1v4h1v-4h2v-1h1v4h1v-4h2v-3h1v1h5v1h4v-1h2v-1h2v1h1v-1h1v1h1v-1h1v6h2v-4h1v-1h1v1h3v-1h1v1h7v-1h1v1h1v3h1v-3h1v1h3v1h3v-1h2v1h8v4h1v1h1v-3h3v-1h4v-1h1v1h1v-1h1v1h2v1h1v-2h2v2h8v-1h1v1h1v-1h3v1h1v5h1v-3h1v1h6v2h1v-2h5v4h1v-3h2v3h1v-3h5v-1h1v5h2v1h1v-3h1v1h1v3h1v-2h1v-1h1v-1h1v2h1v-1h1v1h3v-1h1v2h3v-2h1v3h1v-3h1v1h1v-1h1v3h1v-3h1v2h2v1h1v-1h1v1h3v-3h1v3h1v-1h1v2h1v1h2v-1h4v-2h3v1h1v-1h3v-1h1v1h1v-1h1v1h5v-1h1v1h1v1h1v-1h1v2h1v-1h1v-1h1v1h1v-1h1v1h1v-1h1v1h3v1h2v-1h6v1h2v-1h1v1h2v1h1v1h45v-1h3v-4h1v4h7v-1h11v-3h1v3h2v-1h1v-1h2v-2h3v1h1v1h1v-1h1v-2h1v2h1v1h1v-2h3v-1h2v1h2v-1h1v-1h1v2h2v-1h1v-1h1v-2h1v1h1v1h1v-1h1v-1h1v1h2v-14h1v15h3v1h4v-1h2v1h1v-10h1v10h2v1h2v-2h1v-14h1v1h1v13h1v1h1v-2h1v1h1v1h2v-2h2v3h1v-1h1v-2h1v2h1v-1h1v1h1v-2h1v-1h3v-2h1v3h2v-2h1v-1h1v3h1v-1h2v-1h2v-1h1v-7h1v2h1v5h1v-1h1v-4h1v3h1v-3h1v3h1v-3h1V673h-1v-1h-2v1h-1v-3h-2v1h-2v2h-1v-6h-3v-1h-1v1h-2v1h-3v1h-1v-2h-1v2h-1v-1h-2v-1h-1v2h-1v-1h-4v1h-1v-2h-1v1h-1v2h-1v-2h-1v1h-1v1h-1v-1h-1v1h-1v-1h-1v2h-1v-2h-1v-1h-2v1h-1v-1h-1v3h-1v-3h-1v-1h-1v1h-3v-1h-1v1h-1v-1h-1v-1h-1v1h-1v2h-1v-1h-1v-1h-2v3h-1v-1h-1v1h-1v-2h-1v1h-1v-1h-1v-3h-1v1h-1v-1h-2v1h-1v-2h-1v1h-1v-1h-3v-1h-2v1h-1v1h-1v-1h-3v-1h-1v1h-1v-1h-2v-1h-16v-1h-2v-1h-5v1h-1v-1h-48v1h-1v1h-8v1h-2v-1h-1v2h-3v-1h-2v-1h-1v1h-2v-1h-1v1h-2v-1h-1v1h-4v1h-1v-1h-2v-1h-1v1h-2v1h-1v-1h-2v1h-2v-2h-1v1h-2v-1h-5v-1h-2v2h-3v1h-3v-1h-2v1h-3v4h-1v-2h-1v2h-2v-3h-1v1h-1v1h-1v1h-1v-2h-3v2h-1v-2h-1v2h-1v-1h-2v-1h-2v1h-1v-2h-3v-1h-2v1h-1v4h-5v-1h-1v-1h-1v2h-1v-1h-1v-3h-1v4h-5v-1h-1v1h-7v-2h-1v3h-7v1h-3v1h-4v1h-2v-1h-1v1h-10v1h-2v-3h-1v1h-1v3h-1v-1h-2v1h-1v-1h-8v1h-1v-1h-1v1h-1v-1h-2v-2h-1v2h-9v-1h-2v1h-2v1h-1v-1h-1v-4h-2v3h-2v1h-6v1h-2v-1h-1v1h-3v1h-1v-1h-4v1h-1v-3h-1v3h-1v1h-2v-4h-1v4h-1v1h-1v-4h-1v4h-2v-10h-2v6h-1v-4h-2v6h-2v-5h-1v5h-1v-6h-1v6h-1v-1h-2v-4h-1v4h-2v1h-1v-4h-1v4h-3v1h-1v-1h-2v1h-2v-3h-1v4h-2v1h-4v-1h-1v1h-2v-1h-2v-4h-1v1h-1v3h-5v1h-1v-1h-1v-1h-1v1h-1v-2h-4v1h-1v1h-2v-1h-1v-3h-2v7h-4v-1h-1v1h-1v2h-1v-8h-1v-1h-1v9h-1v-1h-4v-1h-1v1h-1v-1h-5v-3h-1v2h-3v1h-1v-4h-1v3h-2v1h-2v-1h-2v1h-2v-1h-2v1h-5v-1h-2v2h-5v1h-2v-1h-1v1h-1v-1h-1v1h-2v1h-3v1h-2v-3h-1v2h-2v-1h-3v1h-3v-1h-3v-2h-1v2h-4v1h-2v1h-1v1h-1v-9h-2v6h-1v1h-5v-1h-1v1h-2v-3h-1v3h-1v-1h-1v-9h-1v1h-1v10h-1v-4h-1v4h-1v-5h-2v6h-1v-1h-1v-4h-1v5h-1v-1h-2v-1h-1v5h-1v1h-1v-1h-2v1h-1v-5h-1v6h-8v1h-7v1h-5v-1h-1v1h-2v-1h-1v-1h-1v1h-1v-1h-1v1h-3v1h-1v-1h-1v1h-1v-1h-1v1h-2v-1h-5v-1h-1v1h-1v-1h-3v-1h-6v1h-1v-1h-2v1h-1v-1h-8v1h-2v-9h-1v7h-2v-1h-4v-1h-3v-3h-2v6h-1v-1h-1v1h-4v-1h-2v1h-1v1h-1v-1h-8v1h-1z" fill="#1cb0fa"/><path d="M21 645h1v-1h2v1h1v-1h1v1h8v1h1v-1h2v-1h3v3h1v1h1v-3h4v1h3v1h2v3h1v-5h4v-1h8v-1h1v1h2v-1h1v1h6v1h1v-1h1v1h6v1h7v-1h1v1h5v-1h2v1h2v-1h6v-1h13v5h1v-3h5v5h1v-4h3v3h1v-3h2v3h2v-3h1v2h1v-2h1v6h2v-5h2v2h1v-3h1v1h1v-1h2v1h3v-1h1v1h1v5h1v-1h1v-5h1v-1h1v-1h4v-1h2v2h1v-2h4v1h1v-1h5v1h1v2h1v-2h1v1h6v-1h4v-1h6v3h1v-3h12v-1h1v1h3v4h1v-2h2v-1h1v1h1v2h1v-2h3v1h9v4h2v-3h2v2h1v-2h4v4h2v-5h1v-1h6v1h5v1h3v-1h2v3h1v1h1v-4h9v1h2v2h1v-2h6v-1h2v3h1v-3h3v5h1v-3h3v5h1v-5h1v2h1v-2h1v1h1v4h2v-3h1v3h1v-1h1v-2h2v3h1v-3h2v2h1v-3h2v-1h1v3h1v-3h2v-2h1v1h4v1h6v-1h4v-1h1v1h1v-1h1v4h2v-3h11v1h1v-1h3v2h1v-1h3v1h7v1h7v2h1v1h1v-2h1v-1h5v-1h6v1h1v-1h2v1h2v1h2v-1h10v4h1v-2h6v1h1v1h1v-1h5v2h1v-2h2v2h1v-2h6v3h3v-1h2v2h1v-1h1v-1h2v1h1v-1h1v1h3v-1h1v2h2v-1h1v-1h1v2h1v-2h1v1h2v1h1v-2h1v1h2v1h5v-2h1v2h1v-1h1v1h1v1h2v-1h1v1h3v-2h2v1h3v-1h5v1h2v-1h4v1h2v-1h1v2h1v-1h9v1h2v-1h6v1h1v-1h2v1h3v1h45v-1h3v-2h1v2h4v1h1v-1h13v-2h1v2h2v-1h1v-1h2v-1h3v1h3v-2h1v2h2v-1h3v-1h2v1h3v-1h1v1h3v-2h3v1h1v-2h2v1h2v-9h1v9h1v1h1v-1h1v1h3v1h1v-1h3v-6h1v7h1v-1h1v1h2v-2h1v-8h2v9h2v-1h1v1h3v-1h2v2h1v-1h1v-1h1v1h1v-1h1v2h1v-2h2v-1h2v-1h1v2h2v-1h1v-1h1v2h1v-1h1v1h1v-1h2v-1h1v-4h1v1h1v3h1v-1h1v-2h1v2h1v-2h1v2h1v-2h1V668h-1v-1h-1v1h-2v-1h-1v-1h-1v1h-2v1h-1v-4h-6v1h-4v-1h-1v1h-3v-1h-1v2h-1v-1h-4v1h-1v-1h-2v1h-1v-1h-1v1h-6v-1h-5v2h-1v-2h-1v-1h-1v1h-3v-1h-1v1h-1v-1h-3v1h-2v-1h-2v2h-1v-1h-1v1h-1v-1h-1v1h-1v-1h-1v-2h-7v-1h-6v1h-3v-1h-2v1h-1v-1h-2v-1h-18v-1h-5v1h-1v-1h-48v1h-5v1h-2v-1h-1v1h-6v1h-1v-1h-5v-1h-1v1h-2v-1h-1v1h-7v-1h-1v1h-5v1h-1v-1h-1v-1h-1v1h-2v-1h-7v1h-4v1h-1v-1h-3v1h-2v-1h-1v3h-1v-1h-1v1h-2v-2h-1v1h-1v1h-2v-1h-3v1h-1v-1h-1v1h-2v-1h-3v1h-1v-2h-6v2h-1v1h-1v-1h-4v-1h-1v2h-1v-1h-1v-2h-1v3h-5v-1h-1v1h-7v-2h-1v2h-8v1h-6v1h-2v-1h-1v1h-9v1h-3v-1h-2v2h-6v-1h-6v1h-1v-1h-4v-2h-1v1h-2v1h-1v-1h-1v1h-1v-1h-8v1h-2v-3h-2v2h-5v1h-3v1h-2v-1h-1v1h-5v-1h-3v1h-1v-2h-1v2h-1v1h-2v-3h-1v3h-1v2h-1v-3h-1v2h-2v-7h-2v4h-1v-2h-2v4h-2v-3h-1v3h-1v-5h-1v5h-1v-1h-2v-3h-1v2h-2v1h-1v-3h-1v3h-3v1h-5v-2h-1v3h-10v-1h-1v-2h-2v3h-7v-1h-2v-1h-5v1h-3v-2h-2v6h-1v-1h-3v-1h-1v2h-2v-5h-2v5h-5v-1h-6v-1h-1v-1h-1v1h-1v-1h-1v1h-2v-3h-1v2h-10v1h-5v-1h-2v2h-2v-1h-2v1h-4v1h-1v-1h-1v1h-2v1h-5v-2h-1v1h-3v-1h-1v1h-4v-1h-3v-1h-1v1h-4v1h-2v1h-1v1h-1v-5h-1v-1h-1v5h-9v-2h-1v2h-2v-6h-2v7h-1v-3h-1v2h-1v-3h-2v4h-1v-1h-1v-3h-1v4h-2v-1h-1v-1h-1v4h-1v1h-1v-1h-3v-3h-1v4h-1v-1h-2v1h-6v1h-9v1h-2v-1h-1v1h-2v-1h-7v1h-1v-1h-1v1h-1v-1h-1v1h-1v-1h-6v-1h-1v1h-1v-1h-2v-1h-19v1h-2v-5h-1v4h-2v-1h-4v-1h-3v-2h-2v4h-3v1h-2v-1h-4v1h-2v-1h-6v1h-2z" fill="#1c70f0"/><path d="M21 655h6v1h7v1h2v-1h1v-1h3v1h2v-1h4v1h4v1h1v1h1v-2h4v-1h8v-1h8v1h2v1h6v1h21v-1h7v-1h10v2h1v-1h4v1h1v1h1v-1h3v1h1v-1h2v1h2v-1h3v2h2v-2h2v1h10v1h2v-2h1v-1h2v-1h2v-1h3v1h1v-1h4v1h7v1h9v-1h4v-1h5v1h1v-1h9v-1h7v2h4v1h5v1h4v1h6v1h1v-1h2v1h1v-1h6v-2h2v-1h6v1h4v1h7v-1h9v1h7v-1h4v1h1v-1h3v2h1v-1h2v1h1v1h1v-1h4v1h2v-1h1v1h6v-1h2v-1h1v-1h2v1h1v-1h2v-1h1v1h3v1h7v-1h4v-1h3v2h2v-2h9v1h6v1h1v-1h2v1h7v1h8v1h2v-1h2v-1h4v-1h4v1h12v-1h5v1h2v1h14v1h1v-1h2v1h1v-1h6v1h19v1h1v-1h3v1h1v-1h12v1h6v-1h17v1h1v-1h1v1h1v-1h2v1h1v-1h1v1h1v-1h1v1h6v-1h5v1h2v-1h1v1h51v-1h1v1h18v-1h1v1h2v-1h9v-1h1v1h4v-1h3v1h1v-1h4v1h1v-1h5v-1h2v1h1v-1h1v-2h1v3h6v1h1v-1h2v1h1v-2h1v2h1v-1h2v1h1v-1h1v-3h2v3h5v1h1v-1h2v1h2v-1h1v1h1v-1h1v1h1v-1h4v-1h1v1h2v-1h2v1h3v-1h3v-1h2v1h7V662h-5v-1h-23v1h-2v-1h-2v1h-1v-1h-12v1h-1v-1h-8v-1h-6v1h-11v-1h-8v1h-6v-1h-83v1h-14v-1h-1v1h-7v-1h-1v1h-7v-1h-13v1h-8v1h-1v-1h-1v1h-2v-1h-3v1h-1v-1h-3v1h-1v-1h-23v1h-1v-1h-2v1h-1v-1h-3v1h-2v-1h-19v1h-1v-1h-9v1h-3v1h-4v1h-4v-1h-9v-1h-4v-1h-22v1h-4v1h-6v-1h-3v-1h-4v1h-2v1h-1v-1h-1v2h-1v1h-1v-1h-1v1h-2v-3h-2v2h-1v-1h-2v1h-2v-1h-1v1h-1v-2h-1v2h-1v-1h-2v-1h-7v1h-18v-1h-1v1h-2v1h-1v-1h-1v1h-1v-1h-5v-1h-1v-1h-1v1h-5v1h-3v3h-4v-1h-1v1h-2v-2h-2v2h-4v-1h-4v-1h-3v-1h-5v-1h-1v-1h-9v1h-12v1h-5v1h-2v1h-4v-1h-5v-1h-8v-1h-4v1h-4v1h-1v1h-1v1h-1v-2h-2v1h-4v1h-1v-1h-3v1h-1v-1h-3v-2h-2v2h-1v-1h-1v1h-1v-1h-2v1h-2v-1h-1v1h-4v1h-3v-1h-2v-1h-1v1h-9v1h-9v1h-19v-1h-7v-1h-2v-1h-13v1h-5v1h-2v-2h-1v1h-5v-1h-1v-1h-2v1h-1v-1h-2v1h-1v1h-3v1h-7v-1h-8z" fill="#1428f0"/><rect x="497" y="660" width="1" height="1" fill="#1cb0fa"/><rect x="498" y="660" width="2" height="1" fill="#1cb0fa"/><rect x="500" y="660" width="3" height="1" fill="#d6f01c"/><rect x="503" y="660" width="1" height="1" fill="#ffb21c"/><rect x="504" y="660" width="1" height="1" fill="#ffb21c"/><rect x="505" y="660" width="2" height="1" fill="#1cb0fa"/><rect x="507" y="660" width="3" height="1" fill="#64f01c"/><rect x="510" y="660" width="4" height="1" fill="#d6f01c"/><rect x="514" y="660" width="4" height="1" fill="#64f01c"/><rect x="518" y="660" width="4" height="1" fill="#1cf04c"/><rect x="522" y="660" width="1" height="1" fill="#64f01c"/><rect x="523" y="660" width="2" height="1" fill="#1cf0b8"/><rect x="525" y="660" width="3" height="1" fill="#ff6c1c"/><rect x="528" y="660" width="2" height="1" fill="#1cf0b8"/><rect x="530" y="660" width="4" height="1" fill="#1cf04c"/><rect x="534" y="660" width="1" height="1" fill="#1cb0fa"/><rect x="535" y="660" width="3" height="1" fill="#ff6c1c"/><rect x="538" y="660" width="3" height="1" fill="#1cb0fa"/><rect x="541" y="660" width="1" height="1" fill="#ff6c1c"/><path d="M39 912v-12h1v12zM40 912v-21h1v21zM49 912v-12h1v12zM50 912v-12h1v12zM51 912v-12h1v12zM60 912v-11h1v11zM74 912v-10h1v10zM76 912v-13h1v13zM94 912v-11h1v11zM103 912v-11h1v11zM115 912v-11h1v11zM116 912v-21h1v21zM117 912v-24h1v24zM120 912v-11h1v11zM121 912v-11h1v11zM124 912v-13h1v13zM127 912v-11h1v11zM132 912v-19h1v19zM134 912v-15h1v15zM136 912v-18h1v18zM137 912v-16h1v16zM139 912v-11h1v11zM142 912v-11h1v11zM144 912v-11h1v11zM146 912v-12h1v12zM149 912v-16h1v16zM152 912v-14h1v14zM160 912v-17h1v17zM165 912v-13h1v13zM174 912v-32h1v32zM175 912v-11h1v11zM180 912v-27h1v27zM185 912v-11h1v11zM187 912v-13h1v13zM189 912v-24h1v24zM192 912v-22h1v22zM199 912v-13h1v13zM201 912v-12h1v12zM205 912v-24h1v24zM210 912v-24h1v24zM212 912v-11h1v11zM215 912v-11h1v11zM219 912v-11h1v11zM224 912v-20h1v20zM225 912v-13h1v13zM228 912v-16h1v16zM230 912v-11h1v11zM232 912v-18h1v18zM248 912v-11h1v11zM250 912v-11h1v11zM252 912v-15h1v15zM261 912v-11h1v11zM264 912v-19h1v19zM267 912v-11h1v11zM273 912v-12h1v12zM274 912v-13h1v13zM275 912v-13h1v13zM276 912v-12h1v12zM277 912v-11h1v11zM278 912v-13h1v13zM279 912v-13h1v13zM285 912v-13h1v13zM287 912v-12h1v12zM288 912v-11h1v11zM291 912v-12h1v12zM292 912v-12h1v12zM297 912v-11h1v11zM299 912v-14h1v14zM300 912v-12h1v12zM301 912v-20h1v20zM302 912v-11h1v11zM304 912v-16h1v16zM305 912v-12h1v12zM307 912v-13h1v13zM310 912v-12h1v12zM311 912v-12h1v12zM313 912v-16h1v16zM314 912v-12h1v12zM315 912v-11h1v11zM319 912v-12h1v12zM320 912v-12h1v12zM323 912v-13h1v13zM326 912v-11h1v11zM327 912v-13h1v13zM329 912v-13h1v13zM332 912v-13h1v13zM333 912v-12h1v12zM337 912v-13h1v13zM345 912v-11h1v11zM359 912v-17h1v17zM360 912v-13h1v13zM365 912v-13h1v13zM368 912v-13h1v13zM370 912v-13h1v13zM371 912v-16h1v16zM374 912v-17h1v17zM377 912v-11h1v11zM378 912v-12h1v12zM379 912v-13h1v13zM382 912v-11h1v11zM384 912v-12h1v12zM385 912v-14h1v14zM386 912v-12h1v12zM388 912v-14h1v14zM390 912v-13h1v13zM393 912v-13h1v13zM394 912v-12h1v12zM396 912v-11h1v11zM397 912v-14h1v14zM398 912v-13h1v13zM401 912v-12h1v12zM402 912v-23h1v23zM406 912v-12h1v12zM411 912v-12h1v12zM413 912v-29h1v29zM414 912v-12h1v12zM415 912v-17h1v17zM420 912v-12h1v12zM421 912v-14h1v14zM427 912v-13h1v13zM428 912v-14h1v14zM429 912v-12h1v12zM432 912v-13h1v13zM433 912v-12h1v12zM435 912v-12h1v12zM436 912v-14h1v14zM440 912v-11h1v11zM446 912v-13h1v13zM448 912v-11h1v11zM449 912v-41h1v41zM451 912v-12h1v12zM457 912v-12h1v12zM461 912v-12h1v12zM462 912v-11h1v11zM463 912v-14h1v14zM466 912v-12h1v12zM472 912v-13h1v13zM476 912v-13h1v13zM481 912v-12h1v12zM487 912v-13h1v13zM489 912v-12h1v12zM490 912v-12h1v12zM494 912v-12h1v12zM495 912v-11h1v11zM497 912v-16h1v16zM500 912v-16h1v16zM503 912v-12h1v12zM504 912v-11h1v11zM507 912v-14h1v14zM509 912v-12h1v12zM511 912v-12h1v12zM512 912v-12h1v12zM514 912v-11h1v11zM518 912v-14h1v14zM521 912v-11h1v11zM522 912v-13h1v13zM526 912v-11h1v11zM535 912v-50h1v50zM536 912v-50h1v50zM537 912v-128h1v128zM538 912v-30h1v30zM539 912v-60h1v60zM540 912v-30h1v30zM541 912v-31h1v31zM542 912v-32h1v32zM543 912v-34h1v34zM544 912v-35h1v35zM545 912v-18h1v18zM546 912v-16h1v16zM547 912v-30h1v30zM548 912v-26h1v26zM549 912v-22h1v22zM550 912v-21h1v21zM551 912v-20h1v20zM552 912v-30h1v30zM553 912v-66h1v66zM554 912v-38h1v38zM555 912v-42h1v42zM556 912v-40h1v40zM557 912v-37h1v37zM558 912v-18h1v18zM559 912v-36h1v36zM560 912v-28h1v28zM561 912v-47h1v47zM562 912v-30h1v30zM563 912v-38h1v38zM564 912v-37h1v37zM565 912v-32h1v32zM566 912v-58h1v58zM567 912v-28h1v28zM568 912v-20h1v20zM569 912v-18h1v18zM570 912v-35h1v35zM571 912v-18h1v18zM572 912v-32h1v32zM573 912v-28h1v28zM574 912v-19h1v19zM575 912v-45h1v45zM576 912v-88h1v88zM577 912v-25h1v25zM578 912v-27h1v27zM579 912v-16h1v16zM580 912v-26h1v26zM581 912v-44h1v44zM582 912v-24h1v24zM583 912v-20h1v20zM584 912v-64h1v64zM585 912v-50h1v50zM586 912v-48h1v48zM587 912v-22h1v22zM588 912v-24h1v24zM589 912v-26h1v26zM590 912v-28h1v28zM591 912v-30h1v30zM592 912v-16h1v16zM593 912v-14h1v14zM594 912v-24h1v24zM595 912v-22h1v22zM596 912v-33h1v33zM597 912v-24h1v24zM598 912v-21h1v21zM599 912v-13h1v13zM600 912v-24h1v24zM601 912v-26h1v26zM602 912v-17h1v17zM603 912v-42h1v42zM604 912v-16h1v16zM605 912v-26h1v26zM606 912v-25h1v25zM607 912v-24h1v24zM608 912v-38h1v38zM609 912v-34h1v34zM610 912v-40h1v40zM611 912v-25h1v25zM612 912v-36h1v36zM613 912v-13h1v13zM614 912v-12h1v12zM615 912v-30h1v30zM616 912v-13h1v13zM617 912v-12h1v12zM618 912v-13h1v13zM619 912v-109h1v109zM620 912v-30h1v30zM621 912v-29h1v29zM622 912v-15h1v15zM623 912v-28h1v28zM624 912v-14h1v14zM625 912v-32h1v32zM626 912v-21h1v21zM627 912v-20h1v20zM628 912v-14h1v14zM629 912v-13h1v13zM630 912v-16h1v16zM631 912v-34h1v34zM632 912v-20h1v20zM633 912v-18h1v18zM634 912v-22h1v22zM635 912v-16h1v16zM636 912v-27h1v27zM637 912v-17h1v17zM638 912v-23h1v23zM639 912v-15h1v15zM640 912v-26h1v26zM641 912v-35h1v35zM642 912v-15h1v15zM643 912v-26h1v26zM644 912v-24h1v24zM645 912v-27h1v27zM646 912v-42h1v42zM647 912v-20h1v20zM648 912v-16h1v16zM649 912v-14h1v14zM650 912v-12h1v12zM651 912v-16h1v16zM652 912v-15h1v15zM653 912v-14h1v14zM654 912v-12h1v12zM655 912v-22h1v22zM656 912v-22h1v22z" fill="#fff"/><rect x="20.5" y="20.5" width="642" height="507" fill="none" stroke="#f4f4f4" stroke-width="1"/><rect x="20.5" y="555.5" width="642" height="209" fill="none" stroke="#f4f4f4" stroke-width="1"/><rect x="20.5" y="782.5" width="642" height="130" fill="none" stroke="#f4f4f4" stroke-width="1"/><rect x="56" y="531" width="1" height="4" fill="#dcdcdc"/><rect x="56" y="548" width="1" height="4" fill="#dcdcdc"/><rect x="56" y="768" width="1" height="10" fill="#e0e0e0"/><rect x="176" y="531" width="1" height="4" fill="#dcdcdc"/><rect x="176" y="548" width="1" height="4" fill="#dcdcdc"/><rect x="176" y="768" width="1" height="10" fill="#e0e0e0"/><rect x="296" y="531" width="1" height="4" fill="#dcdcdc"/><rect x="296" y="548" width="1" height="4" fill="#dcdcdc"/><rect x="296" y="768" width="1" height="10" fill="#e0e0e0"/><rect x="416" y="531" width="1" height="4" fill="#dcdcdc"/><rect x="416" y="548" width="1" height="4" fill="#dcdcdc"/><rect x="416" y="768" width="1" height="10" fill="#e0e0e0"/><rect x="536" y="531" width="1" height="4" fill="#dcdcdc"/><rect x="536" y="548" width="1" height="4" fill="#dcdcdc"/><rect x="536" y="768" width="1" height="10" fill="#e0e0e0"/><rect x="656" y="531" width="1" height="4" fill="#dcdcdc"/><rect x="656" y="548" width="1" height="4" fill="#dcdcdc"/><rect x="656" y="768" width="1" height="10" fill="#e0e0e0"/></g><g font-family="'Liberation Sans', Arial, sans-serif"><text x="20.5" y="15.7" font-size="11" text-anchor="start" fill="#ffffff" textLength="176.5" lengthAdjust="spacingAndGlyphs">ZF.H14 - Mar 2014 5 YEAR T-NOTES</text><text x="215.5" y="15.7" font-size="11" text-anchor="start" fill="#ffffff" textLength="116" lengthAdjust="spacingAndGlyphs">Market Date: 02/07/2014</text><text transform="scale(1.36,1)" x="18.60 35.81 50.96 68.01 83.01" y="44" font-size="18" font-style="italic" fill="#8a8ac8">NANEX</text><text x="665" y="30" font-size="11" text-anchor="start" fill="#ffffff">-<tspan x="669.8" textLength="32.6" lengthAdjust="spacingAndGlyphs">121.20</tspan></text><text x="665" y="85" font-size="11" text-anchor="start" fill="#ffffff">-<tspan x="669.8" textLength="32.6" lengthAdjust="spacingAndGlyphs">121.10</tspan></text><text x="665" y="140" font-size="11" text-anchor="start" fill="#ffffff">-<tspan x="669.8" textLength="32.6" lengthAdjust="spacingAndGlyphs">121.00</tspan></text><text x="665" y="195" font-size="11" text-anchor="start" fill="#ffffff">-<tspan x="669.8" textLength="32.6" lengthAdjust="spacingAndGlyphs">120.90</tspan></text><text x="665" y="250" font-size="11" text-anchor="start" fill="#ffffff">-<tspan x="669.8" textLength="32.6" lengthAdjust="spacingAndGlyphs">120.80</tspan></text><text x="665" y="306" font-size="11" text-anchor="start" fill="#ffffff">-<tspan x="669.8" textLength="32.6" lengthAdjust="spacingAndGlyphs">120.70</tspan></text><text x="665" y="361" font-size="11" text-anchor="start" fill="#ffffff">-<tspan x="669.8" textLength="32.6" lengthAdjust="spacingAndGlyphs">120.60</tspan></text><text x="665" y="416" font-size="11" text-anchor="start" fill="#ffffff">-<tspan x="669.8" textLength="32.6" lengthAdjust="spacingAndGlyphs">120.50</tspan></text><text x="665" y="471" font-size="11" text-anchor="start" fill="#ffffff">-<tspan x="669.8" textLength="32.6" lengthAdjust="spacingAndGlyphs">120.40</tspan></text><text x="665" y="526" font-size="11" text-anchor="start" fill="#ffffff">-<tspan x="669.8" textLength="32.6" lengthAdjust="spacingAndGlyphs">120.30</tspan></text><text x="665" y="565" font-size="11" text-anchor="start" fill="#ffffff">-<tspan x="669.2">6250</tspan></text><text x="665" y="614" font-size="11" text-anchor="start" fill="#ffffff">-<tspan x="669.2">3125</tspan></text><text x="665" y="664" font-size="11" text-anchor="start" fill="#ffffff">-<tspan x="669.2">0</tspan></text><text x="665" y="713" font-size="11" text-anchor="start" fill="#ffffff">-<tspan x="669.2">3125</tspan></text><text x="665" y="763" font-size="11" text-anchor="start" fill="#ffffff">-<tspan x="669.2">6250</tspan></text><text x="664.6" y="792" font-size="11" text-anchor="start" fill="#ffffff">-<tspan x="666.3">3000</tspan></text><text x="664.6" y="833" font-size="11" text-anchor="start" fill="#ffffff">-<tspan x="666.3">2000</tspan></text><text x="664.6" y="874" font-size="11" text-anchor="start" fill="#ffffff">-<tspan x="666.3">1000</tspan></text><text x="55.5" y="545" font-size="11" text-anchor="middle" fill="#ffffff" textLength="41.6" lengthAdjust="spacingAndGlyphs">08:22:00</text><text x="175.5" y="545" font-size="11" text-anchor="middle" fill="#ffffff" textLength="41.6" lengthAdjust="spacingAndGlyphs">08:24:00</text><text x="295.5" y="545" font-size="11" text-anchor="middle" fill="#ffffff" textLength="41.6" lengthAdjust="spacingAndGlyphs">08:26:00</text><text x="415.5" y="545" font-size="11" text-anchor="middle" fill="#ffffff" textLength="41.6" lengthAdjust="spacingAndGlyphs">08:28:00</text><text x="535.5" y="545" font-size="11" text-anchor="middle" fill="#ffffff" textLength="41.6" lengthAdjust="spacingAndGlyphs">08:30:00</text><text x="655.5" y="545" font-size="11" text-anchor="middle" fill="#ffffff" textLength="41.6" lengthAdjust="spacingAndGlyphs">08:32:00</text><text x="9.5" y="212.5" font-size="11" text-anchor="middle" fill="#ffffff">D</text><text x="9.5" y="223.5" font-size="11" text-anchor="middle" fill="#ffffff">e</text><text x="9.5" y="234.5" font-size="11" text-anchor="middle" fill="#ffffff">p</text><text x="9.5" y="245.5" font-size="11" text-anchor="middle" fill="#ffffff">t</text><text x="9.5" y="256.5" font-size="11" text-anchor="middle" fill="#ffffff">h</text><text x="9.5" y="278.5" font-size="11" text-anchor="middle" fill="#ffffff">H</text><text x="9.5" y="289.5" font-size="11" text-anchor="middle" fill="#ffffff">e</text><text x="9.5" y="300.5" font-size="11" text-anchor="middle" fill="#ffffff">a</text><text x="9.5" y="311.5" font-size="11" text-anchor="middle" fill="#ffffff">t</text><text x="9.5" y="333.5" font-size="11" text-anchor="middle" fill="#ffffff">M</text><text x="9.5" y="344.5" font-size="11" text-anchor="middle" fill="#ffffff">a</text><text x="9.5" y="355.5" font-size="11" text-anchor="middle" fill="#ffffff">p</text><text x="9.5" y="631.5" font-size="11" text-anchor="middle" fill="#ffffff">S</text><text x="9.5" y="642.5" font-size="11" text-anchor="middle" fill="#ffffff">i</text><text x="9.5" y="653.5" font-size="11" text-anchor="middle" fill="#ffffff">z</text><text x="9.5" y="664.5" font-size="11" text-anchor="middle" fill="#ffffff">e</text><text x="9.5" y="686.5" font-size="11" text-anchor="middle" fill="#ffffff">M</text><text x="9.5" y="697.5" font-size="11" text-anchor="middle" fill="#ffffff">a</text><text x="9.5" y="708.5" font-size="11" text-anchor="middle" fill="#ffffff">p</text><text x="9.5" y="830.5" font-size="11" text-anchor="middle" fill="#ffffff">V</text><text x="9.5" y="841.5" font-size="11" text-anchor="middle" fill="#ffffff">o</text><text x="9.5" y="852.5" font-size="11" text-anchor="middle" fill="#ffffff">l</text><text x="9.5" y="863.5" font-size="11" text-anchor="middle" fill="#ffffff">u</text><text x="9.5" y="874.5" font-size="11" text-anchor="middle" fill="#ffffff">m</text><text x="9.5" y="885.5" font-size="11" text-anchor="middle" fill="#ffffff">e</text></g></svg></body></html>
